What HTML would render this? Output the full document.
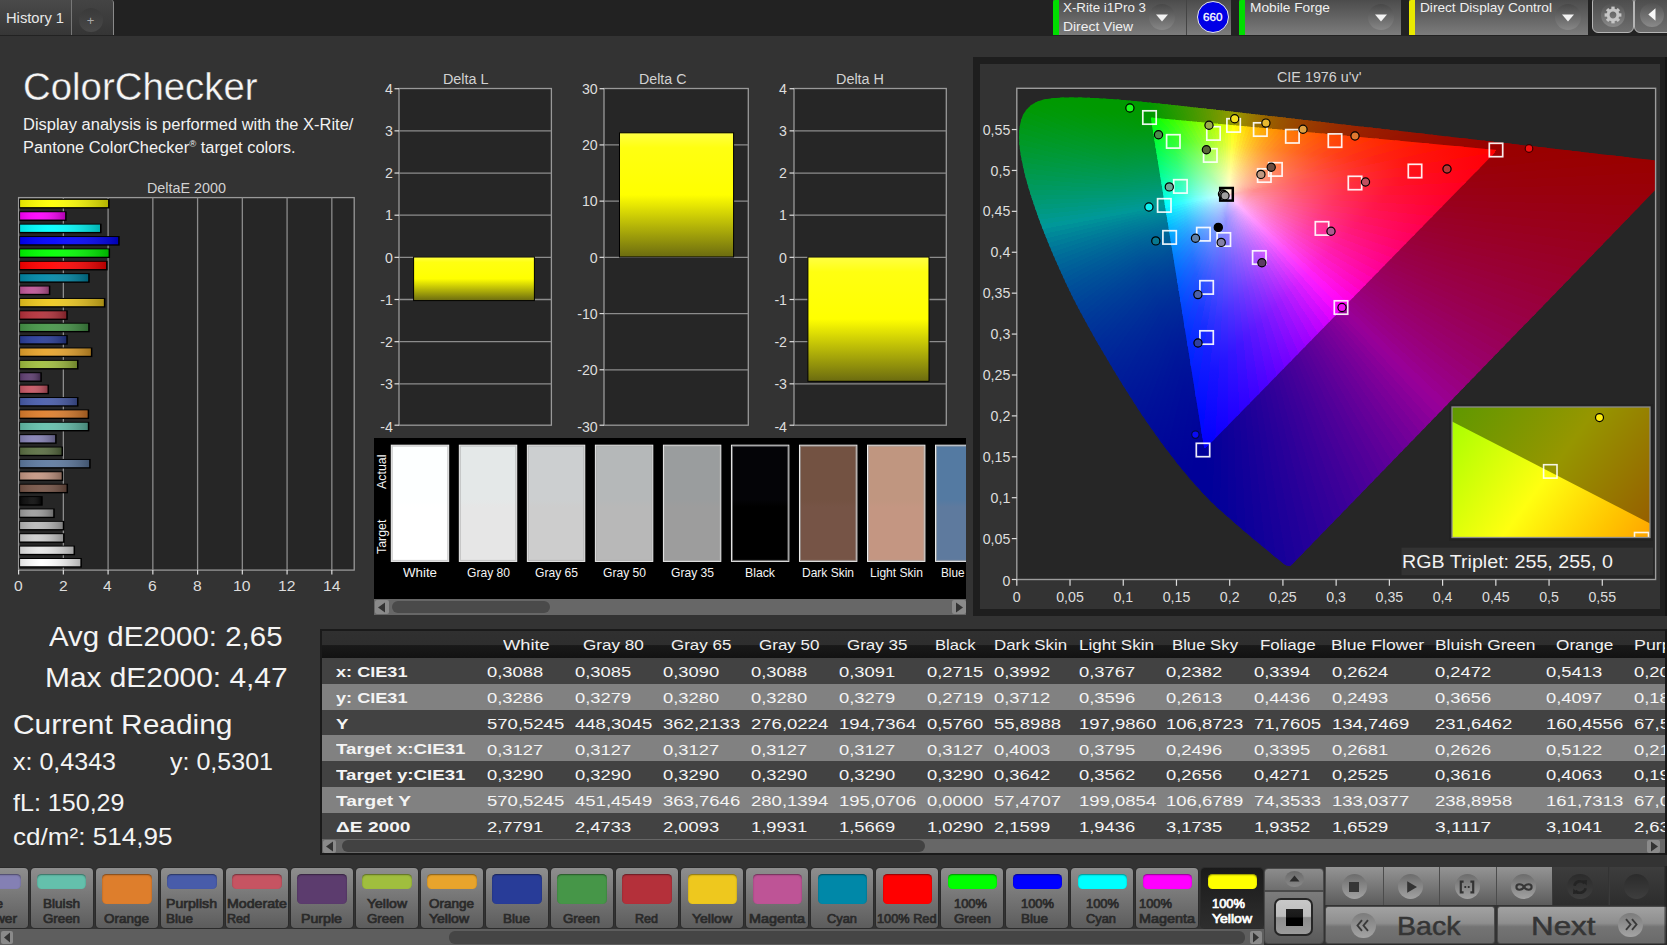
<!DOCTYPE html><html><head><meta charset="utf-8"><title>ColorChecker</title><style>
html,body{margin:0;padding:0}
body{width:1667px;height:945px;overflow:hidden;background:#333;font-family:"Liberation Sans",sans-serif;position:relative}
#app{position:absolute;left:0;top:0;width:1667px;height:945px;overflow:hidden}
#app div,#app svg{position:absolute;box-sizing:border-box}
.t{position:absolute;white-space:pre;line-height:1;transform-origin:0 50%}

</style></head><body><div id="app"><div style="left:0px;top:0px;width:1667px;height:36px;background:#222"></div><div style="left:0px;top:0px;width:72px;height:35px;background:linear-gradient(#4a4a4a,#363636);border-right:1px solid #777"></div><div style="left:72px;top:0px;width:41.5px;height:35px;background:linear-gradient(#444,#353535);border-right:1px solid #8a8a8a;border-radius:0 3px 0 0"></div><div style="left:78.6px;top:7.5px;width:24px;height:24px;border-radius:50%;background:linear-gradient(#3a3a3a,#484848)"></div><span class="t" style="left:6px;top:10.65px;font-size:14px;color:#e8e8e8;transform:scaleX(1.050);">History 1</span><span class="t" style="left:86.7px;top:13.8px;font-size:13px;color:#aaa;">+</span><div style="left:1052.5px;top:0px;width:178.5px;height:35px;background:linear-gradient(#4c4c4c,#7c7c7c)"></div><div style="left:1053.1px;top:0px;width:6.2px;height:35px;background:#00de00;border-radius:2px 0 0 0"></div><div style="left:1149px;top:4px;width:26px;height:26px;border-radius:50%;background:linear-gradient(#484848,#878787)"></div><svg style="left:1155px;top:14.3px" width="14" height="8" viewBox="0 0 14 8"><path d="M1 0.5H13L7 7.5Z" fill="#f2f2f2"/></svg><div style="left:1185.5px;top:0px;width:1px;height:35px;background:#444"></div><span class="t" style="left:1063px;top:0.83px;font-size:13.2px;color:#f0f0f0;transform:scaleX(1.011);">X-Rite i1Pro 3</span><span class="t" style="left:1063px;top:19.83px;font-size:13.2px;color:#f0f0f0;transform:scaleX(1.053);">Direct View</span><div style="left:1196.5px;top:1px;width:32px;height:32px;border-radius:50%;background:#0000e6;border:1.3px solid #e8e8e8"></div><span class="t" style="left:1202.75px;top:12.07px;font-size:11.5px;color:#fff;transform:scaleX(1.016);-webkit-text-stroke:0.3px #fff;">660</span><div style="left:1238.5px;top:0px;width:162.5px;height:35px;background:linear-gradient(#4c4c4c,#7c7c7c)"></div><div style="left:1239.1px;top:0px;width:6.2px;height:35px;background:#00de00;border-radius:2px 0 0 0"></div><div style="left:1368px;top:4px;width:26px;height:26px;border-radius:50%;background:linear-gradient(#484848,#878787)"></div><svg style="left:1374px;top:14.3px" width="14" height="8" viewBox="0 0 14 8"><path d="M1 0.5H13L7 7.5Z" fill="#f2f2f2"/></svg><span class="t" style="left:1250px;top:0.83px;font-size:13.2px;color:#f0f0f0;transform:scaleX(1.039);">Mobile Forge</span><div style="left:1408.5px;top:0px;width:179px;height:35px;background:linear-gradient(#4c4c4c,#7c7c7c)"></div><div style="left:1409.1px;top:0px;width:6.2px;height:35px;background:#e9e900;border-radius:2px 0 0 0"></div><div style="left:1555px;top:4px;width:26px;height:26px;border-radius:50%;background:linear-gradient(#484848,#878787)"></div><svg style="left:1561px;top:14.3px" width="14" height="8" viewBox="0 0 14 8"><path d="M1 0.5H13L7 7.5Z" fill="#f2f2f2"/></svg><span class="t" style="left:1420px;top:0.83px;font-size:13.2px;color:#f0f0f0;transform:scaleX(1.035);">Direct Display Control</span><div style="left:1592px;top:-4px;width:41.5px;height:36.5px;background:linear-gradient(#4a4a4a,#6e6e6e);border:1.3px solid #b5b5b5;border-radius:6px"></div><div style="left:1600.5px;top:3px;width:24px;height:24px;border-radius:50%;background:linear-gradient(#525252,#8a8a8a)"></div><svg style="left:1602.6px;top:5.2px" width="20" height="20" viewBox="-10 -10 20 20"><g fill="none" stroke="#c6c6c6"><circle r="4.9" stroke-width="3"/><g stroke-width="3.3"><path d="M0 -5.5V-8.4" transform="rotate(0)"/><path d="M0 -5.5V-8.4" transform="rotate(45)"/><path d="M0 -5.5V-8.4" transform="rotate(90)"/><path d="M0 -5.5V-8.4" transform="rotate(135)"/><path d="M0 -5.5V-8.4" transform="rotate(180)"/><path d="M0 -5.5V-8.4" transform="rotate(225)"/><path d="M0 -5.5V-8.4" transform="rotate(270)"/><path d="M0 -5.5V-8.4" transform="rotate(315)"/></g></g></svg><div style="left:1634px;top:-4px;width:40px;height:36.5px;background:linear-gradient(#4a4a4a,#6e6e6e);border:1.3px solid #b5b5b5;border-radius:6px"></div><div style="left:1640px;top:3px;width:24px;height:24px;border-radius:50%;background:linear-gradient(#525252,#8a8a8a)"></div><svg style="left:1647.5px;top:8.3px" width="8" height="13" viewBox="0 0 8 13"><path d="M7.5 0.3V12.7L0.3 6.5Z" fill="#f6f6f6"/></svg><span class="t" style="left:22.5px;top:67.22px;font-size:39.2px;color:#f6f6f6;transform:scaleX(0.979);-webkit-text-stroke:0.35px #333;">ColorChecker</span><span class="t" style="left:23.2px;top:116.99px;font-size:15.6px;color:#f2f2f2;transform:scaleX(1.056);">Display analysis is performed with the X-Rite/</span><span class="t" style="left:23.2px;top:139.69px;font-size:15.6px;color:#f2f2f2;transform:scaleX(1.053);">Pantone ColorChecker<span style="font-size:9px;position:relative;top:-5.5px">®</span> target colors.</span><span class="t" style="left:147px;top:180.55px;font-size:14px;color:#d2d2d2;transform:scaleX(1.025);">DeltaE 2000</span><svg style="left:0;top:170px" width="380" height="440" viewBox="0 170 380 440"><defs><linearGradient id="bsh" x1="0" x2="1" y1="0" y2="0"><stop offset="0" stop-color="#000" stop-opacity=".12"/><stop offset=".35" stop-color="#fff" stop-opacity=".06"/><stop offset="1" stop-color="#000" stop-opacity=".3"/></linearGradient></defs><rect x="18.6" y="197.6" width="335.6" height="372.5" fill="#262626" stroke="#999" stroke-width="1.3"/><path d="M63.35 197.6V570.1" stroke="#8c8c8c" stroke-width="1.3"/><path d="M108.09 197.6V570.1" stroke="#8c8c8c" stroke-width="1.3"/><path d="M152.84 197.6V570.1" stroke="#8c8c8c" stroke-width="1.3"/><path d="M197.59 197.6V570.1" stroke="#8c8c8c" stroke-width="1.3"/><path d="M242.33 197.6V570.1" stroke="#8c8c8c" stroke-width="1.3"/><path d="M287.08 197.6V570.1" stroke="#8c8c8c" stroke-width="1.3"/><path d="M331.83 197.6V570.1" stroke="#8c8c8c" stroke-width="1.3"/><path d="M18.6 570.1V574.6" stroke="#ddd" stroke-width="1.2"/><path d="M63.35 570.1V574.6" stroke="#ddd" stroke-width="1.2"/><path d="M108.09 570.1V574.6" stroke="#ddd" stroke-width="1.2"/><path d="M152.84 570.1V574.6" stroke="#ddd" stroke-width="1.2"/><path d="M197.59 570.1V574.6" stroke="#ddd" stroke-width="1.2"/><path d="M242.33 570.1V574.6" stroke="#ddd" stroke-width="1.2"/><path d="M287.08 570.1V574.6" stroke="#ddd" stroke-width="1.2"/><path d="M331.83 570.1V574.6" stroke="#ddd" stroke-width="1.2"/><rect x="19.3" y="198.9" width="90.34" height="9.6" fill="#000"/><rect x="20.1" y="199.9" width="87.94" height="7.2" fill="rgb(255,255,0)"/><rect x="20.1" y="199.9" width="87.94" height="7.2" fill="url(#bsh)"/><rect x="19.3" y="211.28" width="47.38" height="9.6" fill="#000"/><rect x="20.1" y="212.28" width="44.98" height="7.2" fill="rgb(255,0,255)"/><rect x="20.1" y="212.28" width="44.98" height="7.2" fill="url(#bsh)"/><rect x="19.3" y="223.67" width="82.29" height="9.6" fill="#000"/><rect x="20.1" y="224.67" width="79.89" height="7.2" fill="rgb(0,255,255)"/><rect x="20.1" y="224.67" width="79.89" height="7.2" fill="url(#bsh)"/><rect x="19.3" y="236.05" width="100.41" height="9.6" fill="#000"/><rect x="20.1" y="237.05" width="98.01" height="7.2" fill="rgb(0,0,255)"/><rect x="20.1" y="237.05" width="98.01" height="7.2" fill="url(#bsh)"/><rect x="19.3" y="248.43" width="90.79" height="9.6" fill="#000"/><rect x="20.1" y="249.43" width="88.39" height="7.2" fill="rgb(0,255,0)"/><rect x="20.1" y="249.43" width="88.39" height="7.2" fill="url(#bsh)"/><rect x="19.3" y="260.82" width="88.33" height="9.6" fill="#000"/><rect x="20.1" y="261.82" width="85.93" height="7.2" fill="rgb(255,0,0)"/><rect x="20.1" y="261.82" width="85.93" height="7.2" fill="url(#bsh)"/><rect x="19.3" y="273.2" width="70.43" height="9.6" fill="#000"/><rect x="20.1" y="274.2" width="68.03" height="7.2" fill="rgb(0,136,168)"/><rect x="20.1" y="274.2" width="68.03" height="7.2" fill="url(#bsh)"/><rect x="19.3" y="285.58" width="31.05" height="9.6" fill="#000"/><rect x="20.1" y="286.58" width="28.65" height="7.2" fill="rgb(190,84,150)"/><rect x="20.1" y="286.58" width="28.65" height="7.2" fill="url(#bsh)"/><rect x="19.3" y="297.97" width="86.09" height="9.6" fill="#000"/><rect x="20.1" y="298.97" width="83.69" height="7.2" fill="rgb(238,200,30)"/><rect x="20.1" y="298.97" width="83.69" height="7.2" fill="url(#bsh)"/><rect x="19.3" y="310.35" width="48.5" height="9.6" fill="#000"/><rect x="20.1" y="311.35" width="46.1" height="7.2" fill="rgb(180,48,58)"/><rect x="20.1" y="311.35" width="46.1" height="7.2" fill="url(#bsh)"/><rect x="19.3" y="322.73" width="70.43" height="9.6" fill="#000"/><rect x="20.1" y="323.73" width="68.03" height="7.2" fill="rgb(70,150,72)"/><rect x="20.1" y="323.73" width="68.03" height="7.2" fill="url(#bsh)"/><rect x="19.3" y="335.12" width="48.5" height="9.6" fill="#000"/><rect x="20.1" y="336.12" width="46.1" height="7.2" fill="rgb(40,60,152)"/><rect x="20.1" y="336.12" width="46.1" height="7.2" fill="url(#bsh)"/><rect x="19.3" y="347.5" width="73.11" height="9.6" fill="#000"/><rect x="20.1" y="348.5" width="70.71" height="7.2" fill="rgb(232,164,44)"/><rect x="20.1" y="348.5" width="70.71" height="7.2" fill="url(#bsh)"/><rect x="19.3" y="359.88" width="59.24" height="9.6" fill="#000"/><rect x="20.1" y="360.88" width="56.84" height="7.2" fill="rgb(160,190,62)"/><rect x="20.1" y="360.88" width="56.84" height="7.2" fill="url(#bsh)"/><rect x="19.3" y="372.27" width="22.55" height="9.6" fill="#000"/><rect x="20.1" y="373.27" width="20.15" height="7.2" fill="rgb(92,60,110)"/><rect x="20.1" y="373.27" width="20.15" height="7.2" fill="url(#bsh)"/><rect x="19.3" y="384.65" width="29.71" height="9.6" fill="#000"/><rect x="20.1" y="385.65" width="27.31" height="7.2" fill="rgb(198,84,98)"/><rect x="20.1" y="385.65" width="27.31" height="7.2" fill="url(#bsh)"/><rect x="19.3" y="397.03" width="59.24" height="9.6" fill="#000"/><rect x="20.1" y="398.03" width="56.84" height="7.2" fill="rgb(72,92,170)"/><rect x="20.1" y="398.03" width="56.84" height="7.2" fill="url(#bsh)"/><rect x="19.3" y="409.42" width="69.85" height="9.6" fill="#000"/><rect x="20.1" y="410.42" width="67.45" height="7.2" fill="rgb(222,126,44)"/><rect x="20.1" y="410.42" width="67.45" height="7.2" fill="url(#bsh)"/><rect x="19.3" y="421.8" width="70.02" height="9.6" fill="#000"/><rect x="20.1" y="422.8" width="67.62" height="7.2" fill="rgb(100,192,172)"/><rect x="20.1" y="422.8" width="67.62" height="7.2" fill="url(#bsh)"/><rect x="19.3" y="434.18" width="37.38" height="9.6" fill="#000"/><rect x="20.1" y="435.18" width="34.98" height="7.2" fill="rgb(132,128,180)"/><rect x="20.1" y="435.18" width="34.98" height="7.2" fill="url(#bsh)"/><rect x="19.3" y="446.57" width="43.7" height="9.6" fill="#000"/><rect x="20.1" y="447.57" width="41.3" height="7.2" fill="rgb(90,110,66)"/><rect x="20.1" y="447.57" width="41.3" height="7.2" fill="url(#bsh)"/><rect x="19.3" y="458.95" width="71.4" height="9.6" fill="#000"/><rect x="20.1" y="459.95" width="69" height="7.2" fill="rgb(94,122,160)"/><rect x="20.1" y="459.95" width="69" height="7.2" fill="url(#bsh)"/><rect x="19.3" y="471.33" width="43.88" height="9.6" fill="#000"/><rect x="20.1" y="472.33" width="41.48" height="7.2" fill="rgb(196,150,130)"/><rect x="20.1" y="472.33" width="41.48" height="7.2" fill="url(#bsh)"/><rect x="19.3" y="483.72" width="48.72" height="9.6" fill="#000"/><rect x="20.1" y="484.72" width="46.32" height="7.2" fill="rgb(118,84,70)"/><rect x="20.1" y="484.72" width="46.32" height="7.2" fill="url(#bsh)"/><rect x="19.3" y="496.1" width="23.42" height="9.6" fill="#000"/><rect x="20.1" y="497.1" width="21.02" height="7.2" fill="rgb(8,8,8)"/><rect x="20.1" y="497.1" width="21.02" height="7.2" fill="url(#bsh)"/><rect x="19.3" y="508.48" width="35.46" height="9.6" fill="#000"/><rect x="20.1" y="509.48" width="33.06" height="7.2" fill="rgb(157,157,157)"/><rect x="20.1" y="509.48" width="33.06" height="7.2" fill="url(#bsh)"/><rect x="19.3" y="520.87" width="44.99" height="9.6" fill="#000"/><rect x="20.1" y="521.87" width="42.59" height="7.2" fill="rgb(184,184,184)"/><rect x="20.1" y="521.87" width="42.59" height="7.2" fill="url(#bsh)"/><rect x="19.3" y="533.25" width="45.35" height="9.6" fill="#000"/><rect x="20.1" y="534.25" width="42.95" height="7.2" fill="rgb(205,205,205)"/><rect x="20.1" y="534.25" width="42.95" height="7.2" fill="url(#bsh)"/><rect x="19.3" y="545.63" width="55.74" height="9.6" fill="#000"/><rect x="20.1" y="546.63" width="53.34" height="7.2" fill="rgb(230,230,230)"/><rect x="20.1" y="546.63" width="53.34" height="7.2" fill="url(#bsh)"/><rect x="19.3" y="558.02" width="62.58" height="9.6" fill="#000"/><rect x="20.1" y="559.02" width="60.18" height="7.2" fill="rgb(255,255,255)"/><rect x="20.1" y="559.02" width="60.18" height="7.2" fill="url(#bsh)"/></svg><span class="t" style="left:13.95px;top:580.12px;font-size:13.8px;color:#ddd;transform:scaleX(1.132);">0</span><span class="t" style="left:58.7px;top:580.12px;font-size:13.8px;color:#ddd;transform:scaleX(1.132);">2</span><span class="t" style="left:103.44px;top:580.12px;font-size:13.8px;color:#ddd;transform:scaleX(1.132);">4</span><span class="t" style="left:148.19px;top:580.12px;font-size:13.8px;color:#ddd;transform:scaleX(1.132);">6</span><span class="t" style="left:192.94px;top:580.12px;font-size:13.8px;color:#ddd;transform:scaleX(1.132);">8</span><span class="t" style="left:233.28px;top:580.12px;font-size:13.8px;color:#ddd;transform:scaleX(1.139);">10</span><span class="t" style="left:278.03px;top:580.12px;font-size:13.8px;color:#ddd;transform:scaleX(1.139);">12</span><span class="t" style="left:322.78px;top:580.12px;font-size:13.8px;color:#ddd;transform:scaleX(1.139);">14</span><span class="t" style="left:49px;top:622.77px;font-size:27.8px;color:#f4f4f4;transform:scaleX(1.059);">Avg dE2000: 2,65</span><span class="t" style="left:44.5px;top:664.07px;font-size:27.8px;color:#f4f4f4;transform:scaleX(1.075);">Max dE2000: 4,47</span><span class="t" style="left:13px;top:711.47px;font-size:27.8px;color:#f4f4f4;transform:scaleX(1.076);">Current Reading</span><span class="t" style="left:13px;top:750.35px;font-size:23.8px;color:#f4f4f4;transform:scaleX(1.052);">x: 0,4343</span><span class="t" style="left:169.5px;top:750.35px;font-size:23.8px;color:#f4f4f4;transform:scaleX(1.052);">y: 0,5301</span><span class="t" style="left:13px;top:790.85px;font-size:23.8px;color:#f4f4f4;transform:scaleX(1.053);">fL: 150,29</span><span class="t" style="left:13px;top:824.85px;font-size:23.8px;color:#f4f4f4;transform:scaleX(1.096);">cd/m²: 514,95</span><svg style="left:368.9px;top:60px" width="192.4" height="380" viewBox="368.9 60 192.4 380"><defs><linearGradient id="dg398" x1="0" x2="0" y1="0" y2="1"><stop offset="0" stop-color="#ff4"/><stop offset=".12" stop-color="#ff1"/><stop offset=".5" stop-color="#ff0"/><stop offset="1" stop-color="#6b6b10"/></linearGradient></defs><rect x="398.9" y="88.5" width="152.4" height="336.7" fill="#262626" stroke="#999" stroke-width="1.3"/><path d="M394.4 88.7H398.9" stroke="#ddd" stroke-width="1.2"/><path d="M398.9 130.86H551.3" stroke="#8c8c8c" stroke-width="1.3"/><path d="M394.4 130.86H398.9" stroke="#ddd" stroke-width="1.2"/><path d="M398.9 173.03H551.3" stroke="#8c8c8c" stroke-width="1.3"/><path d="M394.4 173.03H398.9" stroke="#ddd" stroke-width="1.2"/><path d="M398.9 215.19H551.3" stroke="#8c8c8c" stroke-width="1.3"/><path d="M394.4 215.19H398.9" stroke="#ddd" stroke-width="1.2"/><path d="M398.9 257.35H551.3" stroke="#8c8c8c" stroke-width="1.3"/><path d="M394.4 257.35H398.9" stroke="#ddd" stroke-width="1.2"/><path d="M398.9 299.51H551.3" stroke="#8c8c8c" stroke-width="1.3"/><path d="M394.4 299.51H398.9" stroke="#ddd" stroke-width="1.2"/><path d="M398.9 341.68H551.3" stroke="#8c8c8c" stroke-width="1.3"/><path d="M394.4 341.68H398.9" stroke="#ddd" stroke-width="1.2"/><path d="M398.9 383.84H551.3" stroke="#8c8c8c" stroke-width="1.3"/><path d="M394.4 383.84H398.9" stroke="#ddd" stroke-width="1.2"/><path d="M394.4 425.2H398.9" stroke="#ddd" stroke-width="1.2"/><rect x="413.5" y="257" width="120.8" height="43.6" fill="url(#dg398)" stroke="#000" stroke-width="1"/></svg><span class="t" style="left:442.75px;top:72.35px;font-size:14px;color:#d2d2d2;transform:scaleX(1.026);">Delta L</span><span class="t" style="left:385.01px;top:81.78px;font-size:14.2px;color:#ddd;">4</span><span class="t" style="left:385.01px;top:124.02px;font-size:14.2px;color:#ddd;">3</span><span class="t" style="left:385.01px;top:166.25px;font-size:14.2px;color:#ddd;">2</span><span class="t" style="left:385.01px;top:208.49px;font-size:14.2px;color:#ddd;">1</span><span class="t" style="left:385.01px;top:250.73px;font-size:14.2px;color:#ddd;">0</span><span class="t" style="left:380.27px;top:292.97px;font-size:14.2px;color:#ddd;">-1</span><span class="t" style="left:380.27px;top:335.2px;font-size:14.2px;color:#ddd;">-2</span><span class="t" style="left:380.27px;top:377.44px;font-size:14.2px;color:#ddd;">-3</span><span class="t" style="left:380.27px;top:419.68px;font-size:14.2px;color:#ddd;">-4</span><svg style="left:573.7px;top:60px" width="184.3" height="380" viewBox="573.7 60 184.3 380"><defs><linearGradient id="dg603" x1="0" x2="0" y1="0" y2="1"><stop offset="0" stop-color="#ff4"/><stop offset=".12" stop-color="#ff1"/><stop offset=".5" stop-color="#ff0"/><stop offset="1" stop-color="#6b6b10"/></linearGradient></defs><rect x="603.7" y="88.5" width="144.3" height="336.7" fill="#262626" stroke="#999" stroke-width="1.3"/><path d="M599.2 88.7H603.7" stroke="#ddd" stroke-width="1.2"/><path d="M603.7 144.92H748" stroke="#8c8c8c" stroke-width="1.3"/><path d="M599.2 144.92H603.7" stroke="#ddd" stroke-width="1.2"/><path d="M603.7 201.13H748" stroke="#8c8c8c" stroke-width="1.3"/><path d="M599.2 201.13H603.7" stroke="#ddd" stroke-width="1.2"/><path d="M603.7 257.35H748" stroke="#8c8c8c" stroke-width="1.3"/><path d="M599.2 257.35H603.7" stroke="#ddd" stroke-width="1.2"/><path d="M603.7 313.57H748" stroke="#8c8c8c" stroke-width="1.3"/><path d="M599.2 313.57H603.7" stroke="#ddd" stroke-width="1.2"/><path d="M603.7 369.78H748" stroke="#8c8c8c" stroke-width="1.3"/><path d="M599.2 369.78H603.7" stroke="#ddd" stroke-width="1.2"/><path d="M599.2 425.2H603.7" stroke="#ddd" stroke-width="1.2"/><rect x="619.2" y="132.8" width="114.1" height="124.2" fill="url(#dg603)" stroke="#000" stroke-width="1"/></svg><span class="t" style="left:639.05px;top:72.35px;font-size:14px;color:#d2d2d2;transform:scaleX(1.017);">Delta C</span><span class="t" style="left:581.92px;top:81.78px;font-size:14.2px;color:#ddd;">30</span><span class="t" style="left:581.92px;top:138.1px;font-size:14.2px;color:#ddd;">20</span><span class="t" style="left:581.92px;top:194.41px;font-size:14.2px;color:#ddd;">10</span><span class="t" style="left:589.81px;top:250.73px;font-size:14.2px;color:#ddd;">0</span><span class="t" style="left:577.18px;top:307.05px;font-size:14.2px;color:#ddd;">-10</span><span class="t" style="left:577.18px;top:363.36px;font-size:14.2px;color:#ddd;">-20</span><span class="t" style="left:577.18px;top:419.68px;font-size:14.2px;color:#ddd;">-30</span><svg style="left:764.3px;top:60px" width="192.3" height="380" viewBox="764.3 60 192.3 380"><defs><linearGradient id="dg794" x1="0" x2="0" y1="0" y2="1"><stop offset="0" stop-color="#ff4"/><stop offset=".12" stop-color="#ff1"/><stop offset=".5" stop-color="#ff0"/><stop offset="1" stop-color="#6b6b10"/></linearGradient></defs><rect x="794.3" y="88.5" width="152.3" height="336.7" fill="#262626" stroke="#999" stroke-width="1.3"/><path d="M789.8 88.7H794.3" stroke="#ddd" stroke-width="1.2"/><path d="M794.3 130.86H946.6" stroke="#8c8c8c" stroke-width="1.3"/><path d="M789.8 130.86H794.3" stroke="#ddd" stroke-width="1.2"/><path d="M794.3 173.03H946.6" stroke="#8c8c8c" stroke-width="1.3"/><path d="M789.8 173.03H794.3" stroke="#ddd" stroke-width="1.2"/><path d="M794.3 215.19H946.6" stroke="#8c8c8c" stroke-width="1.3"/><path d="M789.8 215.19H794.3" stroke="#ddd" stroke-width="1.2"/><path d="M794.3 257.35H946.6" stroke="#8c8c8c" stroke-width="1.3"/><path d="M789.8 257.35H794.3" stroke="#ddd" stroke-width="1.2"/><path d="M794.3 299.51H946.6" stroke="#8c8c8c" stroke-width="1.3"/><path d="M789.8 299.51H794.3" stroke="#ddd" stroke-width="1.2"/><path d="M794.3 341.68H946.6" stroke="#8c8c8c" stroke-width="1.3"/><path d="M789.8 341.68H794.3" stroke="#ddd" stroke-width="1.2"/><path d="M794.3 383.84H946.6" stroke="#8c8c8c" stroke-width="1.3"/><path d="M789.8 383.84H794.3" stroke="#ddd" stroke-width="1.2"/><path d="M789.8 425.2H794.3" stroke="#ddd" stroke-width="1.2"/><rect x="808.2" y="257" width="121.1" height="124.3" fill="url(#dg794)" stroke="#000" stroke-width="1"/></svg><span class="t" style="left:836.2px;top:72.35px;font-size:14px;color:#d2d2d2;transform:scaleX(1.028);">Delta H</span><span class="t" style="left:779.11px;top:81.78px;font-size:14.2px;color:#ddd;">4</span><span class="t" style="left:779.11px;top:124.02px;font-size:14.2px;color:#ddd;">3</span><span class="t" style="left:779.11px;top:166.25px;font-size:14.2px;color:#ddd;">2</span><span class="t" style="left:779.11px;top:208.49px;font-size:14.2px;color:#ddd;">1</span><span class="t" style="left:779.11px;top:250.73px;font-size:14.2px;color:#ddd;">0</span><span class="t" style="left:774.38px;top:292.97px;font-size:14.2px;color:#ddd;">-1</span><span class="t" style="left:774.38px;top:335.2px;font-size:14.2px;color:#ddd;">-2</span><span class="t" style="left:774.38px;top:377.44px;font-size:14.2px;color:#ddd;">-3</span><span class="t" style="left:774.38px;top:419.68px;font-size:14.2px;color:#ddd;">-4</span><div style="left:374px;top:438px;width:592px;height:161px;background:#000"></div><svg style="left:374px;top:438px" width="592" height="161" viewBox="374 438 592 161"><linearGradient id="sg0" x1="0" x2="0" y1="0" y2="1"><stop offset=".47" stop-color="rgb(253,255,255)"/><stop offset=".53" stop-color="rgb(255,255,255)"/></linearGradient><rect x="391.3" y="445.2" width="57.4" height="116.2" fill="url(#sg0)"/><rect x="391.3" y="445.2" width="57.4" height="116.2" fill="none" stroke="#f0f0f0" stroke-width="1"/><rect x="392.3" y="446.2" width="55.4" height="114.2" fill="none" stroke="#aaa" stroke-opacity=".6" stroke-width="1"/><linearGradient id="sg1" x1="0" x2="0" y1="0" y2="1"><stop offset=".47" stop-color="rgb(228,232,232)"/><stop offset=".53" stop-color="rgb(230,230,230)"/></linearGradient><rect x="459.33" y="445.2" width="57.4" height="116.2" fill="url(#sg1)"/><rect x="459.33" y="445.2" width="57.4" height="116.2" fill="none" stroke="#f0f0f0" stroke-width="1"/><rect x="460.33" y="446.2" width="55.4" height="114.2" fill="none" stroke="#aaa" stroke-opacity=".6" stroke-width="1"/><linearGradient id="sg2" x1="0" x2="0" y1="0" y2="1"><stop offset=".47" stop-color="rgb(204,207,208)"/><stop offset=".53" stop-color="rgb(205,205,205)"/></linearGradient><rect x="527.36" y="445.2" width="57.4" height="116.2" fill="url(#sg2)"/><rect x="527.36" y="445.2" width="57.4" height="116.2" fill="none" stroke="#f0f0f0" stroke-width="1"/><rect x="528.36" y="446.2" width="55.4" height="114.2" fill="none" stroke="#aaa" stroke-opacity=".6" stroke-width="1"/><linearGradient id="sg3" x1="0" x2="0" y1="0" y2="1"><stop offset=".47" stop-color="rgb(181,184,185)"/><stop offset=".53" stop-color="rgb(184,184,184)"/></linearGradient><rect x="595.39" y="445.2" width="57.4" height="116.2" fill="url(#sg3)"/><rect x="595.39" y="445.2" width="57.4" height="116.2" fill="none" stroke="#f0f0f0" stroke-width="1"/><rect x="596.39" y="446.2" width="55.4" height="114.2" fill="none" stroke="#aaa" stroke-opacity=".6" stroke-width="1"/><linearGradient id="sg4" x1="0" x2="0" y1="0" y2="1"><stop offset=".47" stop-color="rgb(154,157,158)"/><stop offset=".53" stop-color="rgb(157,157,157)"/></linearGradient><rect x="663.42" y="445.2" width="57.4" height="116.2" fill="url(#sg4)"/><rect x="663.42" y="445.2" width="57.4" height="116.2" fill="none" stroke="#f0f0f0" stroke-width="1"/><rect x="664.42" y="446.2" width="55.4" height="114.2" fill="none" stroke="#aaa" stroke-opacity=".6" stroke-width="1"/><linearGradient id="sg5" x1="0" x2="0" y1="0" y2="1"><stop offset=".47" stop-color="rgb(4,4,7)"/><stop offset=".53" stop-color="rgb(0,0,0)"/></linearGradient><rect x="731.45" y="445.2" width="57.4" height="116.2" fill="url(#sg5)"/><rect x="731.45" y="445.2" width="57.4" height="116.2" fill="none" stroke="#f0f0f0" stroke-width="1"/><rect x="732.45" y="446.2" width="55.4" height="114.2" fill="none" stroke="#aaa" stroke-opacity=".6" stroke-width="1"/><linearGradient id="sg6" x1="0" x2="0" y1="0" y2="1"><stop offset=".47" stop-color="rgb(115,82,66)"/><stop offset=".53" stop-color="rgb(118,84,70)"/></linearGradient><rect x="799.48" y="445.2" width="57.4" height="116.2" fill="url(#sg6)"/><rect x="799.48" y="445.2" width="57.4" height="116.2" fill="none" stroke="#f0f0f0" stroke-width="1"/><rect x="800.48" y="446.2" width="55.4" height="114.2" fill="none" stroke="#aaa" stroke-opacity=".6" stroke-width="1"/><linearGradient id="sg7" x1="0" x2="0" y1="0" y2="1"><stop offset=".47" stop-color="rgb(192,150,128)"/><stop offset=".53" stop-color="rgb(196,150,130)"/></linearGradient><rect x="867.51" y="445.2" width="57.4" height="116.2" fill="url(#sg7)"/><rect x="867.51" y="445.2" width="57.4" height="116.2" fill="none" stroke="#f0f0f0" stroke-width="1"/><rect x="868.51" y="446.2" width="55.4" height="114.2" fill="none" stroke="#aaa" stroke-opacity=".6" stroke-width="1"/><linearGradient id="sg8" x1="0" x2="0" y1="0" y2="1"><stop offset=".47" stop-color="rgb(84,122,162)"/><stop offset=".53" stop-color="rgb(94,122,158)"/></linearGradient><rect x="935.54" y="445.2" width="57.4" height="116.2" fill="url(#sg8)"/><rect x="935.54" y="445.2" width="57.4" height="116.2" fill="none" stroke="#f0f0f0" stroke-width="1"/><rect x="936.54" y="446.2" width="55.4" height="114.2" fill="none" stroke="#aaa" stroke-opacity=".6" stroke-width="1"/></svg><span class="t" style="left:403.2px;top:566.5px;font-size:12.4px;color:#f4f4f4;transform:scaleX(1.073);">White</span><span class="t" style="left:466.73px;top:566.5px;font-size:12.4px;color:#f4f4f4;transform:scaleX(0.976);">Gray 80</span><span class="t" style="left:534.76px;top:566.5px;font-size:12.4px;color:#f4f4f4;transform:scaleX(0.976);">Gray 65</span><span class="t" style="left:602.79px;top:566.5px;font-size:12.4px;color:#f4f4f4;transform:scaleX(0.976);">Gray 50</span><span class="t" style="left:670.82px;top:566.5px;font-size:12.4px;color:#f4f4f4;transform:scaleX(0.976);">Gray 35</span><span class="t" style="left:745.35px;top:566.5px;font-size:12.4px;color:#f4f4f4;transform:scaleX(0.990);">Black</span><span class="t" style="left:802.38px;top:566.5px;font-size:12.4px;color:#f4f4f4;transform:scaleX(0.968);">Dark Skin</span><span class="t" style="left:869.91px;top:566.5px;font-size:12.4px;color:#f4f4f4;transform:scaleX(0.974);">Light Skin</span><span class="t" style="left:941.19px;top:566.5px;font-size:12.4px;color:#f4f4f4;transform:scaleX(0.951);">Blue Sky</span><span class="t" style="left:0px;top:-10.5px;font-size:12.4px;color:#f4f4f4;transform:scaleX(2.821);left:0;top:0;transform-origin:0 0;transform:translate(376px,489px) rotate(-90deg) scaleX(1.0);">Actual</span><span class="t" style="left:0px;top:-10.5px;font-size:12.4px;color:#f4f4f4;transform:scaleX(2.821);left:0;top:0;transform-origin:0 0;transform:translate(376px,554px) rotate(-90deg) scaleX(1.0);">Target</span><div style="left:966px;top:438px;width:8px;height:180px;background:#333"></div><div style="left:374px;top:599px;width:592px;height:15.5px;background:#676767"></div><div style="left:391.5px;top:600.5px;width:158px;height:12.5px;background:#4a4a4a;border-radius:6px"></div><div style="left:374.5px;top:600px;width:14.5px;height:13.5px;background:#8a8a8a;border-radius:2px"></div><div style="left:951.5px;top:600px;width:14.5px;height:13.5px;background:#8a8a8a;border-radius:2px"></div><svg style="left:377px;top:601.5px" width="9" height="11" viewBox="0 0 9 11"><path d="M8 0.5V10.5L1 5.5Z" fill="#333"/></svg><svg style="left:955px;top:601.5px" width="9" height="11" viewBox="0 0 9 11"><path d="M1 0.5V10.5L8 5.5Z" fill="#333"/></svg><div style="left:972.5px;top:57px;width:700px;height:558.5px;background:#1e1e1e"></div><div style="left:979.5px;top:64px;width:680.5px;height:544.5px;background:#333"></div><div style="left:1665px;top:57px;width:2px;height:558.5px;background:#141414"></div><span class="t" style="left:1277.25px;top:69.65px;font-size:14px;color:#d2d2d2;transform:scaleX(1.025);">CIE 1976 u&#x27;v&#x27;</span><svg style="left:960px;top:60px" width="707" height="560" viewBox="960 60 707 560"><defs><linearGradient id="o0" gradientUnits="userSpaceOnUse" x1="1450.7" y1="197.6" x2="1645.5" y2="200.2"><stop offset="0" stop-color="#99001a"/><stop offset=".3" stop-color="#990013"/><stop offset=".7" stop-color="#99000e"/><stop offset="1" stop-color="#99000b"/></linearGradient><linearGradient id="o1" gradientUnits="userSpaceOnUse" x1="1445.2" y1="203.3" x2="1635.3" y2="210.7"><stop offset="0" stop-color="#99001d"/><stop offset=".3" stop-color="#990017"/><stop offset=".7" stop-color="#990012"/><stop offset="1" stop-color="#99000f"/></linearGradient><linearGradient id="o2" gradientUnits="userSpaceOnUse" x1="1440" y1="208.6" x2="1625.5" y2="220.8"><stop offset="0" stop-color="#990021"/><stop offset=".3" stop-color="#99001a"/><stop offset=".7" stop-color="#990016"/><stop offset="1" stop-color="#990012"/></linearGradient><linearGradient id="o3" gradientUnits="userSpaceOnUse" x1="1434.9" y1="213.7" x2="1616.2" y2="230.4"><stop offset="0" stop-color="#990025"/><stop offset=".3" stop-color="#99001e"/><stop offset=".7" stop-color="#990019"/><stop offset="1" stop-color="#990016"/></linearGradient><linearGradient id="o4" gradientUnits="userSpaceOnUse" x1="1430.2" y1="218.6" x2="1607.2" y2="239.6"><stop offset="0" stop-color="#990029"/><stop offset=".3" stop-color="#990022"/><stop offset=".7" stop-color="#99001d"/><stop offset="1" stop-color="#99001a"/></linearGradient><linearGradient id="o5" gradientUnits="userSpaceOnUse" x1="1425.5" y1="223.3" x2="1598.7" y2="248.4"><stop offset="0" stop-color="#99002c"/><stop offset=".3" stop-color="#990026"/><stop offset=".7" stop-color="#990021"/><stop offset="1" stop-color="#99001e"/></linearGradient><linearGradient id="o6" gradientUnits="userSpaceOnUse" x1="1421.1" y1="227.9" x2="1590.4" y2="257"><stop offset="0" stop-color="#990030"/><stop offset=".3" stop-color="#990029"/><stop offset=".7" stop-color="#990025"/><stop offset="1" stop-color="#990022"/></linearGradient><linearGradient id="o7" gradientUnits="userSpaceOnUse" x1="1416.8" y1="232.3" x2="1582.4" y2="265.2"><stop offset="0" stop-color="#990034"/><stop offset=".3" stop-color="#99002d"/><stop offset=".7" stop-color="#990029"/><stop offset="1" stop-color="#990025"/></linearGradient><linearGradient id="o8" gradientUnits="userSpaceOnUse" x1="1412.7" y1="236.5" x2="1574.7" y2="273.1"><stop offset="0" stop-color="#990037"/><stop offset=".3" stop-color="#990031"/><stop offset=".7" stop-color="#99002d"/><stop offset="1" stop-color="#990029"/></linearGradient><linearGradient id="o9" gradientUnits="userSpaceOnUse" x1="1408.7" y1="240.6" x2="1567.2" y2="280.8"><stop offset="0" stop-color="#99003b"/><stop offset=".3" stop-color="#990035"/><stop offset=".7" stop-color="#990031"/><stop offset="1" stop-color="#99002d"/></linearGradient><linearGradient id="o10" gradientUnits="userSpaceOnUse" x1="1404.8" y1="244.5" x2="1560" y2="288.3"><stop offset="0" stop-color="#99003f"/><stop offset=".3" stop-color="#990039"/><stop offset=".7" stop-color="#990034"/><stop offset="1" stop-color="#990031"/></linearGradient><linearGradient id="o11" gradientUnits="userSpaceOnUse" x1="1401" y1="248.4" x2="1552.9" y2="295.6"><stop offset="0" stop-color="#990043"/><stop offset=".3" stop-color="#99003d"/><stop offset=".7" stop-color="#990039"/><stop offset="1" stop-color="#990035"/></linearGradient><linearGradient id="o12" gradientUnits="userSpaceOnUse" x1="1397.4" y1="252.2" x2="1546.1" y2="302.6"><stop offset="0" stop-color="#990047"/><stop offset=".3" stop-color="#990041"/><stop offset=".7" stop-color="#99003d"/><stop offset="1" stop-color="#99003a"/></linearGradient><linearGradient id="o13" gradientUnits="userSpaceOnUse" x1="1393.8" y1="255.8" x2="1539.4" y2="309.5"><stop offset="0" stop-color="#99004a"/><stop offset=".3" stop-color="#990045"/><stop offset=".7" stop-color="#990041"/><stop offset="1" stop-color="#99003e"/></linearGradient><linearGradient id="o14" gradientUnits="userSpaceOnUse" x1="1390.3" y1="259.4" x2="1532.8" y2="316.3"><stop offset="0" stop-color="#99004e"/><stop offset=".3" stop-color="#990049"/><stop offset=".7" stop-color="#990045"/><stop offset="1" stop-color="#990042"/></linearGradient><linearGradient id="o15" gradientUnits="userSpaceOnUse" x1="1386.9" y1="262.9" x2="1526.4" y2="322.9"><stop offset="0" stop-color="#990052"/><stop offset=".3" stop-color="#99004d"/><stop offset=".7" stop-color="#990049"/><stop offset="1" stop-color="#990047"/></linearGradient><linearGradient id="o16" gradientUnits="userSpaceOnUse" x1="1383.5" y1="266.3" x2="1520.2" y2="329.3"><stop offset="0" stop-color="#990057"/><stop offset=".3" stop-color="#990051"/><stop offset=".7" stop-color="#99004e"/><stop offset="1" stop-color="#99004b"/></linearGradient><linearGradient id="o17" gradientUnits="userSpaceOnUse" x1="1380.2" y1="269.7" x2="1514" y2="335.7"><stop offset="0" stop-color="#99005b"/><stop offset=".3" stop-color="#990056"/><stop offset=".7" stop-color="#990052"/><stop offset="1" stop-color="#990050"/></linearGradient><linearGradient id="o18" gradientUnits="userSpaceOnUse" x1="1377" y1="273" x2="1508" y2="341.9"><stop offset="0" stop-color="#99005f"/><stop offset=".3" stop-color="#99005a"/><stop offset=".7" stop-color="#990057"/><stop offset="1" stop-color="#990055"/></linearGradient><linearGradient id="o19" gradientUnits="userSpaceOnUse" x1="1373.8" y1="276.3" x2="1502" y2="348.1"><stop offset="0" stop-color="#990063"/><stop offset=".3" stop-color="#99005f"/><stop offset=".7" stop-color="#99005c"/><stop offset="1" stop-color="#990059"/></linearGradient><linearGradient id="o20" gradientUnits="userSpaceOnUse" x1="1370.6" y1="279.5" x2="1496.1" y2="354.1"><stop offset="0" stop-color="#990068"/><stop offset=".3" stop-color="#990064"/><stop offset=".7" stop-color="#990061"/><stop offset="1" stop-color="#99005f"/></linearGradient><linearGradient id="o21" gradientUnits="userSpaceOnUse" x1="1367.5" y1="282.7" x2="1490.3" y2="360.1"><stop offset="0" stop-color="#99006c"/><stop offset=".3" stop-color="#990069"/><stop offset=".7" stop-color="#990066"/><stop offset="1" stop-color="#990064"/></linearGradient><linearGradient id="o22" gradientUnits="userSpaceOnUse" x1="1364.5" y1="285.8" x2="1484.6" y2="366"><stop offset="0" stop-color="#990071"/><stop offset=".3" stop-color="#99006e"/><stop offset=".7" stop-color="#99006b"/><stop offset="1" stop-color="#990069"/></linearGradient><linearGradient id="o23" gradientUnits="userSpaceOnUse" x1="1361.4" y1="288.9" x2="1478.9" y2="371.9"><stop offset="0" stop-color="#990076"/><stop offset=".3" stop-color="#990073"/><stop offset=".7" stop-color="#990070"/><stop offset="1" stop-color="#99006f"/></linearGradient><linearGradient id="o24" gradientUnits="userSpaceOnUse" x1="1358.4" y1="292" x2="1473.2" y2="377.7"><stop offset="0" stop-color="#99007b"/><stop offset=".3" stop-color="#990078"/><stop offset=".7" stop-color="#990076"/><stop offset="1" stop-color="#990075"/></linearGradient><linearGradient id="o25" gradientUnits="userSpaceOnUse" x1="1355.4" y1="295.1" x2="1467.6" y2="383.5"><stop offset="0" stop-color="#990080"/><stop offset=".3" stop-color="#99007e"/><stop offset=".7" stop-color="#99007c"/><stop offset="1" stop-color="#99007b"/></linearGradient><linearGradient id="o26" gradientUnits="userSpaceOnUse" x1="1352.4" y1="298.1" x2="1462" y2="389.2"><stop offset="0" stop-color="#990085"/><stop offset=".3" stop-color="#990083"/><stop offset=".7" stop-color="#990082"/><stop offset="1" stop-color="#990081"/></linearGradient><linearGradient id="o27" gradientUnits="userSpaceOnUse" x1="1349.5" y1="301.1" x2="1456.5" y2="395"><stop offset="0" stop-color="#99008b"/><stop offset=".3" stop-color="#990089"/><stop offset=".7" stop-color="#990088"/><stop offset="1" stop-color="#990088"/></linearGradient><linearGradient id="o28" gradientUnits="userSpaceOnUse" x1="1346.5" y1="304.1" x2="1451" y2="400.7"><stop offset="0" stop-color="#990090"/><stop offset=".3" stop-color="#990090"/><stop offset=".7" stop-color="#99008f"/><stop offset="1" stop-color="#99008e"/></linearGradient><linearGradient id="o29" gradientUnits="userSpaceOnUse" x1="1343.6" y1="307.2" x2="1445.4" y2="406.4"><stop offset="0" stop-color="#990096"/><stop offset=".3" stop-color="#990096"/><stop offset=".7" stop-color="#990096"/><stop offset="1" stop-color="#990096"/></linearGradient><linearGradient id="o30" gradientUnits="userSpaceOnUse" x1="1340.6" y1="310.2" x2="1439.9" y2="412.1"><stop offset="0" stop-color="#960099"/><stop offset=".3" stop-color="#950099"/><stop offset=".7" stop-color="#950099"/><stop offset="1" stop-color="#950099"/></linearGradient><linearGradient id="o31" gradientUnits="userSpaceOnUse" x1="1337.7" y1="313.2" x2="1434.4" y2="417.8"><stop offset="0" stop-color="#900099"/><stop offset=".3" stop-color="#8f0099"/><stop offset=".7" stop-color="#8e0099"/><stop offset="1" stop-color="#8e0099"/></linearGradient><linearGradient id="o32" gradientUnits="userSpaceOnUse" x1="1334.7" y1="316.2" x2="1428.8" y2="423.5"><stop offset="0" stop-color="#8a0099"/><stop offset=".3" stop-color="#880099"/><stop offset=".7" stop-color="#870099"/><stop offset="1" stop-color="#870099"/></linearGradient><linearGradient id="o33" gradientUnits="userSpaceOnUse" x1="1331.7" y1="319.3" x2="1423.2" y2="429.3"><stop offset="0" stop-color="#840099"/><stop offset=".3" stop-color="#820099"/><stop offset=".7" stop-color="#810099"/><stop offset="1" stop-color="#800099"/></linearGradient><linearGradient id="o34" gradientUnits="userSpaceOnUse" x1="1328.7" y1="322.3" x2="1417.6" y2="435"><stop offset="0" stop-color="#7f0099"/><stop offset=".3" stop-color="#7c0099"/><stop offset=".7" stop-color="#7b0099"/><stop offset="1" stop-color="#790099"/></linearGradient><linearGradient id="o35" gradientUnits="userSpaceOnUse" x1="1325.7" y1="325.4" x2="1412" y2="440.9"><stop offset="0" stop-color="#7a0099"/><stop offset=".3" stop-color="#770099"/><stop offset=".7" stop-color="#750099"/><stop offset="1" stop-color="#730099"/></linearGradient><linearGradient id="o36" gradientUnits="userSpaceOnUse" x1="1322.7" y1="328.5" x2="1406.3" y2="446.7"><stop offset="0" stop-color="#750099"/><stop offset=".3" stop-color="#710099"/><stop offset=".7" stop-color="#6f0099"/><stop offset="1" stop-color="#6d0099"/></linearGradient><linearGradient id="o37" gradientUnits="userSpaceOnUse" x1="1319.6" y1="331.6" x2="1400.5" y2="452.7"><stop offset="0" stop-color="#700099"/><stop offset=".3" stop-color="#6c0099"/><stop offset=".7" stop-color="#690099"/><stop offset="1" stop-color="#670099"/></linearGradient><linearGradient id="o38" gradientUnits="userSpaceOnUse" x1="1316.5" y1="334.8" x2="1394.7" y2="458.7"><stop offset="0" stop-color="#6b0099"/><stop offset=".3" stop-color="#670099"/><stop offset=".7" stop-color="#640099"/><stop offset="1" stop-color="#620099"/></linearGradient><linearGradient id="o39" gradientUnits="userSpaceOnUse" x1="1313.4" y1="338" x2="1388.8" y2="464.7"><stop offset="0" stop-color="#660099"/><stop offset=".3" stop-color="#620099"/><stop offset=".7" stop-color="#5f0099"/><stop offset="1" stop-color="#5c0099"/></linearGradient><linearGradient id="o40" gradientUnits="userSpaceOnUse" x1="1310.2" y1="341.3" x2="1382.8" y2="470.9"><stop offset="0" stop-color="#610099"/><stop offset=".3" stop-color="#5d0099"/><stop offset=".7" stop-color="#590099"/><stop offset="1" stop-color="#570099"/></linearGradient><linearGradient id="o41" gradientUnits="userSpaceOnUse" x1="1307" y1="344.6" x2="1376.8" y2="477.2"><stop offset="0" stop-color="#5d0099"/><stop offset=".3" stop-color="#580099"/><stop offset=".7" stop-color="#540099"/><stop offset="1" stop-color="#520099"/></linearGradient><linearGradient id="o42" gradientUnits="userSpaceOnUse" x1="1303.7" y1="347.9" x2="1370.6" y2="483.5"><stop offset="0" stop-color="#580099"/><stop offset=".3" stop-color="#530099"/><stop offset=".7" stop-color="#4f0099"/><stop offset="1" stop-color="#4d0099"/></linearGradient><linearGradient id="o43" gradientUnits="userSpaceOnUse" x1="1300.4" y1="351.3" x2="1364.3" y2="490"><stop offset="0" stop-color="#540099"/><stop offset=".3" stop-color="#4e0099"/><stop offset=".7" stop-color="#4b0099"/><stop offset="1" stop-color="#480099"/></linearGradient><linearGradient id="o44" gradientUnits="userSpaceOnUse" x1="1296.9" y1="354.8" x2="1357.9" y2="496.6"><stop offset="0" stop-color="#4f0099"/><stop offset=".3" stop-color="#4a0099"/><stop offset=".7" stop-color="#460099"/><stop offset="1" stop-color="#430099"/></linearGradient><linearGradient id="o45" gradientUnits="userSpaceOnUse" x1="1293.5" y1="358.4" x2="1351.3" y2="503.4"><stop offset="0" stop-color="#4b0099"/><stop offset=".3" stop-color="#450099"/><stop offset=".7" stop-color="#410099"/><stop offset="1" stop-color="#3e0099"/></linearGradient><linearGradient id="o46" gradientUnits="userSpaceOnUse" x1="1289.9" y1="362.1" x2="1344.6" y2="510.3"><stop offset="0" stop-color="#470099"/><stop offset=".3" stop-color="#410099"/><stop offset=".7" stop-color="#3d0099"/><stop offset="1" stop-color="#390099"/></linearGradient><linearGradient id="o47" gradientUnits="userSpaceOnUse" x1="1286.2" y1="365.8" x2="1337.7" y2="517.4"><stop offset="0" stop-color="#430099"/><stop offset=".3" stop-color="#3c0099"/><stop offset=".7" stop-color="#380099"/><stop offset="1" stop-color="#350099"/></linearGradient><linearGradient id="o48" gradientUnits="userSpaceOnUse" x1="1282.5" y1="369.6" x2="1330.6" y2="524.7"><stop offset="0" stop-color="#3f0099"/><stop offset=".3" stop-color="#380099"/><stop offset=".7" stop-color="#340099"/><stop offset="1" stop-color="#300099"/></linearGradient><linearGradient id="o49" gradientUnits="userSpaceOnUse" x1="1278.6" y1="373.6" x2="1323.3" y2="532.2"><stop offset="0" stop-color="#3a0099"/><stop offset=".3" stop-color="#340099"/><stop offset=".7" stop-color="#2f0099"/><stop offset="1" stop-color="#2c0099"/></linearGradient><linearGradient id="o50" gradientUnits="userSpaceOnUse" x1="1274.6" y1="377.7" x2="1315.8" y2="539.9"><stop offset="0" stop-color="#360099"/><stop offset=".3" stop-color="#2f0099"/><stop offset=".7" stop-color="#2b0099"/><stop offset="1" stop-color="#270099"/></linearGradient><linearGradient id="o51" gradientUnits="userSpaceOnUse" x1="1270.5" y1="381.9" x2="1308.1" y2="547.9"><stop offset="0" stop-color="#320099"/><stop offset=".3" stop-color="#2b0099"/><stop offset=".7" stop-color="#260099"/><stop offset="1" stop-color="#230099"/></linearGradient><linearGradient id="o52" gradientUnits="userSpaceOnUse" x1="1266.3" y1="386.2" x2="1300.1" y2="556.2"><stop offset="0" stop-color="#2e0099"/><stop offset=".3" stop-color="#270099"/><stop offset=".7" stop-color="#220099"/><stop offset="1" stop-color="#1e0099"/></linearGradient><linearGradient id="o53" gradientUnits="userSpaceOnUse" x1="1261.8" y1="390.7" x2="1291.7" y2="564.8"><stop offset="0" stop-color="#2a0099"/><stop offset=".3" stop-color="#230099"/><stop offset=".7" stop-color="#1e0099"/><stop offset="1" stop-color="#1a0099"/></linearGradient><linearGradient id="o54" gradientUnits="userSpaceOnUse" x1="1257.3" y1="395.4" x2="1281.4" y2="562.1"><stop offset="0" stop-color="#260099"/><stop offset=".3" stop-color="#1f0099"/><stop offset=".7" stop-color="#1a0099"/><stop offset="1" stop-color="#160099"/></linearGradient><linearGradient id="o55" gradientUnits="userSpaceOnUse" x1="1252.5" y1="400.3" x2="1270.6" y2="553.1"><stop offset="0" stop-color="#220099"/><stop offset=".3" stop-color="#1b0099"/><stop offset=".7" stop-color="#170099"/><stop offset="1" stop-color="#130099"/></linearGradient><linearGradient id="o56" gradientUnits="userSpaceOnUse" x1="1247.5" y1="405.4" x2="1260.3" y2="544.6"><stop offset="0" stop-color="#1e0099"/><stop offset=".3" stop-color="#180099"/><stop offset=".7" stop-color="#130099"/><stop offset="1" stop-color="#100099"/></linearGradient><linearGradient id="o57" gradientUnits="userSpaceOnUse" x1="1242.3" y1="410.7" x2="1250.6" y2="536.6"><stop offset="0" stop-color="#1a0099"/><stop offset=".3" stop-color="#140099"/><stop offset=".7" stop-color="#100099"/><stop offset="1" stop-color="#0d0099"/></linearGradient><linearGradient id="o58" gradientUnits="userSpaceOnUse" x1="1236.9" y1="416.3" x2="1241.3" y2="528.7"><stop offset="0" stop-color="#150099"/><stop offset=".3" stop-color="#110099"/><stop offset=".7" stop-color="#0d0099"/><stop offset="1" stop-color="#0a0099"/></linearGradient><linearGradient id="o59" gradientUnits="userSpaceOnUse" x1="1231.1" y1="422.1" x2="1232.4" y2="521.1"><stop offset="0" stop-color="#110099"/><stop offset=".3" stop-color="#0d0099"/><stop offset=".7" stop-color="#0a0099"/><stop offset="1" stop-color="#070099"/></linearGradient><linearGradient id="o60" gradientUnits="userSpaceOnUse" x1="1225.1" y1="428.3" x2="1224" y2="513.6"><stop offset="0" stop-color="#0d0099"/><stop offset=".3" stop-color="#0a0099"/><stop offset=".7" stop-color="#060099"/><stop offset="1" stop-color="#040099"/></linearGradient><linearGradient id="o61" gradientUnits="userSpaceOnUse" x1="1218.7" y1="434.8" x2="1215.9" y2="506.3"><stop offset="0" stop-color="#090099"/><stop offset=".3" stop-color="#060099"/><stop offset=".7" stop-color="#030099"/><stop offset="1" stop-color="#010099"/></linearGradient><linearGradient id="o62" gradientUnits="userSpaceOnUse" x1="1212" y1="441.7" x2="1208.2" y2="498.8"><stop offset="0" stop-color="#050099"/><stop offset=".3" stop-color="#020099"/><stop offset=".7" stop-color="#000099"/><stop offset="1" stop-color="#000099"/></linearGradient><linearGradient id="o63" gradientUnits="userSpaceOnUse" x1="1204.8" y1="449.1" x2="1200.9" y2="491.1"><stop offset="0" stop-color="#000099"/><stop offset=".3" stop-color="#000099"/><stop offset=".7" stop-color="#000099"/><stop offset="1" stop-color="#000099"/></linearGradient><linearGradient id="o64" gradientUnits="userSpaceOnUse" x1="1200.7" y1="427" x2="1194" y2="483.3"><stop offset="0" stop-color="#000499"/><stop offset=".3" stop-color="#000199"/><stop offset=".7" stop-color="#000099"/><stop offset="1" stop-color="#000099"/></linearGradient><linearGradient id="o65" gradientUnits="userSpaceOnUse" x1="1197.4" y1="406.8" x2="1187.4" y2="475.7"><stop offset="0" stop-color="#000899"/><stop offset=".3" stop-color="#000599"/><stop offset=".7" stop-color="#000299"/><stop offset="1" stop-color="#000099"/></linearGradient><linearGradient id="o66" gradientUnits="userSpaceOnUse" x1="1194.6" y1="389.7" x2="1181.2" y2="468.1"><stop offset="0" stop-color="#000c99"/><stop offset=".3" stop-color="#000899"/><stop offset=".7" stop-color="#000499"/><stop offset="1" stop-color="#000199"/></linearGradient><linearGradient id="o67" gradientUnits="userSpaceOnUse" x1="1192.3" y1="375.1" x2="1175.2" y2="460.7"><stop offset="0" stop-color="#001099"/><stop offset=".3" stop-color="#000b99"/><stop offset=".7" stop-color="#000699"/><stop offset="1" stop-color="#000399"/></linearGradient><linearGradient id="o68" gradientUnits="userSpaceOnUse" x1="1190.2" y1="362.4" x2="1169.6" y2="453.4"><stop offset="0" stop-color="#001499"/><stop offset=".3" stop-color="#000d99"/><stop offset=".7" stop-color="#000899"/><stop offset="1" stop-color="#000499"/></linearGradient><linearGradient id="o69" gradientUnits="userSpaceOnUse" x1="1188.4" y1="351.2" x2="1164.3" y2="446.3"><stop offset="0" stop-color="#001799"/><stop offset=".3" stop-color="#001099"/><stop offset=".7" stop-color="#000b99"/><stop offset="1" stop-color="#000699"/></linearGradient><linearGradient id="o70" gradientUnits="userSpaceOnUse" x1="1186.8" y1="341.3" x2="1159.2" y2="439.4"><stop offset="0" stop-color="#001b99"/><stop offset=".3" stop-color="#001399"/><stop offset=".7" stop-color="#000d99"/><stop offset="1" stop-color="#000899"/></linearGradient><linearGradient id="o71" gradientUnits="userSpaceOnUse" x1="1185.4" y1="332.4" x2="1154.3" y2="432.6"><stop offset="0" stop-color="#001e99"/><stop offset=".3" stop-color="#001599"/><stop offset=".7" stop-color="#000f99"/><stop offset="1" stop-color="#000a99"/></linearGradient><linearGradient id="o72" gradientUnits="userSpaceOnUse" x1="1184.1" y1="324.5" x2="1149.6" y2="426"><stop offset="0" stop-color="#002199"/><stop offset=".3" stop-color="#001899"/><stop offset=".7" stop-color="#001199"/><stop offset="1" stop-color="#000c99"/></linearGradient><linearGradient id="o73" gradientUnits="userSpaceOnUse" x1="1182.9" y1="317.3" x2="1145.2" y2="419.6"><stop offset="0" stop-color="#002499"/><stop offset=".3" stop-color="#001b99"/><stop offset=".7" stop-color="#001399"/><stop offset="1" stop-color="#000e99"/></linearGradient><linearGradient id="o74" gradientUnits="userSpaceOnUse" x1="1181.9" y1="310.7" x2="1141" y2="413.3"><stop offset="0" stop-color="#002899"/><stop offset=".3" stop-color="#001d99"/><stop offset=".7" stop-color="#001699"/><stop offset="1" stop-color="#001099"/></linearGradient><linearGradient id="o75" gradientUnits="userSpaceOnUse" x1="1180.9" y1="304.7" x2="1136.9" y2="407.1"><stop offset="0" stop-color="#002b99"/><stop offset=".3" stop-color="#002099"/><stop offset=".7" stop-color="#001899"/><stop offset="1" stop-color="#001299"/></linearGradient><linearGradient id="o76" gradientUnits="userSpaceOnUse" x1="1180" y1="299.1" x2="1133" y2="401.1"><stop offset="0" stop-color="#002e99"/><stop offset=".3" stop-color="#002299"/><stop offset=".7" stop-color="#001a99"/><stop offset="1" stop-color="#001499"/></linearGradient><linearGradient id="o77" gradientUnits="userSpaceOnUse" x1="1179.2" y1="294" x2="1129.3" y2="395.3"><stop offset="0" stop-color="#003099"/><stop offset=".3" stop-color="#002599"/><stop offset=".7" stop-color="#001c99"/><stop offset="1" stop-color="#001699"/></linearGradient><linearGradient id="o78" gradientUnits="userSpaceOnUse" x1="1178.4" y1="289.3" x2="1125.6" y2="389.6"><stop offset="0" stop-color="#003399"/><stop offset=".3" stop-color="#002799"/><stop offset=".7" stop-color="#001e99"/><stop offset="1" stop-color="#001899"/></linearGradient><linearGradient id="o79" gradientUnits="userSpaceOnUse" x1="1177.7" y1="284.8" x2="1122.2" y2="384"><stop offset="0" stop-color="#003699"/><stop offset=".3" stop-color="#002999"/><stop offset=".7" stop-color="#002099"/><stop offset="1" stop-color="#001a99"/></linearGradient><linearGradient id="o80" gradientUnits="userSpaceOnUse" x1="1177" y1="280.7" x2="1118.8" y2="378.5"><stop offset="0" stop-color="#003999"/><stop offset=".3" stop-color="#002c99"/><stop offset=".7" stop-color="#002399"/><stop offset="1" stop-color="#001c99"/></linearGradient><linearGradient id="o81" gradientUnits="userSpaceOnUse" x1="1176.4" y1="276.8" x2="1115.5" y2="373.2"><stop offset="0" stop-color="#003c99"/><stop offset=".3" stop-color="#002e99"/><stop offset=".7" stop-color="#002599"/><stop offset="1" stop-color="#001e99"/></linearGradient><linearGradient id="o82" gradientUnits="userSpaceOnUse" x1="1175.8" y1="273.1" x2="1112.4" y2="368"><stop offset="0" stop-color="#003e99"/><stop offset=".3" stop-color="#003199"/><stop offset=".7" stop-color="#002799"/><stop offset="1" stop-color="#002099"/></linearGradient><linearGradient id="o83" gradientUnits="userSpaceOnUse" x1="1175.2" y1="269.6" x2="1109.3" y2="362.9"><stop offset="0" stop-color="#004199"/><stop offset=".3" stop-color="#003399"/><stop offset=".7" stop-color="#002999"/><stop offset="1" stop-color="#002299"/></linearGradient><linearGradient id="o84" gradientUnits="userSpaceOnUse" x1="1174.7" y1="266.3" x2="1106.4" y2="357.8"><stop offset="0" stop-color="#004499"/><stop offset=".3" stop-color="#003699"/><stop offset=".7" stop-color="#002c99"/><stop offset="1" stop-color="#002599"/></linearGradient><linearGradient id="o85" gradientUnits="userSpaceOnUse" x1="1174.2" y1="263.2" x2="1103.5" y2="352.9"><stop offset="0" stop-color="#004699"/><stop offset=".3" stop-color="#003899"/><stop offset=".7" stop-color="#002e99"/><stop offset="1" stop-color="#002799"/></linearGradient><linearGradient id="o86" gradientUnits="userSpaceOnUse" x1="1173.7" y1="260.2" x2="1100.6" y2="348"><stop offset="0" stop-color="#004999"/><stop offset=".3" stop-color="#003a99"/><stop offset=".7" stop-color="#003099"/><stop offset="1" stop-color="#002999"/></linearGradient><linearGradient id="o87" gradientUnits="userSpaceOnUse" x1="1173.3" y1="257.3" x2="1097.9" y2="343.3"><stop offset="0" stop-color="#004c99"/><stop offset=".3" stop-color="#003d99"/><stop offset=".7" stop-color="#003399"/><stop offset="1" stop-color="#002b99"/></linearGradient><linearGradient id="o88" gradientUnits="userSpaceOnUse" x1="1172.8" y1="254.6" x2="1095.2" y2="338.6"><stop offset="0" stop-color="#004e99"/><stop offset=".3" stop-color="#003f99"/><stop offset=".7" stop-color="#003599"/><stop offset="1" stop-color="#002e99"/></linearGradient><linearGradient id="o89" gradientUnits="userSpaceOnUse" x1="1172.4" y1="252" x2="1092.6" y2="333.9"><stop offset="0" stop-color="#005199"/><stop offset=".3" stop-color="#004299"/><stop offset=".7" stop-color="#003899"/><stop offset="1" stop-color="#003099"/></linearGradient><linearGradient id="o90" gradientUnits="userSpaceOnUse" x1="1172" y1="249.4" x2="1090" y2="329.4"><stop offset="0" stop-color="#005399"/><stop offset=".3" stop-color="#004499"/><stop offset=".7" stop-color="#003a99"/><stop offset="1" stop-color="#003399"/></linearGradient><linearGradient id="o91" gradientUnits="userSpaceOnUse" x1="1171.6" y1="247" x2="1087.4" y2="324.8"><stop offset="0" stop-color="#005699"/><stop offset=".3" stop-color="#004799"/><stop offset=".7" stop-color="#003d99"/><stop offset="1" stop-color="#003599"/></linearGradient><linearGradient id="o92" gradientUnits="userSpaceOnUse" x1="1171.2" y1="244.7" x2="1085" y2="320.3"><stop offset="0" stop-color="#005999"/><stop offset=".3" stop-color="#004a99"/><stop offset=".7" stop-color="#003f99"/><stop offset="1" stop-color="#003899"/></linearGradient><linearGradient id="o93" gradientUnits="userSpaceOnUse" x1="1170.9" y1="242.4" x2="1082.5" y2="315.8"><stop offset="0" stop-color="#005b99"/><stop offset=".3" stop-color="#004c99"/><stop offset=".7" stop-color="#004299"/><stop offset="1" stop-color="#003b99"/></linearGradient><linearGradient id="o94" gradientUnits="userSpaceOnUse" x1="1170.5" y1="240.2" x2="1080.1" y2="311.4"><stop offset="0" stop-color="#005e99"/><stop offset=".3" stop-color="#004f99"/><stop offset=".7" stop-color="#004599"/><stop offset="1" stop-color="#003e99"/></linearGradient><linearGradient id="o95" gradientUnits="userSpaceOnUse" x1="1170.1" y1="238" x2="1077.8" y2="307"><stop offset="0" stop-color="#006099"/><stop offset=".3" stop-color="#005299"/><stop offset=".7" stop-color="#004899"/><stop offset="1" stop-color="#004099"/></linearGradient><linearGradient id="o96" gradientUnits="userSpaceOnUse" x1="1169.8" y1="236" x2="1075.6" y2="302.6"><stop offset="0" stop-color="#006399"/><stop offset=".3" stop-color="#005599"/><stop offset=".7" stop-color="#004b99"/><stop offset="1" stop-color="#004499"/></linearGradient><linearGradient id="o97" gradientUnits="userSpaceOnUse" x1="1169.5" y1="233.9" x2="1073.3" y2="298.2"><stop offset="0" stop-color="#006699"/><stop offset=".3" stop-color="#005899"/><stop offset=".7" stop-color="#004e99"/><stop offset="1" stop-color="#004799"/></linearGradient><linearGradient id="o98" gradientUnits="userSpaceOnUse" x1="1169.2" y1="231.9" x2="1071.1" y2="293.8"><stop offset="0" stop-color="#006999"/><stop offset=".3" stop-color="#005b99"/><stop offset=".7" stop-color="#005199"/><stop offset="1" stop-color="#004a99"/></linearGradient><linearGradient id="o99" gradientUnits="userSpaceOnUse" x1="1168.9" y1="230" x2="1069" y2="289.4"><stop offset="0" stop-color="#006b99"/><stop offset=".3" stop-color="#005e99"/><stop offset=".7" stop-color="#005499"/><stop offset="1" stop-color="#004d99"/></linearGradient><linearGradient id="o100" gradientUnits="userSpaceOnUse" x1="1168.5" y1="228.1" x2="1066.9" y2="285.1"><stop offset="0" stop-color="#006e99"/><stop offset=".3" stop-color="#006199"/><stop offset=".7" stop-color="#005899"/><stop offset="1" stop-color="#005199"/></linearGradient><linearGradient id="o101" gradientUnits="userSpaceOnUse" x1="1168.2" y1="226.2" x2="1064.8" y2="280.7"><stop offset="0" stop-color="#007199"/><stop offset=".3" stop-color="#006499"/><stop offset=".7" stop-color="#005b99"/><stop offset="1" stop-color="#005599"/></linearGradient><linearGradient id="o102" gradientUnits="userSpaceOnUse" x1="1167.9" y1="224.4" x2="1062.8" y2="276.3"><stop offset="0" stop-color="#007499"/><stop offset=".3" stop-color="#006899"/><stop offset=".7" stop-color="#005f99"/><stop offset="1" stop-color="#005999"/></linearGradient><linearGradient id="o103" gradientUnits="userSpaceOnUse" x1="1167.7" y1="222.6" x2="1060.8" y2="271.9"><stop offset="0" stop-color="#007799"/><stop offset=".3" stop-color="#006b99"/><stop offset=".7" stop-color="#006399"/><stop offset="1" stop-color="#005d99"/></linearGradient><linearGradient id="o104" gradientUnits="userSpaceOnUse" x1="1167.4" y1="220.8" x2="1058.8" y2="267.5"><stop offset="0" stop-color="#007a99"/><stop offset=".3" stop-color="#006f99"/><stop offset=".7" stop-color="#006799"/><stop offset="1" stop-color="#006199"/></linearGradient><linearGradient id="o105" gradientUnits="userSpaceOnUse" x1="1167.1" y1="219.1" x2="1056.9" y2="263.1"><stop offset="0" stop-color="#007d99"/><stop offset=".3" stop-color="#007399"/><stop offset=".7" stop-color="#006b99"/><stop offset="1" stop-color="#006699"/></linearGradient><linearGradient id="o106" gradientUnits="userSpaceOnUse" x1="1166.8" y1="217.4" x2="1054.9" y2="258.6"><stop offset="0" stop-color="#008099"/><stop offset=".3" stop-color="#007799"/><stop offset=".7" stop-color="#007099"/><stop offset="1" stop-color="#006a99"/></linearGradient><linearGradient id="o107" gradientUnits="userSpaceOnUse" x1="1166.5" y1="215.6" x2="1053" y2="254.2"><stop offset="0" stop-color="#008399"/><stop offset=".3" stop-color="#007b99"/><stop offset=".7" stop-color="#007499"/><stop offset="1" stop-color="#007099"/></linearGradient><linearGradient id="o108" gradientUnits="userSpaceOnUse" x1="1166.3" y1="213.9" x2="1051.1" y2="249.7"><stop offset="0" stop-color="#008699"/><stop offset=".3" stop-color="#007f99"/><stop offset=".7" stop-color="#007999"/><stop offset="1" stop-color="#007599"/></linearGradient><linearGradient id="o109" gradientUnits="userSpaceOnUse" x1="1166" y1="212.3" x2="1049.2" y2="245.2"><stop offset="0" stop-color="#008a99"/><stop offset=".3" stop-color="#008399"/><stop offset=".7" stop-color="#007f99"/><stop offset="1" stop-color="#007b99"/></linearGradient><linearGradient id="o110" gradientUnits="userSpaceOnUse" x1="1165.7" y1="210.6" x2="1047.3" y2="240.6"><stop offset="0" stop-color="#008d99"/><stop offset=".3" stop-color="#008899"/><stop offset=".7" stop-color="#008499"/><stop offset="1" stop-color="#008199"/></linearGradient><linearGradient id="o111" gradientUnits="userSpaceOnUse" x1="1165.4" y1="208.9" x2="1045.5" y2="236.1"><stop offset="0" stop-color="#009199"/><stop offset=".3" stop-color="#008d99"/><stop offset=".7" stop-color="#008a99"/><stop offset="1" stop-color="#008899"/></linearGradient><linearGradient id="o112" gradientUnits="userSpaceOnUse" x1="1165.2" y1="207.3" x2="1043.7" y2="231.4"><stop offset="0" stop-color="#009499"/><stop offset=".3" stop-color="#009299"/><stop offset=".7" stop-color="#009199"/><stop offset="1" stop-color="#008f99"/></linearGradient><linearGradient id="o113" gradientUnits="userSpaceOnUse" x1="1164.9" y1="205.6" x2="1041.9" y2="226.7"><stop offset="0" stop-color="#009899"/><stop offset=".3" stop-color="#009899"/><stop offset=".7" stop-color="#009899"/><stop offset="1" stop-color="#009799"/></linearGradient><linearGradient id="o114" gradientUnits="userSpaceOnUse" x1="1164.6" y1="203.9" x2="1040.1" y2="222"><stop offset="0" stop-color="#009996"/><stop offset=".3" stop-color="#009994"/><stop offset=".7" stop-color="#009993"/><stop offset="1" stop-color="#009992"/></linearGradient><linearGradient id="o115" gradientUnits="userSpaceOnUse" x1="1164.4" y1="202.3" x2="1038.3" y2="217.2"><stop offset="0" stop-color="#009992"/><stop offset=".3" stop-color="#00998f"/><stop offset=".7" stop-color="#00998c"/><stop offset="1" stop-color="#00998a"/></linearGradient><linearGradient id="o116" gradientUnits="userSpaceOnUse" x1="1164.1" y1="200.6" x2="1036.6" y2="212.3"><stop offset="0" stop-color="#00998e"/><stop offset=".3" stop-color="#009989"/><stop offset=".7" stop-color="#009985"/><stop offset="1" stop-color="#009982"/></linearGradient><linearGradient id="o117" gradientUnits="userSpaceOnUse" x1="1163.8" y1="198.9" x2="1034.9" y2="207.4"><stop offset="0" stop-color="#00998a"/><stop offset=".3" stop-color="#009984"/><stop offset=".7" stop-color="#00997e"/><stop offset="1" stop-color="#00997a"/></linearGradient><linearGradient id="o118" gradientUnits="userSpaceOnUse" x1="1163.6" y1="197.3" x2="1033.2" y2="202.4"><stop offset="0" stop-color="#009987"/><stop offset=".3" stop-color="#00997e"/><stop offset=".7" stop-color="#009978"/><stop offset="1" stop-color="#009973"/></linearGradient><linearGradient id="o119" gradientUnits="userSpaceOnUse" x1="1163.3" y1="195.6" x2="1031.5" y2="197.3"><stop offset="0" stop-color="#009983"/><stop offset=".3" stop-color="#009979"/><stop offset=".7" stop-color="#009971"/><stop offset="1" stop-color="#00996b"/></linearGradient><linearGradient id="o120" gradientUnits="userSpaceOnUse" x1="1163" y1="193.9" x2="1029.9" y2="192.1"><stop offset="0" stop-color="#00997f"/><stop offset=".3" stop-color="#009974"/><stop offset=".7" stop-color="#00996b"/><stop offset="1" stop-color="#009964"/></linearGradient><linearGradient id="o121" gradientUnits="userSpaceOnUse" x1="1162.7" y1="192.2" x2="1028.3" y2="186.9"><stop offset="0" stop-color="#00997c"/><stop offset=".3" stop-color="#00996e"/><stop offset=".7" stop-color="#009964"/><stop offset="1" stop-color="#00995c"/></linearGradient><linearGradient id="o122" gradientUnits="userSpaceOnUse" x1="1162.5" y1="190.4" x2="1026.8" y2="181.5"><stop offset="0" stop-color="#009978"/><stop offset=".3" stop-color="#009969"/><stop offset=".7" stop-color="#00995e"/><stop offset="1" stop-color="#009955"/></linearGradient><linearGradient id="o123" gradientUnits="userSpaceOnUse" x1="1162.2" y1="188.7" x2="1025.3" y2="176.1"><stop offset="0" stop-color="#009974"/><stop offset=".3" stop-color="#009964"/><stop offset=".7" stop-color="#009957"/><stop offset="1" stop-color="#00994e"/></linearGradient><linearGradient id="o124" gradientUnits="userSpaceOnUse" x1="1161.9" y1="186.9" x2="1024" y2="170.6"><stop offset="0" stop-color="#009971"/><stop offset=".3" stop-color="#00995f"/><stop offset=".7" stop-color="#009951"/><stop offset="1" stop-color="#009947"/></linearGradient><linearGradient id="o125" gradientUnits="userSpaceOnUse" x1="1161.6" y1="185.1" x2="1022.7" y2="164.9"><stop offset="0" stop-color="#00996d"/><stop offset=".3" stop-color="#009959"/><stop offset=".7" stop-color="#00994b"/><stop offset="1" stop-color="#009940"/></linearGradient><linearGradient id="o126" gradientUnits="userSpaceOnUse" x1="1161.3" y1="183.2" x2="1021.5" y2="159.2"><stop offset="0" stop-color="#009969"/><stop offset=".3" stop-color="#009954"/><stop offset=".7" stop-color="#009945"/><stop offset="1" stop-color="#009939"/></linearGradient><linearGradient id="o127" gradientUnits="userSpaceOnUse" x1="1161" y1="181.4" x2="1020.6" y2="153.4"><stop offset="0" stop-color="#009965"/><stop offset=".3" stop-color="#00994f"/><stop offset=".7" stop-color="#00993f"/><stop offset="1" stop-color="#009932"/></linearGradient><linearGradient id="o128" gradientUnits="userSpaceOnUse" x1="1160.7" y1="179.5" x2="1019.8" y2="147.6"><stop offset="0" stop-color="#009962"/><stop offset=".3" stop-color="#00994a"/><stop offset=".7" stop-color="#009939"/><stop offset="1" stop-color="#00992c"/></linearGradient><linearGradient id="o129" gradientUnits="userSpaceOnUse" x1="1160.4" y1="177.5" x2="1019.3" y2="141.7"><stop offset="0" stop-color="#00995e"/><stop offset=".3" stop-color="#009945"/><stop offset=".7" stop-color="#009933"/><stop offset="1" stop-color="#009925"/></linearGradient><linearGradient id="o130" gradientUnits="userSpaceOnUse" x1="1160.1" y1="175.5" x2="1019.1" y2="135.8"><stop offset="0" stop-color="#00995a"/><stop offset=".3" stop-color="#009940"/><stop offset=".7" stop-color="#00992d"/><stop offset="1" stop-color="#00991f"/></linearGradient><linearGradient id="o131" gradientUnits="userSpaceOnUse" x1="1159.7" y1="173.5" x2="1019.4" y2="129.9"><stop offset="0" stop-color="#009956"/><stop offset=".3" stop-color="#00993b"/><stop offset=".7" stop-color="#009927"/><stop offset="1" stop-color="#009919"/></linearGradient><linearGradient id="o132" gradientUnits="userSpaceOnUse" x1="1159.4" y1="171.4" x2="1020.2" y2="124.1"><stop offset="0" stop-color="#009953"/><stop offset=".3" stop-color="#009936"/><stop offset=".7" stop-color="#009922"/><stop offset="1" stop-color="#009913"/></linearGradient><linearGradient id="o133" gradientUnits="userSpaceOnUse" x1="1159" y1="169.2" x2="1021.7" y2="118.6"><stop offset="0" stop-color="#00994f"/><stop offset=".3" stop-color="#009932"/><stop offset=".7" stop-color="#00991d"/><stop offset="1" stop-color="#00990d"/></linearGradient><linearGradient id="o134" gradientUnits="userSpaceOnUse" x1="1158.7" y1="167" x2="1024" y2="113.3"><stop offset="0" stop-color="#00994b"/><stop offset=".3" stop-color="#00992d"/><stop offset=".7" stop-color="#009918"/><stop offset="1" stop-color="#009908"/></linearGradient><linearGradient id="o135" gradientUnits="userSpaceOnUse" x1="1158.3" y1="164.7" x2="1027.5" y2="108.5"><stop offset="0" stop-color="#009947"/><stop offset=".3" stop-color="#009929"/><stop offset=".7" stop-color="#009913"/><stop offset="1" stop-color="#009903"/></linearGradient><linearGradient id="o136" gradientUnits="userSpaceOnUse" x1="1157.9" y1="162.3" x2="1032.2" y2="104.4"><stop offset="0" stop-color="#009943"/><stop offset=".3" stop-color="#009925"/><stop offset=".7" stop-color="#00990f"/><stop offset="1" stop-color="#009900"/></linearGradient><linearGradient id="o137" gradientUnits="userSpaceOnUse" x1="1157.5" y1="159.9" x2="1038.6" y2="101.2"><stop offset="0" stop-color="#00993e"/><stop offset=".3" stop-color="#009921"/><stop offset=".7" stop-color="#00990b"/><stop offset="1" stop-color="#009900"/></linearGradient><linearGradient id="o138" gradientUnits="userSpaceOnUse" x1="1157.1" y1="157.3" x2="1046.4" y2="99.1"><stop offset="0" stop-color="#00993a"/><stop offset=".3" stop-color="#00991e"/><stop offset=".7" stop-color="#009908"/><stop offset="1" stop-color="#009900"/></linearGradient><linearGradient id="o139" gradientUnits="userSpaceOnUse" x1="1156.7" y1="154.7" x2="1055.5" y2="98"><stop offset="0" stop-color="#009936"/><stop offset=".3" stop-color="#00991b"/><stop offset=".7" stop-color="#009906"/><stop offset="1" stop-color="#009900"/></linearGradient><linearGradient id="o140" gradientUnits="userSpaceOnUse" x1="1156.2" y1="151.9" x2="1064.8" y2="97.6"><stop offset="0" stop-color="#009931"/><stop offset=".3" stop-color="#009918"/><stop offset=".7" stop-color="#009904"/><stop offset="1" stop-color="#009900"/></linearGradient><linearGradient id="o141" gradientUnits="userSpaceOnUse" x1="1155.8" y1="149.1" x2="1074" y2="97.5"><stop offset="0" stop-color="#00992d"/><stop offset=".3" stop-color="#009915"/><stop offset=".7" stop-color="#009902"/><stop offset="1" stop-color="#009900"/></linearGradient><linearGradient id="o142" gradientUnits="userSpaceOnUse" x1="1155.3" y1="146" x2="1082.8" y2="97.6"><stop offset="0" stop-color="#009928"/><stop offset=".3" stop-color="#009912"/><stop offset=".7" stop-color="#009901"/><stop offset="1" stop-color="#009900"/></linearGradient><linearGradient id="o143" gradientUnits="userSpaceOnUse" x1="1154.8" y1="142.9" x2="1091.1" y2="97.8"><stop offset="0" stop-color="#009923"/><stop offset=".3" stop-color="#00990f"/><stop offset=".7" stop-color="#009900"/><stop offset="1" stop-color="#009900"/></linearGradient><linearGradient id="o144" gradientUnits="userSpaceOnUse" x1="1154.2" y1="139.5" x2="1098.9" y2="98.2"><stop offset="0" stop-color="#00991e"/><stop offset=".3" stop-color="#00990c"/><stop offset=".7" stop-color="#009900"/><stop offset="1" stop-color="#009900"/></linearGradient><linearGradient id="o145" gradientUnits="userSpaceOnUse" x1="1153.7" y1="136" x2="1106.3" y2="98.7"><stop offset="0" stop-color="#009919"/><stop offset=".3" stop-color="#009909"/><stop offset=".7" stop-color="#009900"/><stop offset="1" stop-color="#009900"/></linearGradient><linearGradient id="o146" gradientUnits="userSpaceOnUse" x1="1153.1" y1="132.3" x2="1113.3" y2="99.2"><stop offset="0" stop-color="#009914"/><stop offset=".3" stop-color="#009906"/><stop offset=".7" stop-color="#009900"/><stop offset="1" stop-color="#009900"/></linearGradient><linearGradient id="o147" gradientUnits="userSpaceOnUse" x1="1152.4" y1="128.3" x2="1119.8" y2="99.7"><stop offset="0" stop-color="#00990e"/><stop offset=".3" stop-color="#009903"/><stop offset=".7" stop-color="#009900"/><stop offset="1" stop-color="#009900"/></linearGradient><linearGradient id="o148" gradientUnits="userSpaceOnUse" x1="1151.7" y1="124.1" x2="1125.9" y2="100.2"><stop offset="0" stop-color="#009909"/><stop offset=".3" stop-color="#009900"/><stop offset=".7" stop-color="#009900"/><stop offset="1" stop-color="#009900"/></linearGradient><linearGradient id="o149" gradientUnits="userSpaceOnUse" x1="1151" y1="119.6" x2="1131.7" y2="100.7"><stop offset="0" stop-color="#009903"/><stop offset=".3" stop-color="#009900"/><stop offset=".7" stop-color="#009900"/><stop offset="1" stop-color="#009900"/></linearGradient><linearGradient id="o150" gradientUnits="userSpaceOnUse" x1="1153" y1="117.6" x2="1137.1" y2="101.3"><stop offset="0" stop-color="#039900"/><stop offset=".3" stop-color="#009900"/><stop offset=".7" stop-color="#009900"/><stop offset="1" stop-color="#009900"/></linearGradient><linearGradient id="o151" gradientUnits="userSpaceOnUse" x1="1157.2" y1="118" x2="1142.3" y2="101.8"><stop offset="0" stop-color="#099900"/><stop offset=".3" stop-color="#039900"/><stop offset=".7" stop-color="#009900"/><stop offset="1" stop-color="#009900"/></linearGradient><linearGradient id="o152" gradientUnits="userSpaceOnUse" x1="1161.2" y1="118.4" x2="1147.1" y2="102.3"><stop offset="0" stop-color="#0f9900"/><stop offset=".3" stop-color="#099900"/><stop offset=".7" stop-color="#049900"/><stop offset="1" stop-color="#009900"/></linearGradient><linearGradient id="o153" gradientUnits="userSpaceOnUse" x1="1165" y1="118.7" x2="1151.7" y2="102.8"><stop offset="0" stop-color="#159900"/><stop offset=".3" stop-color="#0f9900"/><stop offset=".7" stop-color="#0a9900"/><stop offset="1" stop-color="#059900"/></linearGradient><linearGradient id="o154" gradientUnits="userSpaceOnUse" x1="1168.5" y1="119.1" x2="1156" y2="103.2"><stop offset="0" stop-color="#1a9900"/><stop offset=".3" stop-color="#159900"/><stop offset=".7" stop-color="#0f9900"/><stop offset="1" stop-color="#0b9900"/></linearGradient><linearGradient id="o155" gradientUnits="userSpaceOnUse" x1="1171.9" y1="119.4" x2="1160.1" y2="103.6"><stop offset="0" stop-color="#1f9900"/><stop offset=".3" stop-color="#1a9900"/><stop offset=".7" stop-color="#159900"/><stop offset="1" stop-color="#119900"/></linearGradient><linearGradient id="o156" gradientUnits="userSpaceOnUse" x1="1175.1" y1="119.7" x2="1164.1" y2="104.1"><stop offset="0" stop-color="#249900"/><stop offset=".3" stop-color="#1f9900"/><stop offset=".7" stop-color="#1a9900"/><stop offset="1" stop-color="#169900"/></linearGradient><linearGradient id="o157" gradientUnits="userSpaceOnUse" x1="1178.2" y1="120" x2="1167.8" y2="104.4"><stop offset="0" stop-color="#299900"/><stop offset=".3" stop-color="#249900"/><stop offset=".7" stop-color="#209900"/><stop offset="1" stop-color="#1c9900"/></linearGradient><linearGradient id="o158" gradientUnits="userSpaceOnUse" x1="1181.2" y1="120.2" x2="1171.4" y2="104.8"><stop offset="0" stop-color="#2e9900"/><stop offset=".3" stop-color="#299900"/><stop offset=".7" stop-color="#259900"/><stop offset="1" stop-color="#219900"/></linearGradient><linearGradient id="o159" gradientUnits="userSpaceOnUse" x1="1184" y1="120.5" x2="1174.9" y2="105.2"><stop offset="0" stop-color="#339900"/><stop offset=".3" stop-color="#2e9900"/><stop offset=".7" stop-color="#2a9900"/><stop offset="1" stop-color="#269900"/></linearGradient><linearGradient id="o160" gradientUnits="userSpaceOnUse" x1="1186.7" y1="120.8" x2="1178.2" y2="105.6"><stop offset="0" stop-color="#389900"/><stop offset=".3" stop-color="#339900"/><stop offset=".7" stop-color="#2f9900"/><stop offset="1" stop-color="#2c9900"/></linearGradient><linearGradient id="o161" gradientUnits="userSpaceOnUse" x1="1189.4" y1="121" x2="1181.4" y2="105.9"><stop offset="0" stop-color="#3c9900"/><stop offset=".3" stop-color="#389900"/><stop offset=".7" stop-color="#349900"/><stop offset="1" stop-color="#319900"/></linearGradient><linearGradient id="o162" gradientUnits="userSpaceOnUse" x1="1191.9" y1="121.3" x2="1184.5" y2="106.3"><stop offset="0" stop-color="#419900"/><stop offset=".3" stop-color="#3d9900"/><stop offset=".7" stop-color="#399900"/><stop offset="1" stop-color="#369900"/></linearGradient><linearGradient id="o163" gradientUnits="userSpaceOnUse" x1="1194.4" y1="121.5" x2="1187.5" y2="106.6"><stop offset="0" stop-color="#459900"/><stop offset=".3" stop-color="#419900"/><stop offset=".7" stop-color="#3e9900"/><stop offset="1" stop-color="#3b9900"/></linearGradient><linearGradient id="o164" gradientUnits="userSpaceOnUse" x1="1196.8" y1="121.7" x2="1190.4" y2="106.9"><stop offset="0" stop-color="#499900"/><stop offset=".3" stop-color="#469900"/><stop offset=".7" stop-color="#429900"/><stop offset="1" stop-color="#3f9900"/></linearGradient><linearGradient id="o165" gradientUnits="userSpaceOnUse" x1="1199.1" y1="121.9" x2="1193.2" y2="107.2"><stop offset="0" stop-color="#4e9900"/><stop offset=".3" stop-color="#4a9900"/><stop offset=".7" stop-color="#479900"/><stop offset="1" stop-color="#449900"/></linearGradient><linearGradient id="o166" gradientUnits="userSpaceOnUse" x1="1201.4" y1="122.1" x2="1196" y2="107.5"><stop offset="0" stop-color="#529900"/><stop offset=".3" stop-color="#4f9900"/><stop offset=".7" stop-color="#4c9900"/><stop offset="1" stop-color="#499900"/></linearGradient><linearGradient id="o167" gradientUnits="userSpaceOnUse" x1="1203.6" y1="122.4" x2="1198.7" y2="107.8"><stop offset="0" stop-color="#569900"/><stop offset=".3" stop-color="#539900"/><stop offset=".7" stop-color="#509900"/><stop offset="1" stop-color="#4e9900"/></linearGradient><linearGradient id="o168" gradientUnits="userSpaceOnUse" x1="1205.7" y1="122.6" x2="1201.3" y2="108.1"><stop offset="0" stop-color="#5a9900"/><stop offset=".3" stop-color="#579900"/><stop offset=".7" stop-color="#559900"/><stop offset="1" stop-color="#529900"/></linearGradient><linearGradient id="o169" gradientUnits="userSpaceOnUse" x1="1207.9" y1="122.8" x2="1203.8" y2="108.4"><stop offset="0" stop-color="#5e9900"/><stop offset=".3" stop-color="#5c9900"/><stop offset=".7" stop-color="#599900"/><stop offset="1" stop-color="#579900"/></linearGradient><linearGradient id="o170" gradientUnits="userSpaceOnUse" x1="1209.9" y1="122.9" x2="1206.3" y2="108.7"><stop offset="0" stop-color="#639900"/><stop offset=".3" stop-color="#609900"/><stop offset=".7" stop-color="#5e9900"/><stop offset="1" stop-color="#5c9900"/></linearGradient><linearGradient id="o171" gradientUnits="userSpaceOnUse" x1="1212" y1="123.1" x2="1208.8" y2="109"><stop offset="0" stop-color="#679900"/><stop offset=".3" stop-color="#649900"/><stop offset=".7" stop-color="#629900"/><stop offset="1" stop-color="#609900"/></linearGradient><linearGradient id="o172" gradientUnits="userSpaceOnUse" x1="1214" y1="123.3" x2="1211.2" y2="109.2"><stop offset="0" stop-color="#6b9900"/><stop offset=".3" stop-color="#699900"/><stop offset=".7" stop-color="#679900"/><stop offset="1" stop-color="#659900"/></linearGradient><linearGradient id="o173" gradientUnits="userSpaceOnUse" x1="1215.9" y1="123.5" x2="1213.5" y2="109.5"><stop offset="0" stop-color="#6f9900"/><stop offset=".3" stop-color="#6d9900"/><stop offset=".7" stop-color="#6b9900"/><stop offset="1" stop-color="#699900"/></linearGradient><linearGradient id="o174" gradientUnits="userSpaceOnUse" x1="1217.9" y1="123.7" x2="1215.8" y2="109.8"><stop offset="0" stop-color="#739900"/><stop offset=".3" stop-color="#719900"/><stop offset=".7" stop-color="#6f9900"/><stop offset="1" stop-color="#6e9900"/></linearGradient><linearGradient id="o175" gradientUnits="userSpaceOnUse" x1="1219.8" y1="123.9" x2="1218.1" y2="110"><stop offset="0" stop-color="#779900"/><stop offset=".3" stop-color="#759900"/><stop offset=".7" stop-color="#749900"/><stop offset="1" stop-color="#739900"/></linearGradient><linearGradient id="o176" gradientUnits="userSpaceOnUse" x1="1221.7" y1="124" x2="1220.4" y2="110.3"><stop offset="0" stop-color="#7b9900"/><stop offset=".3" stop-color="#7a9900"/><stop offset=".7" stop-color="#789900"/><stop offset="1" stop-color="#779900"/></linearGradient><linearGradient id="o177" gradientUnits="userSpaceOnUse" x1="1223.5" y1="124.2" x2="1222.6" y2="110.5"><stop offset="0" stop-color="#7f9900"/><stop offset=".3" stop-color="#7e9900"/><stop offset=".7" stop-color="#7d9900"/><stop offset="1" stop-color="#7c9900"/></linearGradient><linearGradient id="o178" gradientUnits="userSpaceOnUse" x1="1225.4" y1="124.4" x2="1224.9" y2="110.8"><stop offset="0" stop-color="#839900"/><stop offset=".3" stop-color="#829900"/><stop offset=".7" stop-color="#819900"/><stop offset="1" stop-color="#819900"/></linearGradient><linearGradient id="o179" gradientUnits="userSpaceOnUse" x1="1227.2" y1="124.6" x2="1227.1" y2="111"><stop offset="0" stop-color="#889900"/><stop offset=".3" stop-color="#879900"/><stop offset=".7" stop-color="#869900"/><stop offset="1" stop-color="#859900"/></linearGradient><linearGradient id="o180" gradientUnits="userSpaceOnUse" x1="1229.1" y1="124.7" x2="1229.3" y2="111.3"><stop offset="0" stop-color="#8c9900"/><stop offset=".3" stop-color="#8b9900"/><stop offset=".7" stop-color="#8b9900"/><stop offset="1" stop-color="#8a9900"/></linearGradient><linearGradient id="o181" gradientUnits="userSpaceOnUse" x1="1230.9" y1="124.9" x2="1231.4" y2="111.5"><stop offset="0" stop-color="#909900"/><stop offset=".3" stop-color="#909900"/><stop offset=".7" stop-color="#8f9900"/><stop offset="1" stop-color="#8f9900"/></linearGradient><linearGradient id="o182" gradientUnits="userSpaceOnUse" x1="1232.7" y1="125.1" x2="1233.6" y2="111.8"><stop offset="0" stop-color="#949900"/><stop offset=".3" stop-color="#949900"/><stop offset=".7" stop-color="#949900"/><stop offset="1" stop-color="#949900"/></linearGradient><linearGradient id="o183" gradientUnits="userSpaceOnUse" x1="1234.5" y1="125.3" x2="1235.8" y2="112"><stop offset="0" stop-color="#999900"/><stop offset=".3" stop-color="#999900"/><stop offset=".7" stop-color="#999900"/><stop offset="1" stop-color="#999900"/></linearGradient><linearGradient id="o184" gradientUnits="userSpaceOnUse" x1="1236.4" y1="125.4" x2="1237.9" y2="112.3"><stop offset="0" stop-color="#999500"/><stop offset=".3" stop-color="#999500"/><stop offset=".7" stop-color="#999500"/><stop offset="1" stop-color="#999500"/></linearGradient><linearGradient id="o185" gradientUnits="userSpaceOnUse" x1="1238.2" y1="125.6" x2="1240.1" y2="112.5"><stop offset="0" stop-color="#999100"/><stop offset=".3" stop-color="#999100"/><stop offset=".7" stop-color="#999000"/><stop offset="1" stop-color="#999000"/></linearGradient><linearGradient id="o186" gradientUnits="userSpaceOnUse" x1="1240" y1="125.8" x2="1242.2" y2="112.8"><stop offset="0" stop-color="#998d00"/><stop offset=".3" stop-color="#998c00"/><stop offset=".7" stop-color="#998c00"/><stop offset="1" stop-color="#998b00"/></linearGradient><linearGradient id="o187" gradientUnits="userSpaceOnUse" x1="1241.8" y1="125.9" x2="1244.4" y2="113"><stop offset="0" stop-color="#998900"/><stop offset=".3" stop-color="#998800"/><stop offset=".7" stop-color="#998800"/><stop offset="1" stop-color="#998700"/></linearGradient><linearGradient id="o188" gradientUnits="userSpaceOnUse" x1="1243.7" y1="126.1" x2="1246.6" y2="113.3"><stop offset="0" stop-color="#998500"/><stop offset=".3" stop-color="#998500"/><stop offset=".7" stop-color="#998400"/><stop offset="1" stop-color="#998300"/></linearGradient><linearGradient id="o189" gradientUnits="userSpaceOnUse" x1="1245.5" y1="126.3" x2="1248.8" y2="113.5"><stop offset="0" stop-color="#998200"/><stop offset=".3" stop-color="#998100"/><stop offset=".7" stop-color="#998000"/><stop offset="1" stop-color="#997f00"/></linearGradient><linearGradient id="o190" gradientUnits="userSpaceOnUse" x1="1247.4" y1="126.5" x2="1251" y2="113.8"><stop offset="0" stop-color="#997e00"/><stop offset=".3" stop-color="#997d00"/><stop offset=".7" stop-color="#997c00"/><stop offset="1" stop-color="#997b00"/></linearGradient><linearGradient id="o191" gradientUnits="userSpaceOnUse" x1="1249.3" y1="126.6" x2="1253.2" y2="114"><stop offset="0" stop-color="#997b00"/><stop offset=".3" stop-color="#997a00"/><stop offset=".7" stop-color="#997900"/><stop offset="1" stop-color="#997800"/></linearGradient><linearGradient id="o192" gradientUnits="userSpaceOnUse" x1="1251.2" y1="126.8" x2="1255.5" y2="114.3"><stop offset="0" stop-color="#997800"/><stop offset=".3" stop-color="#997700"/><stop offset=".7" stop-color="#997500"/><stop offset="1" stop-color="#997400"/></linearGradient><linearGradient id="o193" gradientUnits="userSpaceOnUse" x1="1253.1" y1="127" x2="1257.7" y2="114.6"><stop offset="0" stop-color="#997500"/><stop offset=".3" stop-color="#997300"/><stop offset=".7" stop-color="#997200"/><stop offset="1" stop-color="#997100"/></linearGradient><linearGradient id="o194" gradientUnits="userSpaceOnUse" x1="1255.1" y1="127.2" x2="1260" y2="114.8"><stop offset="0" stop-color="#997200"/><stop offset=".3" stop-color="#997000"/><stop offset=".7" stop-color="#996f00"/><stop offset="1" stop-color="#996d00"/></linearGradient><linearGradient id="o195" gradientUnits="userSpaceOnUse" x1="1257.1" y1="127.4" x2="1262.4" y2="115.1"><stop offset="0" stop-color="#996f00"/><stop offset=".3" stop-color="#996d00"/><stop offset=".7" stop-color="#996b00"/><stop offset="1" stop-color="#996a00"/></linearGradient><linearGradient id="o196" gradientUnits="userSpaceOnUse" x1="1259.1" y1="127.6" x2="1264.7" y2="115.4"><stop offset="0" stop-color="#996c00"/><stop offset=".3" stop-color="#996a00"/><stop offset=".7" stop-color="#996800"/><stop offset="1" stop-color="#996700"/></linearGradient><linearGradient id="o197" gradientUnits="userSpaceOnUse" x1="1261.2" y1="127.8" x2="1267.2" y2="115.6"><stop offset="0" stop-color="#996900"/><stop offset=".3" stop-color="#996700"/><stop offset=".7" stop-color="#996500"/><stop offset="1" stop-color="#996400"/></linearGradient><linearGradient id="o198" gradientUnits="userSpaceOnUse" x1="1263.3" y1="127.9" x2="1269.6" y2="115.9"><stop offset="0" stop-color="#996600"/><stop offset=".3" stop-color="#996400"/><stop offset=".7" stop-color="#996200"/><stop offset="1" stop-color="#996100"/></linearGradient><linearGradient id="o199" gradientUnits="userSpaceOnUse" x1="1265.4" y1="128.2" x2="1272.1" y2="116.2"><stop offset="0" stop-color="#996300"/><stop offset=".3" stop-color="#996100"/><stop offset=".7" stop-color="#995f00"/><stop offset="1" stop-color="#995e00"/></linearGradient><linearGradient id="o200" gradientUnits="userSpaceOnUse" x1="1267.6" y1="128.4" x2="1274.7" y2="116.5"><stop offset="0" stop-color="#996000"/><stop offset=".3" stop-color="#995e00"/><stop offset=".7" stop-color="#995c00"/><stop offset="1" stop-color="#995b00"/></linearGradient><linearGradient id="o201" gradientUnits="userSpaceOnUse" x1="1269.9" y1="128.6" x2="1277.3" y2="116.8"><stop offset="0" stop-color="#995d00"/><stop offset=".3" stop-color="#995b00"/><stop offset=".7" stop-color="#995a00"/><stop offset="1" stop-color="#995800"/></linearGradient><linearGradient id="o202" gradientUnits="userSpaceOnUse" x1="1272.2" y1="128.8" x2="1280" y2="117.1"><stop offset="0" stop-color="#995b00"/><stop offset=".3" stop-color="#995900"/><stop offset=".7" stop-color="#995700"/><stop offset="1" stop-color="#995500"/></linearGradient><linearGradient id="o203" gradientUnits="userSpaceOnUse" x1="1274.6" y1="129" x2="1282.8" y2="117.5"><stop offset="0" stop-color="#995800"/><stop offset=".3" stop-color="#995600"/><stop offset=".7" stop-color="#995400"/><stop offset="1" stop-color="#995300"/></linearGradient><linearGradient id="o204" gradientUnits="userSpaceOnUse" x1="1277.1" y1="129.2" x2="1285.6" y2="117.8"><stop offset="0" stop-color="#995500"/><stop offset=".3" stop-color="#995300"/><stop offset=".7" stop-color="#995100"/><stop offset="1" stop-color="#995000"/></linearGradient><linearGradient id="o205" gradientUnits="userSpaceOnUse" x1="1279.6" y1="129.5" x2="1288.6" y2="118.1"><stop offset="0" stop-color="#995300"/><stop offset=".3" stop-color="#995100"/><stop offset=".7" stop-color="#994f00"/><stop offset="1" stop-color="#994d00"/></linearGradient><linearGradient id="o206" gradientUnits="userSpaceOnUse" x1="1282.2" y1="129.7" x2="1291.6" y2="118.5"><stop offset="0" stop-color="#995000"/><stop offset=".3" stop-color="#994e00"/><stop offset=".7" stop-color="#994c00"/><stop offset="1" stop-color="#994a00"/></linearGradient><linearGradient id="o207" gradientUnits="userSpaceOnUse" x1="1284.9" y1="130" x2="1294.7" y2="118.8"><stop offset="0" stop-color="#994d00"/><stop offset=".3" stop-color="#994b00"/><stop offset=".7" stop-color="#994900"/><stop offset="1" stop-color="#994800"/></linearGradient><linearGradient id="o208" gradientUnits="userSpaceOnUse" x1="1287.8" y1="130.2" x2="1298" y2="119.2"><stop offset="0" stop-color="#994b00"/><stop offset=".3" stop-color="#994900"/><stop offset=".7" stop-color="#994700"/><stop offset="1" stop-color="#994500"/></linearGradient><linearGradient id="o209" gradientUnits="userSpaceOnUse" x1="1290.7" y1="130.5" x2="1301.3" y2="119.6"><stop offset="0" stop-color="#994800"/><stop offset=".3" stop-color="#994600"/><stop offset=".7" stop-color="#994400"/><stop offset="1" stop-color="#994300"/></linearGradient><linearGradient id="o210" gradientUnits="userSpaceOnUse" x1="1293.8" y1="130.8" x2="1304.9" y2="120"><stop offset="0" stop-color="#994600"/><stop offset=".3" stop-color="#994400"/><stop offset=".7" stop-color="#994200"/><stop offset="1" stop-color="#994000"/></linearGradient><linearGradient id="o211" gradientUnits="userSpaceOnUse" x1="1297" y1="131.1" x2="1308.5" y2="120.4"><stop offset="0" stop-color="#994300"/><stop offset=".3" stop-color="#994100"/><stop offset=".7" stop-color="#993f00"/><stop offset="1" stop-color="#993d00"/></linearGradient><linearGradient id="o212" gradientUnits="userSpaceOnUse" x1="1300.3" y1="131.4" x2="1312.4" y2="120.9"><stop offset="0" stop-color="#994000"/><stop offset=".3" stop-color="#993e00"/><stop offset=".7" stop-color="#993c00"/><stop offset="1" stop-color="#993b00"/></linearGradient><linearGradient id="o213" gradientUnits="userSpaceOnUse" x1="1303.9" y1="131.8" x2="1316.4" y2="121.3"><stop offset="0" stop-color="#993e00"/><stop offset=".3" stop-color="#993c00"/><stop offset=".7" stop-color="#993a00"/><stop offset="1" stop-color="#993800"/></linearGradient><linearGradient id="o214" gradientUnits="userSpaceOnUse" x1="1307.6" y1="132.1" x2="1320.6" y2="121.8"><stop offset="0" stop-color="#993b00"/><stop offset=".3" stop-color="#993900"/><stop offset=".7" stop-color="#993700"/><stop offset="1" stop-color="#993600"/></linearGradient><linearGradient id="o215" gradientUnits="userSpaceOnUse" x1="1311.5" y1="132.5" x2="1325.1" y2="122.3"><stop offset="0" stop-color="#993900"/><stop offset=".3" stop-color="#993600"/><stop offset=".7" stop-color="#993500"/><stop offset="1" stop-color="#993300"/></linearGradient><linearGradient id="o216" gradientUnits="userSpaceOnUse" x1="1315.7" y1="132.9" x2="1329.8" y2="122.9"><stop offset="0" stop-color="#993600"/><stop offset=".3" stop-color="#993400"/><stop offset=".7" stop-color="#993200"/><stop offset="1" stop-color="#993000"/></linearGradient><linearGradient id="o217" gradientUnits="userSpaceOnUse" x1="1320.1" y1="133.3" x2="1334.8" y2="123.4"><stop offset="0" stop-color="#993300"/><stop offset=".3" stop-color="#993100"/><stop offset=".7" stop-color="#992f00"/><stop offset="1" stop-color="#992e00"/></linearGradient><linearGradient id="o218" gradientUnits="userSpaceOnUse" x1="1324.8" y1="133.7" x2="1340.2" y2="124.1"><stop offset="0" stop-color="#993000"/><stop offset=".3" stop-color="#992e00"/><stop offset=".7" stop-color="#992d00"/><stop offset="1" stop-color="#992b00"/></linearGradient><linearGradient id="o219" gradientUnits="userSpaceOnUse" x1="1329.9" y1="134.2" x2="1345.8" y2="124.7"><stop offset="0" stop-color="#992e00"/><stop offset=".3" stop-color="#992c00"/><stop offset=".7" stop-color="#992a00"/><stop offset="1" stop-color="#992800"/></linearGradient><linearGradient id="o220" gradientUnits="userSpaceOnUse" x1="1335.3" y1="134.7" x2="1351.9" y2="125.4"><stop offset="0" stop-color="#992b00"/><stop offset=".3" stop-color="#992900"/><stop offset=".7" stop-color="#992700"/><stop offset="1" stop-color="#992600"/></linearGradient><linearGradient id="o221" gradientUnits="userSpaceOnUse" x1="1341.2" y1="135.3" x2="1358.5" y2="126.2"><stop offset="0" stop-color="#992800"/><stop offset=".3" stop-color="#992600"/><stop offset=".7" stop-color="#992400"/><stop offset="1" stop-color="#992300"/></linearGradient><linearGradient id="o222" gradientUnits="userSpaceOnUse" x1="1347.5" y1="135.8" x2="1365.5" y2="127"><stop offset="0" stop-color="#992500"/><stop offset=".3" stop-color="#992300"/><stop offset=".7" stop-color="#992200"/><stop offset="1" stop-color="#992000"/></linearGradient><linearGradient id="o223" gradientUnits="userSpaceOnUse" x1="1354.5" y1="136.5" x2="1373.2" y2="127.9"><stop offset="0" stop-color="#992200"/><stop offset=".3" stop-color="#992000"/><stop offset=".7" stop-color="#991f00"/><stop offset="1" stop-color="#991d00"/></linearGradient><linearGradient id="o224" gradientUnits="userSpaceOnUse" x1="1362" y1="137.2" x2="1381.5" y2="128.8"><stop offset="0" stop-color="#991f00"/><stop offset=".3" stop-color="#991e00"/><stop offset=".7" stop-color="#991c00"/><stop offset="1" stop-color="#991a00"/></linearGradient><linearGradient id="o225" gradientUnits="userSpaceOnUse" x1="1370.4" y1="138" x2="1390.7" y2="129.9"><stop offset="0" stop-color="#991c00"/><stop offset=".3" stop-color="#991b00"/><stop offset=".7" stop-color="#991900"/><stop offset="1" stop-color="#991800"/></linearGradient><linearGradient id="o226" gradientUnits="userSpaceOnUse" x1="1379.6" y1="138.9" x2="1400.8" y2="131.1"><stop offset="0" stop-color="#991900"/><stop offset=".3" stop-color="#991800"/><stop offset=".7" stop-color="#991600"/><stop offset="1" stop-color="#991500"/></linearGradient><linearGradient id="o227" gradientUnits="userSpaceOnUse" x1="1389.9" y1="139.8" x2="1411.9" y2="132.3"><stop offset="0" stop-color="#991600"/><stop offset=".3" stop-color="#991400"/><stop offset=".7" stop-color="#991300"/><stop offset="1" stop-color="#991200"/></linearGradient><linearGradient id="o228" gradientUnits="userSpaceOnUse" x1="1401.5" y1="140.9" x2="1424.4" y2="133.8"><stop offset="0" stop-color="#991300"/><stop offset=".3" stop-color="#991100"/><stop offset=".7" stop-color="#991000"/><stop offset="1" stop-color="#990f00"/></linearGradient><linearGradient id="o229" gradientUnits="userSpaceOnUse" x1="1414.6" y1="142.1" x2="1438.5" y2="135.4"><stop offset="0" stop-color="#990f00"/><stop offset=".3" stop-color="#990e00"/><stop offset=".7" stop-color="#990d00"/><stop offset="1" stop-color="#990b00"/></linearGradient><linearGradient id="o230" gradientUnits="userSpaceOnUse" x1="1429.7" y1="143.6" x2="1454.5" y2="137.3"><stop offset="0" stop-color="#990c00"/><stop offset=".3" stop-color="#990b00"/><stop offset=".7" stop-color="#990900"/><stop offset="1" stop-color="#990800"/></linearGradient><linearGradient id="o231" gradientUnits="userSpaceOnUse" x1="1447.1" y1="145.2" x2="1472.8" y2="139.4"><stop offset="0" stop-color="#990800"/><stop offset=".3" stop-color="#990700"/><stop offset=".7" stop-color="#990600"/><stop offset="1" stop-color="#990500"/></linearGradient><linearGradient id="o232" gradientUnits="userSpaceOnUse" x1="1467.6" y1="147.1" x2="1494.2" y2="141.8"><stop offset="0" stop-color="#990500"/><stop offset=".3" stop-color="#990400"/><stop offset=".7" stop-color="#990200"/><stop offset="1" stop-color="#990200"/></linearGradient><linearGradient id="o233" gradientUnits="userSpaceOnUse" x1="1492" y1="149.4" x2="1519.3" y2="144.7"><stop offset="0" stop-color="#990100"/><stop offset=".3" stop-color="#990000"/><stop offset=".7" stop-color="#990000"/><stop offset="1" stop-color="#990000"/></linearGradient><linearGradient id="o234" gradientUnits="userSpaceOnUse" x1="1490.8" y1="156.6" x2="1549.3" y2="148.2"><stop offset="0" stop-color="#990003"/><stop offset=".3" stop-color="#990001"/><stop offset=".7" stop-color="#990000"/><stop offset="1" stop-color="#990000"/></linearGradient><linearGradient id="o235" gradientUnits="userSpaceOnUse" x1="1483" y1="164.6" x2="1585.9" y2="152.4"><stop offset="0" stop-color="#990007"/><stop offset=".3" stop-color="#990003"/><stop offset=".7" stop-color="#990001"/><stop offset="1" stop-color="#990000"/></linearGradient><linearGradient id="o236" gradientUnits="userSpaceOnUse" x1="1475.8" y1="172" x2="1631.6" y2="157.7"><stop offset="0" stop-color="#99000b"/><stop offset=".3" stop-color="#990006"/><stop offset=".7" stop-color="#990002"/><stop offset="1" stop-color="#990000"/></linearGradient><linearGradient id="o237" gradientUnits="userSpaceOnUse" x1="1469" y1="178.9" x2="1679.5" y2="165.1"><stop offset="0" stop-color="#99000f"/><stop offset=".3" stop-color="#990008"/><stop offset=".7" stop-color="#990003"/><stop offset="1" stop-color="#990000"/></linearGradient><linearGradient id="o238" gradientUnits="userSpaceOnUse" x1="1462.5" y1="185.5" x2="1667.5" y2="177.5"><stop offset="0" stop-color="#990012"/><stop offset=".3" stop-color="#99000b"/><stop offset=".7" stop-color="#990007"/><stop offset="1" stop-color="#990003"/></linearGradient><linearGradient id="o239" gradientUnits="userSpaceOnUse" x1="1456.5" y1="191.7" x2="1656.2" y2="189.1"><stop offset="0" stop-color="#990016"/><stop offset=".3" stop-color="#99000f"/><stop offset=".7" stop-color="#99000a"/><stop offset="1" stop-color="#990007"/></linearGradient><linearGradient id="i0" gradientUnits="userSpaceOnUse" x1="1228.2" y1="194.7" x2="1447.9" y2="200.5"><stop offset="0" stop-color="#fffafb"/><stop offset="" stop-color="#ffd8df"/><stop offset=".1" stop-color="#ff96a9"/><stop offset=".3" stop-color="#ff5d7a"/><stop offset=".5" stop-color="#ff3257"/><stop offset=".7" stop-color="#ff153f"/><stop offset="1" stop-color="#ff002e"/></linearGradient><linearGradient id="i1" gradientUnits="userSpaceOnUse" x1="1228.2" y1="194.7" x2="1437.4" y2="211.2"><stop offset="0" stop-color="#fffafb"/><stop offset="" stop-color="#ffdae2"/><stop offset=".1" stop-color="#ff99b0"/><stop offset=".3" stop-color="#ff5f84"/><stop offset=".5" stop-color="#ff3463"/><stop offset=".7" stop-color="#ff164b"/><stop offset="1" stop-color="#ff003a"/></linearGradient><linearGradient id="i2" gradientUnits="userSpaceOnUse" x1="1228.2" y1="194.7" x2="1427.8" y2="221"><stop offset="0" stop-color="#fffafc"/><stop offset="" stop-color="#ffdbe5"/><stop offset=".1" stop-color="#ff9bb7"/><stop offset=".3" stop-color="#ff628d"/><stop offset=".5" stop-color="#ff366e"/><stop offset=".7" stop-color="#ff1757"/><stop offset="1" stop-color="#ff0047"/></linearGradient><linearGradient id="i3" gradientUnits="userSpaceOnUse" x1="1228.2" y1="194.7" x2="1419" y2="230.1"><stop offset="0" stop-color="#fffafc"/><stop offset="" stop-color="#ffdce8"/><stop offset=".1" stop-color="#ff9ebd"/><stop offset=".3" stop-color="#ff6496"/><stop offset=".5" stop-color="#ff3879"/><stop offset=".7" stop-color="#ff1763"/><stop offset="1" stop-color="#ff0053"/></linearGradient><linearGradient id="i4" gradientUnits="userSpaceOnUse" x1="1228.2" y1="194.7" x2="1410.7" y2="238.5"><stop offset="0" stop-color="#fffafc"/><stop offset="" stop-color="#ffddea"/><stop offset=".1" stop-color="#ffa0c4"/><stop offset=".3" stop-color="#ff67a0"/><stop offset=".5" stop-color="#ff3983"/><stop offset=".7" stop-color="#ff186e"/><stop offset="1" stop-color="#ff005f"/></linearGradient><linearGradient id="i5" gradientUnits="userSpaceOnUse" x1="1228.2" y1="194.7" x2="1402.9" y2="246.5"><stop offset="0" stop-color="#fffafc"/><stop offset="" stop-color="#ffdeec"/><stop offset=".1" stop-color="#ffa2ca"/><stop offset=".3" stop-color="#ff69a8"/><stop offset=".5" stop-color="#ff3b8e"/><stop offset=".7" stop-color="#ff197a"/><stop offset="1" stop-color="#ff006c"/></linearGradient><linearGradient id="i6" gradientUnits="userSpaceOnUse" x1="1228.2" y1="194.7" x2="1395.6" y2="254"><stop offset="0" stop-color="#fffafd"/><stop offset="" stop-color="#ffe0ef"/><stop offset=".1" stop-color="#ffa5cf"/><stop offset=".3" stop-color="#ff6bb1"/><stop offset=".5" stop-color="#ff3d99"/><stop offset=".7" stop-color="#ff1a86"/><stop offset="1" stop-color="#ff0079"/></linearGradient><linearGradient id="i7" gradientUnits="userSpaceOnUse" x1="1228.2" y1="194.7" x2="1388.6" y2="261.2"><stop offset="0" stop-color="#fffafd"/><stop offset="" stop-color="#ffe1f1"/><stop offset=".1" stop-color="#ffa7d5"/><stop offset=".3" stop-color="#ff6eba"/><stop offset=".5" stop-color="#ff3fa4"/><stop offset=".7" stop-color="#ff1b93"/><stop offset="1" stop-color="#ff0086"/></linearGradient><linearGradient id="i8" gradientUnits="userSpaceOnUse" x1="1228.2" y1="194.7" x2="1381.8" y2="268"><stop offset="0" stop-color="#fffbfd"/><stop offset="" stop-color="#ffe2f3"/><stop offset=".1" stop-color="#ffa9db"/><stop offset=".3" stop-color="#ff70c3"/><stop offset=".5" stop-color="#ff40af"/><stop offset=".7" stop-color="#ff1c9f"/><stop offset="1" stop-color="#ff0094"/></linearGradient><linearGradient id="i9" gradientUnits="userSpaceOnUse" x1="1228.2" y1="194.7" x2="1375.4" y2="274.7"><stop offset="0" stop-color="#fffbfe"/><stop offset="" stop-color="#ffe2f5"/><stop offset=".1" stop-color="#ffabe0"/><stop offset=".3" stop-color="#ff72cc"/><stop offset=".5" stop-color="#ff42ba"/><stop offset=".7" stop-color="#ff1dac"/><stop offset="1" stop-color="#ff00a2"/></linearGradient><linearGradient id="i10" gradientUnits="userSpaceOnUse" x1="1228.2" y1="194.7" x2="1369.1" y2="281.1"><stop offset="0" stop-color="#fffbfe"/><stop offset="" stop-color="#ffe3f7"/><stop offset=".1" stop-color="#ffade6"/><stop offset=".3" stop-color="#ff75d5"/><stop offset=".5" stop-color="#ff44c6"/><stop offset=".7" stop-color="#ff1eba"/><stop offset="1" stop-color="#ff00b1"/></linearGradient><linearGradient id="i11" gradientUnits="userSpaceOnUse" x1="1228.2" y1="194.7" x2="1362.9" y2="287.4"><stop offset="0" stop-color="#fffbfe"/><stop offset="" stop-color="#ffe4f9"/><stop offset=".1" stop-color="#ffafec"/><stop offset=".3" stop-color="#ff77de"/><stop offset=".5" stop-color="#ff46d2"/><stop offset=".7" stop-color="#ff1fc8"/><stop offset="1" stop-color="#ff00c0"/></linearGradient><linearGradient id="i12" gradientUnits="userSpaceOnUse" x1="1228.2" y1="194.7" x2="1356.9" y2="293.5"><stop offset="0" stop-color="#fffbfe"/><stop offset="" stop-color="#ffe5fb"/><stop offset=".1" stop-color="#ffb1f1"/><stop offset=".3" stop-color="#ff79e7"/><stop offset=".5" stop-color="#ff48de"/><stop offset=".7" stop-color="#ff20d7"/><stop offset="1" stop-color="#ff00d1"/></linearGradient><linearGradient id="i13" gradientUnits="userSpaceOnUse" x1="1228.2" y1="194.7" x2="1351" y2="299.6"><stop offset="0" stop-color="#fffbff"/><stop offset="" stop-color="#ffe6fc"/><stop offset=".1" stop-color="#ffb3f7"/><stop offset=".3" stop-color="#ff7cf0"/><stop offset=".5" stop-color="#ff4aeb"/><stop offset=".7" stop-color="#ff21e6"/><stop offset="1" stop-color="#ff00e3"/></linearGradient><linearGradient id="i14" gradientUnits="userSpaceOnUse" x1="1228.2" y1="194.7" x2="1345.1" y2="305.7"><stop offset="0" stop-color="#fffbff"/><stop offset="" stop-color="#ffe7fe"/><stop offset=".1" stop-color="#ffb6fc"/><stop offset=".3" stop-color="#ff7ffa"/><stop offset=".5" stop-color="#ff4cf8"/><stop offset=".7" stop-color="#ff22f7"/><stop offset="1" stop-color="#ff00f6"/></linearGradient><linearGradient id="i15" gradientUnits="userSpaceOnUse" x1="1228.2" y1="194.7" x2="1339.2" y2="311.7"><stop offset="0" stop-color="#fffbff"/><stop offset="" stop-color="#fee7ff"/><stop offset=".1" stop-color="#fcb5ff"/><stop offset=".3" stop-color="#f97fff"/><stop offset=".5" stop-color="#f74cff"/><stop offset=".7" stop-color="#f622ff"/><stop offset="1" stop-color="#f400ff"/></linearGradient><linearGradient id="i16" gradientUnits="userSpaceOnUse" x1="1228.2" y1="194.7" x2="1333.2" y2="317.7"><stop offset="0" stop-color="#fefbff"/><stop offset="" stop-color="#fce6ff"/><stop offset=".1" stop-color="#f6b4ff"/><stop offset=".3" stop-color="#f07cff"/><stop offset=".5" stop-color="#ea4aff"/><stop offset=".7" stop-color="#e521ff"/><stop offset="1" stop-color="#e100ff"/></linearGradient><linearGradient id="i17" gradientUnits="userSpaceOnUse" x1="1228.2" y1="194.7" x2="1327.2" y2="323.9"><stop offset="0" stop-color="#fefbff"/><stop offset="" stop-color="#fae5ff"/><stop offset=".1" stop-color="#f0b2ff"/><stop offset=".3" stop-color="#e67aff"/><stop offset=".5" stop-color="#dd48ff"/><stop offset=".7" stop-color="#d520ff"/><stop offset="1" stop-color="#cf00ff"/></linearGradient><linearGradient id="i18" gradientUnits="userSpaceOnUse" x1="1228.2" y1="194.7" x2="1321.2" y2="330.1"><stop offset="0" stop-color="#fefbff"/><stop offset="" stop-color="#f8e4ff"/><stop offset=".1" stop-color="#ebb0ff"/><stop offset=".3" stop-color="#dc78ff"/><stop offset=".5" stop-color="#d047ff"/><stop offset=".7" stop-color="#c61fff"/><stop offset="1" stop-color="#be00ff"/></linearGradient><linearGradient id="i19" gradientUnits="userSpaceOnUse" x1="1228.2" y1="194.7" x2="1315" y2="336.4"><stop offset="0" stop-color="#fdfbff"/><stop offset="" stop-color="#f6e4ff"/><stop offset=".1" stop-color="#e5aeff"/><stop offset=".3" stop-color="#d375ff"/><stop offset=".5" stop-color="#c445ff"/><stop offset=".7" stop-color="#b71eff"/><stop offset="1" stop-color="#ae00ff"/></linearGradient><linearGradient id="i20" gradientUnits="userSpaceOnUse" x1="1228.2" y1="194.7" x2="1308.6" y2="342.9"><stop offset="0" stop-color="#fdfaff"/><stop offset="" stop-color="#f4e3ff"/><stop offset=".1" stop-color="#dfacff"/><stop offset=".3" stop-color="#ca73ff"/><stop offset=".5" stop-color="#b843ff"/><stop offset=".7" stop-color="#a91dff"/><stop offset="1" stop-color="#9e00ff"/></linearGradient><linearGradient id="i21" gradientUnits="userSpaceOnUse" x1="1228.2" y1="194.7" x2="1302" y2="349.6"><stop offset="0" stop-color="#fdfaff"/><stop offset="" stop-color="#f2e2ff"/><stop offset=".1" stop-color="#daaaff"/><stop offset=".3" stop-color="#c171ff"/><stop offset=".5" stop-color="#ac41ff"/><stop offset=".7" stop-color="#9c1cff"/><stop offset="1" stop-color="#9000ff"/></linearGradient><linearGradient id="i22" gradientUnits="userSpaceOnUse" x1="1228.2" y1="194.7" x2="1295.2" y2="356.6"><stop offset="0" stop-color="#fcfaff"/><stop offset="" stop-color="#f0e1ff"/><stop offset=".1" stop-color="#d4a8ff"/><stop offset=".3" stop-color="#b86fff"/><stop offset=".5" stop-color="#a040ff"/><stop offset=".7" stop-color="#8e1bff"/><stop offset="1" stop-color="#8100ff"/></linearGradient><linearGradient id="i23" gradientUnits="userSpaceOnUse" x1="1228.2" y1="194.7" x2="1288.1" y2="363.9"><stop offset="0" stop-color="#fcfaff"/><stop offset="" stop-color="#eee0ff"/><stop offset=".1" stop-color="#cea6ff"/><stop offset=".3" stop-color="#ae6dff"/><stop offset=".5" stop-color="#953eff"/><stop offset=".7" stop-color="#811bff"/><stop offset="1" stop-color="#7300ff"/></linearGradient><linearGradient id="i24" gradientUnits="userSpaceOnUse" x1="1228.2" y1="194.7" x2="1280.6" y2="371.6"><stop offset="0" stop-color="#fcfaff"/><stop offset="" stop-color="#ebdfff"/><stop offset=".1" stop-color="#c8a4ff"/><stop offset=".3" stop-color="#a56bff"/><stop offset=".5" stop-color="#893dff"/><stop offset=".7" stop-color="#741aff"/><stop offset="1" stop-color="#6500ff"/></linearGradient><linearGradient id="i25" gradientUnits="userSpaceOnUse" x1="1228.2" y1="194.7" x2="1272.6" y2="379.8"><stop offset="0" stop-color="#fcfaff"/><stop offset="" stop-color="#e9deff"/><stop offset=".1" stop-color="#c1a2ff"/><stop offset=".3" stop-color="#9c68ff"/><stop offset=".5" stop-color="#7e3bff"/><stop offset=".7" stop-color="#6719ff"/><stop offset="1" stop-color="#5700ff"/></linearGradient><linearGradient id="i26" gradientUnits="userSpaceOnUse" x1="1228.2" y1="194.7" x2="1264.1" y2="388.5"><stop offset="0" stop-color="#fbfaff"/><stop offset="" stop-color="#e7ddff"/><stop offset=".1" stop-color="#bba0ff"/><stop offset=".3" stop-color="#9266ff"/><stop offset=".5" stop-color="#7239ff"/><stop offset=".7" stop-color="#5b18ff"/><stop offset="1" stop-color="#4a00ff"/></linearGradient><linearGradient id="i27" gradientUnits="userSpaceOnUse" x1="1228.2" y1="194.7" x2="1254.9" y2="397.8"><stop offset="0" stop-color="#fbfaff"/><stop offset="" stop-color="#e4dcff"/><stop offset=".1" stop-color="#b49dff"/><stop offset=".3" stop-color="#8864ff"/><stop offset=".5" stop-color="#6638ff"/><stop offset=".7" stop-color="#4e17ff"/><stop offset="1" stop-color="#3c00ff"/></linearGradient><linearGradient id="i28" gradientUnits="userSpaceOnUse" x1="1228.2" y1="194.7" x2="1244.9" y2="408"><stop offset="0" stop-color="#fbfaff"/><stop offset="" stop-color="#e1dbff"/><stop offset=".1" stop-color="#ad9bff"/><stop offset=".3" stop-color="#7e61ff"/><stop offset=".5" stop-color="#5a36ff"/><stop offset=".7" stop-color="#4016ff"/><stop offset="1" stop-color="#2e00ff"/></linearGradient><linearGradient id="i29" gradientUnits="userSpaceOnUse" x1="1228.2" y1="194.7" x2="1234" y2="419.2"><stop offset="0" stop-color="#fbfaff"/><stop offset="" stop-color="#ded9ff"/><stop offset=".1" stop-color="#a598ff"/><stop offset=".3" stop-color="#735fff"/><stop offset=".5" stop-color="#4e34ff"/><stop offset=".7" stop-color="#3316ff"/><stop offset="1" stop-color="#2000ff"/></linearGradient><linearGradient id="i30" gradientUnits="userSpaceOnUse" x1="1228.2" y1="194.7" x2="1222" y2="431.5"><stop offset="0" stop-color="#fafaff"/><stop offset="" stop-color="#dad8ff"/><stop offset=".1" stop-color="#9d96ff"/><stop offset=".3" stop-color="#685cff"/><stop offset=".5" stop-color="#4132ff"/><stop offset=".7" stop-color="#2615ff"/><stop offset="1" stop-color="#1200ff"/></linearGradient><linearGradient id="i31" gradientUnits="userSpaceOnUse" x1="1228.2" y1="194.7" x2="1208.4" y2="445.4"><stop offset="0" stop-color="#fafaff"/><stop offset="" stop-color="#d7d6ff"/><stop offset=".1" stop-color="#9493ff"/><stop offset=".3" stop-color="#5c59ff"/><stop offset=".5" stop-color="#3330ff"/><stop offset=".7" stop-color="#1814ff"/><stop offset="1" stop-color="#0400ff"/></linearGradient><linearGradient id="i32" gradientUnits="userSpaceOnUse" x1="1228.2" y1="194.7" x2="1199" y2="416.5"><stop offset="0" stop-color="#fafaff"/><stop offset="" stop-color="#d9dbff"/><stop offset=".1" stop-color="#989cff"/><stop offset=".3" stop-color="#5f65ff"/><stop offset=".5" stop-color="#343cff"/><stop offset=".7" stop-color="#161fff"/><stop offset="1" stop-color="#000aff"/></linearGradient><linearGradient id="i33" gradientUnits="userSpaceOnUse" x1="1228.2" y1="194.7" x2="1193.4" y2="382.1"><stop offset="0" stop-color="#fafaff"/><stop offset="" stop-color="#dde0ff"/><stop offset=".1" stop-color="#9fa8ff"/><stop offset=".3" stop-color="#6674ff"/><stop offset=".5" stop-color="#394bff"/><stop offset=".7" stop-color="#182dff"/><stop offset="1" stop-color="#0018ff"/></linearGradient><linearGradient id="i34" gradientUnits="userSpaceOnUse" x1="1228.2" y1="194.7" x2="1189.3" y2="356.6"><stop offset="0" stop-color="#fafbff"/><stop offset="" stop-color="#e0e4ff"/><stop offset=".1" stop-color="#a5b2ff"/><stop offset=".3" stop-color="#6c81ff"/><stop offset=".5" stop-color="#3e59ff"/><stop offset=".7" stop-color="#1a3aff"/><stop offset="1" stop-color="#0024ff"/></linearGradient><linearGradient id="i35" gradientUnits="userSpaceOnUse" x1="1228.2" y1="194.7" x2="1186.1" y2="336.7"><stop offset="0" stop-color="#fafbff"/><stop offset="" stop-color="#e2e7ff"/><stop offset=".1" stop-color="#aabaff"/><stop offset=".3" stop-color="#728cff"/><stop offset=".5" stop-color="#4265ff"/><stop offset=".7" stop-color="#1c46ff"/><stop offset="1" stop-color="#002fff"/></linearGradient><linearGradient id="i36" gradientUnits="userSpaceOnUse" x1="1228.2" y1="194.7" x2="1183.5" y2="320.8"><stop offset="0" stop-color="#f9fbff"/><stop offset="" stop-color="#e4eaff"/><stop offset=".1" stop-color="#afc1ff"/><stop offset=".3" stop-color="#7696ff"/><stop offset=".5" stop-color="#4670ff"/><stop offset=".7" stop-color="#1e52ff"/><stop offset="1" stop-color="#003aff"/></linearGradient><linearGradient id="i37" gradientUnits="userSpaceOnUse" x1="1228.2" y1="194.7" x2="1181.4" y2="307.6"><stop offset="0" stop-color="#f9fbff"/><stop offset="" stop-color="#e5ecff"/><stop offset=".1" stop-color="#b2c7ff"/><stop offset=".3" stop-color="#7b9eff"/><stop offset=".5" stop-color="#497aff"/><stop offset=".7" stop-color="#205cff"/><stop offset="1" stop-color="#0145ff"/></linearGradient><linearGradient id="i38" gradientUnits="userSpaceOnUse" x1="1228.2" y1="194.7" x2="1179.6" y2="296.5"><stop offset="0" stop-color="#f9fbff"/><stop offset="" stop-color="#e7eeff"/><stop offset=".1" stop-color="#b5ccff"/><stop offset=".3" stop-color="#7ea6ff"/><stop offset=".5" stop-color="#4c83ff"/><stop offset=".7" stop-color="#2266ff"/><stop offset="1" stop-color="#014fff"/></linearGradient><linearGradient id="i39" gradientUnits="userSpaceOnUse" x1="1228.2" y1="194.7" x2="1178.1" y2="287"><stop offset="0" stop-color="#f9fbff"/><stop offset="" stop-color="#e8f0ff"/><stop offset=".1" stop-color="#b8d1ff"/><stop offset=".3" stop-color="#82adff"/><stop offset=".5" stop-color="#4f8cff"/><stop offset=".7" stop-color="#246fff"/><stop offset="1" stop-color="#0158ff"/></linearGradient><linearGradient id="i40" gradientUnits="userSpaceOnUse" x1="1228.2" y1="194.7" x2="1176.7" y2="278.7"><stop offset="0" stop-color="#f9fbff"/><stop offset="" stop-color="#e9f1ff"/><stop offset=".1" stop-color="#bbd5ff"/><stop offset=".3" stop-color="#85b4ff"/><stop offset=".5" stop-color="#5294ff"/><stop offset=".7" stop-color="#2578ff"/><stop offset="1" stop-color="#0162ff"/></linearGradient><linearGradient id="i41" gradientUnits="userSpaceOnUse" x1="1228.2" y1="194.7" x2="1175.5" y2="271.3"><stop offset="0" stop-color="#f9fcff"/><stop offset="" stop-color="#eaf3ff"/><stop offset=".1" stop-color="#bdd9ff"/><stop offset=".3" stop-color="#88baff"/><stop offset=".5" stop-color="#559cff"/><stop offset=".7" stop-color="#2781ff"/><stop offset="1" stop-color="#016bff"/></linearGradient><linearGradient id="i42" gradientUnits="userSpaceOnUse" x1="1228.2" y1="194.7" x2="1174.5" y2="264.7"><stop offset="0" stop-color="#f9fcff"/><stop offset="" stop-color="#ebf4ff"/><stop offset=".1" stop-color="#bfdcff"/><stop offset=".3" stop-color="#8bbfff"/><stop offset=".5" stop-color="#57a3ff"/><stop offset=".7" stop-color="#2889ff"/><stop offset="1" stop-color="#0174ff"/></linearGradient><linearGradient id="i43" gradientUnits="userSpaceOnUse" x1="1228.2" y1="194.7" x2="1173.5" y2="258.7"><stop offset="0" stop-color="#f9fcff"/><stop offset="" stop-color="#ebf5ff"/><stop offset=".1" stop-color="#c1dfff"/><stop offset=".3" stop-color="#8dc5ff"/><stop offset=".5" stop-color="#59aaff"/><stop offset=".7" stop-color="#2a91ff"/><stop offset="1" stop-color="#017cff"/></linearGradient><linearGradient id="i44" gradientUnits="userSpaceOnUse" x1="1228.2" y1="194.7" x2="1172.6" y2="253.3"><stop offset="0" stop-color="#f9fcff"/><stop offset="" stop-color="#ecf6ff"/><stop offset=".1" stop-color="#c3e2ff"/><stop offset=".3" stop-color="#90caff"/><stop offset=".5" stop-color="#5cb1ff"/><stop offset=".7" stop-color="#2b99ff"/><stop offset="1" stop-color="#0185ff"/></linearGradient><linearGradient id="i45" gradientUnits="userSpaceOnUse" x1="1228.2" y1="194.7" x2="1171.8" y2="248.2"><stop offset="0" stop-color="#f9fcff"/><stop offset="" stop-color="#edf7ff"/><stop offset=".1" stop-color="#c5e5ff"/><stop offset=".3" stop-color="#92cfff"/><stop offset=".5" stop-color="#5eb7ff"/><stop offset=".7" stop-color="#2ca1ff"/><stop offset="1" stop-color="#018eff"/></linearGradient><linearGradient id="i46" gradientUnits="userSpaceOnUse" x1="1228.2" y1="194.7" x2="1171" y2="243.5"><stop offset="0" stop-color="#f9fcff"/><stop offset="" stop-color="#edf8ff"/><stop offset=".1" stop-color="#c6e8ff"/><stop offset=".3" stop-color="#95d3ff"/><stop offset=".5" stop-color="#60bdff"/><stop offset=".7" stop-color="#2ea9ff"/><stop offset="1" stop-color="#0196ff"/></linearGradient><linearGradient id="i47" gradientUnits="userSpaceOnUse" x1="1228.2" y1="194.7" x2="1170.3" y2="239.1"><stop offset="0" stop-color="#f9fdff"/><stop offset="" stop-color="#eef9ff"/><stop offset=".1" stop-color="#c8eaff"/><stop offset=".3" stop-color="#97d8ff"/><stop offset=".5" stop-color="#62c4ff"/><stop offset=".7" stop-color="#2fb0ff"/><stop offset="1" stop-color="#019fff"/></linearGradient><linearGradient id="i48" gradientUnits="userSpaceOnUse" x1="1228.2" y1="194.7" x2="1169.6" y2="234.9"><stop offset="0" stop-color="#f9fdff"/><stop offset="" stop-color="#eef9ff"/><stop offset=".1" stop-color="#c9edff"/><stop offset=".3" stop-color="#99dcff"/><stop offset=".5" stop-color="#64caff"/><stop offset=".7" stop-color="#30b8ff"/><stop offset="1" stop-color="#01a8ff"/></linearGradient><linearGradient id="i49" gradientUnits="userSpaceOnUse" x1="1228.2" y1="194.7" x2="1169" y2="231"><stop offset="0" stop-color="#f9fdff"/><stop offset="" stop-color="#effaff"/><stop offset=".1" stop-color="#cbefff"/><stop offset=".3" stop-color="#9be0ff"/><stop offset=".5" stop-color="#66d0ff"/><stop offset=".7" stop-color="#32c0ff"/><stop offset="1" stop-color="#02b1ff"/></linearGradient><linearGradient id="i50" gradientUnits="userSpaceOnUse" x1="1228.2" y1="194.7" x2="1168.4" y2="227.2"><stop offset="0" stop-color="#f9fdff"/><stop offset="" stop-color="#effbff"/><stop offset=".1" stop-color="#ccf1ff"/><stop offset=".3" stop-color="#9de4ff"/><stop offset=".5" stop-color="#69d6ff"/><stop offset=".7" stop-color="#33c8ff"/><stop offset="1" stop-color="#02baff"/></linearGradient><linearGradient id="i51" gradientUnits="userSpaceOnUse" x1="1228.2" y1="194.7" x2="1167.8" y2="223.5"><stop offset="0" stop-color="#f9feff"/><stop offset="" stop-color="#f0fbff"/><stop offset=".1" stop-color="#cdf3ff"/><stop offset=".3" stop-color="#9fe9ff"/><stop offset=".5" stop-color="#6bdcff"/><stop offset=".7" stop-color="#35d0ff"/><stop offset="1" stop-color="#02c4ff"/></linearGradient><linearGradient id="i52" gradientUnits="userSpaceOnUse" x1="1228.2" y1="194.7" x2="1167.2" y2="220"><stop offset="0" stop-color="#f9feff"/><stop offset="" stop-color="#f0fcff"/><stop offset=".1" stop-color="#cff6ff"/><stop offset=".3" stop-color="#a1edff"/><stop offset=".5" stop-color="#6de2ff"/><stop offset=".7" stop-color="#36d8ff"/><stop offset="1" stop-color="#02ceff"/></linearGradient><linearGradient id="i53" gradientUnits="userSpaceOnUse" x1="1228.2" y1="194.7" x2="1166.7" y2="216.5"><stop offset="0" stop-color="#f9feff"/><stop offset="" stop-color="#f1fdff"/><stop offset=".1" stop-color="#d0f8ff"/><stop offset=".3" stop-color="#a3f1ff"/><stop offset=".5" stop-color="#6fe9ff"/><stop offset=".7" stop-color="#38e0ff"/><stop offset="1" stop-color="#02d8ff"/></linearGradient><linearGradient id="i54" gradientUnits="userSpaceOnUse" x1="1228.2" y1="194.7" x2="1166.1" y2="213.1"><stop offset="0" stop-color="#f9feff"/><stop offset="" stop-color="#f1fdff"/><stop offset=".1" stop-color="#d1faff"/><stop offset=".3" stop-color="#a5f5ff"/><stop offset=".5" stop-color="#71efff"/><stop offset=".7" stop-color="#39e9ff"/><stop offset="1" stop-color="#02e3ff"/></linearGradient><linearGradient id="i55" gradientUnits="userSpaceOnUse" x1="1228.2" y1="194.7" x2="1165.6" y2="209.7"><stop offset="0" stop-color="#faffff"/><stop offset="" stop-color="#f2feff"/><stop offset=".1" stop-color="#d3fcff"/><stop offset=".3" stop-color="#a7f9ff"/><stop offset=".5" stop-color="#73f6ff"/><stop offset=".7" stop-color="#3bf2ff"/><stop offset="1" stop-color="#02eeff"/></linearGradient><linearGradient id="i56" gradientUnits="userSpaceOnUse" x1="1228.2" y1="194.7" x2="1165" y2="206.4"><stop offset="0" stop-color="#faffff"/><stop offset="" stop-color="#f2ffff"/><stop offset=".1" stop-color="#d4feff"/><stop offset=".3" stop-color="#a9fdff"/><stop offset=".5" stop-color="#76fdff"/><stop offset=".7" stop-color="#3cfbff"/><stop offset="1" stop-color="#02faff"/></linearGradient><linearGradient id="i57" gradientUnits="userSpaceOnUse" x1="1228.2" y1="194.7" x2="1164.5" y2="203.1"><stop offset="0" stop-color="#faffff"/><stop offset="" stop-color="#f2ffff"/><stop offset=".1" stop-color="#d4fffe"/><stop offset=".3" stop-color="#aafffc"/><stop offset=".5" stop-color="#76fffb"/><stop offset=".7" stop-color="#3dfff9"/><stop offset="1" stop-color="#02fff7"/></linearGradient><linearGradient id="i58" gradientUnits="userSpaceOnUse" x1="1228.2" y1="194.7" x2="1164" y2="199.8"><stop offset="0" stop-color="#faffff"/><stop offset="" stop-color="#f2fffe"/><stop offset=".1" stop-color="#d4fffb"/><stop offset=".3" stop-color="#a9fff8"/><stop offset=".5" stop-color="#75fff4"/><stop offset=".7" stop-color="#3cffef"/><stop offset="1" stop-color="#02ffea"/></linearGradient><linearGradient id="i59" gradientUnits="userSpaceOnUse" x1="1228.2" y1="194.7" x2="1163.4" y2="196.4"><stop offset="0" stop-color="#fafffe"/><stop offset="" stop-color="#f2fffd"/><stop offset=".1" stop-color="#d3fff9"/><stop offset=".3" stop-color="#a8fff4"/><stop offset=".5" stop-color="#74ffed"/><stop offset=".7" stop-color="#3bffe5"/><stop offset="1" stop-color="#02ffde"/></linearGradient><linearGradient id="i60" gradientUnits="userSpaceOnUse" x1="1228.2" y1="194.7" x2="1162.9" y2="193"><stop offset="0" stop-color="#fafffe"/><stop offset="" stop-color="#f2fffd"/><stop offset=".1" stop-color="#d3fff7"/><stop offset=".3" stop-color="#a7ffef"/><stop offset=".5" stop-color="#73ffe6"/><stop offset=".7" stop-color="#3bffdc"/><stop offset="1" stop-color="#02ffd1"/></linearGradient><linearGradient id="i61" gradientUnits="userSpaceOnUse" x1="1228.2" y1="194.7" x2="1162.3" y2="189.5"><stop offset="0" stop-color="#fafffe"/><stop offset="" stop-color="#f2fffc"/><stop offset=".1" stop-color="#d2fff5"/><stop offset=".3" stop-color="#a7ffeb"/><stop offset=".5" stop-color="#73ffdf"/><stop offset=".7" stop-color="#3affd2"/><stop offset="1" stop-color="#02ffc5"/></linearGradient><linearGradient id="i62" gradientUnits="userSpaceOnUse" x1="1228.2" y1="194.7" x2="1161.7" y2="186"><stop offset="0" stop-color="#fafffe"/><stop offset="" stop-color="#f1fffb"/><stop offset=".1" stop-color="#d2fff3"/><stop offset=".3" stop-color="#a6ffe6"/><stop offset=".5" stop-color="#72ffd8"/><stop offset=".7" stop-color="#39ffc8"/><stop offset="1" stop-color="#02ffb9"/></linearGradient><linearGradient id="i63" gradientUnits="userSpaceOnUse" x1="1228.2" y1="194.7" x2="1161.1" y2="182.3"><stop offset="0" stop-color="#fafffd"/><stop offset="" stop-color="#f1fffb"/><stop offset=".1" stop-color="#d1fff0"/><stop offset=".3" stop-color="#a5ffe2"/><stop offset=".5" stop-color="#71ffd1"/><stop offset=".7" stop-color="#39ffbf"/><stop offset="1" stop-color="#02ffad"/></linearGradient><linearGradient id="i64" gradientUnits="userSpaceOnUse" x1="1228.2" y1="194.7" x2="1160.5" y2="178.5"><stop offset="0" stop-color="#fafffd"/><stop offset="" stop-color="#f1fffa"/><stop offset=".1" stop-color="#d1ffee"/><stop offset=".3" stop-color="#a4ffdd"/><stop offset=".5" stop-color="#70ffca"/><stop offset=".7" stop-color="#38ffb5"/><stop offset="1" stop-color="#02ffa1"/></linearGradient><linearGradient id="i65" gradientUnits="userSpaceOnUse" x1="1228.2" y1="194.7" x2="1159.9" y2="174.5"><stop offset="0" stop-color="#fafffd"/><stop offset="" stop-color="#f1fff9"/><stop offset=".1" stop-color="#d0ffeb"/><stop offset=".3" stop-color="#a3ffd8"/><stop offset=".5" stop-color="#6fffc2"/><stop offset=".7" stop-color="#38ffab"/><stop offset="1" stop-color="#02ff94"/></linearGradient><linearGradient id="i66" gradientUnits="userSpaceOnUse" x1="1228.2" y1="194.7" x2="1159.2" y2="170.3"><stop offset="0" stop-color="#fafffd"/><stop offset="" stop-color="#f1fff8"/><stop offset=".1" stop-color="#d0ffe9"/><stop offset=".3" stop-color="#a2ffd3"/><stop offset=".5" stop-color="#6effbb"/><stop offset=".7" stop-color="#37ffa0"/><stop offset="1" stop-color="#02ff87"/></linearGradient><linearGradient id="i67" gradientUnits="userSpaceOnUse" x1="1228.2" y1="194.7" x2="1158.5" y2="165.9"><stop offset="0" stop-color="#fafffd"/><stop offset="" stop-color="#f1fff8"/><stop offset=".1" stop-color="#cfffe6"/><stop offset=".3" stop-color="#a1ffce"/><stop offset=".5" stop-color="#6dffb3"/><stop offset=".7" stop-color="#36ff96"/><stop offset="1" stop-color="#02ff7a"/></linearGradient><linearGradient id="i68" gradientUnits="userSpaceOnUse" x1="1228.2" y1="194.7" x2="1157.7" y2="161.1"><stop offset="0" stop-color="#fafffc"/><stop offset="" stop-color="#f0fff7"/><stop offset=".1" stop-color="#ceffe3"/><stop offset=".3" stop-color="#a0ffc8"/><stop offset=".5" stop-color="#6cffaa"/><stop offset=".7" stop-color="#36ff8b"/><stop offset="1" stop-color="#02ff6c"/></linearGradient><linearGradient id="i69" gradientUnits="userSpaceOnUse" x1="1228.2" y1="194.7" x2="1156.9" y2="156"><stop offset="0" stop-color="#fafffc"/><stop offset="" stop-color="#f0fff6"/><stop offset=".1" stop-color="#ceffe0"/><stop offset=".3" stop-color="#9fffc3"/><stop offset=".5" stop-color="#6bffa1"/><stop offset=".7" stop-color="#35ff7f"/><stop offset="1" stop-color="#01ff5e"/></linearGradient><linearGradient id="i70" gradientUnits="userSpaceOnUse" x1="1228.2" y1="194.7" x2="1156" y2="150.5"><stop offset="0" stop-color="#fafffc"/><stop offset="" stop-color="#f0fff5"/><stop offset=".1" stop-color="#cdffdd"/><stop offset=".3" stop-color="#9effbc"/><stop offset=".5" stop-color="#6aff98"/><stop offset=".7" stop-color="#34ff73"/><stop offset="1" stop-color="#01ff50"/></linearGradient><linearGradient id="i71" gradientUnits="userSpaceOnUse" x1="1228.2" y1="194.7" x2="1155" y2="144.5"><stop offset="0" stop-color="#fafffc"/><stop offset="" stop-color="#effff4"/><stop offset=".1" stop-color="#ccffd9"/><stop offset=".3" stop-color="#9dffb5"/><stop offset=".5" stop-color="#69ff8e"/><stop offset=".7" stop-color="#33ff66"/><stop offset="1" stop-color="#01ff40"/></linearGradient><linearGradient id="i72" gradientUnits="userSpaceOnUse" x1="1228.2" y1="194.7" x2="1154" y2="137.8"><stop offset="0" stop-color="#fbfffc"/><stop offset="" stop-color="#effff2"/><stop offset=".1" stop-color="#cbffd5"/><stop offset=".3" stop-color="#9cffae"/><stop offset=".5" stop-color="#67ff83"/><stop offset=".7" stop-color="#32ff58"/><stop offset="1" stop-color="#01ff2f"/></linearGradient><linearGradient id="i73" gradientUnits="userSpaceOnUse" x1="1228.2" y1="194.7" x2="1152.8" y2="130.3"><stop offset="0" stop-color="#fbfffb"/><stop offset="" stop-color="#effff1"/><stop offset=".1" stop-color="#caffd0"/><stop offset=".3" stop-color="#9affa6"/><stop offset=".5" stop-color="#66ff77"/><stop offset=".7" stop-color="#31ff49"/><stop offset="1" stop-color="#01ff1e"/></linearGradient><linearGradient id="i74" gradientUnits="userSpaceOnUse" x1="1228.2" y1="194.7" x2="1151.4" y2="121.9"><stop offset="0" stop-color="#fbfffb"/><stop offset="" stop-color="#eeffef"/><stop offset=".1" stop-color="#c9ffcb"/><stop offset=".3" stop-color="#99ff9d"/><stop offset=".5" stop-color="#64ff6a"/><stop offset=".7" stop-color="#30ff38"/><stop offset="1" stop-color="#01ff0b"/></linearGradient><linearGradient id="i75" gradientUnits="userSpaceOnUse" x1="1228.2" y1="194.7" x2="1155.2" y2="117.8"><stop offset="0" stop-color="#fbfffb"/><stop offset="" stop-color="#efffef"/><stop offset=".1" stop-color="#cbffc9"/><stop offset=".3" stop-color="#9dff99"/><stop offset=".5" stop-color="#6bff64"/><stop offset=".7" stop-color="#39ff30"/><stop offset="1" stop-color="#0bff01"/></linearGradient><linearGradient id="i76" gradientUnits="userSpaceOnUse" x1="1228.2" y1="194.7" x2="1163.1" y2="118.6"><stop offset="0" stop-color="#fbfffb"/><stop offset="" stop-color="#f1ffef"/><stop offset=".1" stop-color="#d0ffca"/><stop offset=".3" stop-color="#a6ff9a"/><stop offset=".5" stop-color="#77ff66"/><stop offset=".7" stop-color="#49ff31"/><stop offset="1" stop-color="#1fff01"/></linearGradient><linearGradient id="i77" gradientUnits="userSpaceOnUse" x1="1228.2" y1="194.7" x2="1170.2" y2="119.2"><stop offset="0" stop-color="#fbfffb"/><stop offset="" stop-color="#f2ffef"/><stop offset=".1" stop-color="#d5ffcb"/><stop offset=".3" stop-color="#aeff9c"/><stop offset=".5" stop-color="#83ff67"/><stop offset=".7" stop-color="#58ff32"/><stop offset="1" stop-color="#31ff01"/></linearGradient><linearGradient id="i78" gradientUnits="userSpaceOnUse" x1="1228.2" y1="194.7" x2="1176.7" y2="119.8"><stop offset="0" stop-color="#fcfffb"/><stop offset="" stop-color="#f3fff0"/><stop offset=".1" stop-color="#d9ffcc"/><stop offset=".3" stop-color="#b6ff9d"/><stop offset=".5" stop-color="#8eff68"/><stop offset=".7" stop-color="#67ff33"/><stop offset="1" stop-color="#42ff01"/></linearGradient><linearGradient id="i79" gradientUnits="userSpaceOnUse" x1="1228.2" y1="194.7" x2="1182.6" y2="120.4"><stop offset="0" stop-color="#fcfffb"/><stop offset="" stop-color="#f4fff0"/><stop offset=".1" stop-color="#ddffcd"/><stop offset=".3" stop-color="#bdff9e"/><stop offset=".5" stop-color="#99ff69"/><stop offset=".7" stop-color="#74ff34"/><stop offset="1" stop-color="#52ff01"/></linearGradient><linearGradient id="i80" gradientUnits="userSpaceOnUse" x1="1228.2" y1="194.7" x2="1188.1" y2="120.9"><stop offset="0" stop-color="#fcfffb"/><stop offset="" stop-color="#f6fff0"/><stop offset=".1" stop-color="#e0ffce"/><stop offset=".3" stop-color="#c3ff9f"/><stop offset=".5" stop-color="#a3ff6b"/><stop offset=".7" stop-color="#81ff35"/><stop offset="1" stop-color="#61ff01"/></linearGradient><linearGradient id="i81" gradientUnits="userSpaceOnUse" x1="1228.2" y1="194.7" x2="1193.2" y2="121.4"><stop offset="0" stop-color="#fcfffa"/><stop offset="" stop-color="#f7fff0"/><stop offset=".1" stop-color="#e3ffce"/><stop offset=".3" stop-color="#c9ffa0"/><stop offset=".5" stop-color="#acff6c"/><stop offset=".7" stop-color="#8dff35"/><stop offset="1" stop-color="#70ff01"/></linearGradient><linearGradient id="i82" gradientUnits="userSpaceOnUse" x1="1228.2" y1="194.7" x2="1198" y2="121.8"><stop offset="0" stop-color="#fcfffa"/><stop offset="" stop-color="#f7fff1"/><stop offset=".1" stop-color="#e6ffcf"/><stop offset=".3" stop-color="#cfffa1"/><stop offset=".5" stop-color="#b5ff6d"/><stop offset=".7" stop-color="#99ff36"/><stop offset="1" stop-color="#7fff02"/></linearGradient><linearGradient id="i83" gradientUnits="userSpaceOnUse" x1="1228.2" y1="194.7" x2="1202.5" y2="122.2"><stop offset="0" stop-color="#fdfffa"/><stop offset="" stop-color="#f8fff1"/><stop offset=".1" stop-color="#e9ffcf"/><stop offset=".3" stop-color="#d5ffa2"/><stop offset=".5" stop-color="#bdff6e"/><stop offset=".7" stop-color="#a5ff37"/><stop offset="1" stop-color="#8dff02"/></linearGradient><linearGradient id="i84" gradientUnits="userSpaceOnUse" x1="1228.2" y1="194.7" x2="1206.8" y2="122.7"><stop offset="0" stop-color="#fdfffa"/><stop offset="" stop-color="#f9fff1"/><stop offset=".1" stop-color="#ecffd0"/><stop offset=".3" stop-color="#daffa3"/><stop offset=".5" stop-color="#c6ff6e"/><stop offset=".7" stop-color="#b0ff37"/><stop offset="1" stop-color="#9bff02"/></linearGradient><linearGradient id="i85" gradientUnits="userSpaceOnUse" x1="1228.2" y1="194.7" x2="1210.9" y2="123"><stop offset="0" stop-color="#fdfffa"/><stop offset="" stop-color="#fafff1"/><stop offset=".1" stop-color="#efffd1"/><stop offset=".3" stop-color="#e0ffa4"/><stop offset=".5" stop-color="#ceff6f"/><stop offset=".7" stop-color="#bbff38"/><stop offset="1" stop-color="#a8ff02"/></linearGradient><linearGradient id="i86" gradientUnits="userSpaceOnUse" x1="1228.2" y1="194.7" x2="1214.9" y2="123.4"><stop offset="0" stop-color="#fdfffa"/><stop offset="" stop-color="#fbfff1"/><stop offset=".1" stop-color="#f2ffd1"/><stop offset=".3" stop-color="#e5ffa4"/><stop offset=".5" stop-color="#d6ff70"/><stop offset=".7" stop-color="#c6ff38"/><stop offset="1" stop-color="#b6ff02"/></linearGradient><linearGradient id="i87" gradientUnits="userSpaceOnUse" x1="1228.2" y1="194.7" x2="1218.8" y2="123.8"><stop offset="0" stop-color="#fefffa"/><stop offset="" stop-color="#fcfff2"/><stop offset=".1" stop-color="#f4ffd2"/><stop offset=".3" stop-color="#eaffa5"/><stop offset=".5" stop-color="#deff71"/><stop offset=".7" stop-color="#d0ff39"/><stop offset="1" stop-color="#c3ff02"/></linearGradient><linearGradient id="i88" gradientUnits="userSpaceOnUse" x1="1228.2" y1="194.7" x2="1222.6" y2="124.1"><stop offset="0" stop-color="#fefffa"/><stop offset="" stop-color="#fcfff2"/><stop offset=".1" stop-color="#f7ffd2"/><stop offset=".3" stop-color="#efffa6"/><stop offset=".5" stop-color="#e5ff72"/><stop offset=".7" stop-color="#dbff3a"/><stop offset="1" stop-color="#d1ff02"/></linearGradient><linearGradient id="i89" gradientUnits="userSpaceOnUse" x1="1228.2" y1="194.7" x2="1226.3" y2="124.5"><stop offset="0" stop-color="#fefffa"/><stop offset="" stop-color="#fdfff2"/><stop offset=".1" stop-color="#f9ffd3"/><stop offset=".3" stop-color="#f4ffa7"/><stop offset=".5" stop-color="#edff73"/><stop offset=".7" stop-color="#e6ff3a"/><stop offset="1" stop-color="#dfff02"/></linearGradient><linearGradient id="i90" gradientUnits="userSpaceOnUse" x1="1228.2" y1="194.7" x2="1230" y2="124.8"><stop offset="0" stop-color="#fefffa"/><stop offset="" stop-color="#fefff2"/><stop offset=".1" stop-color="#fcffd3"/><stop offset=".3" stop-color="#f9ffa8"/><stop offset=".5" stop-color="#f5ff74"/><stop offset=".7" stop-color="#f1ff3b"/><stop offset="1" stop-color="#edff02"/></linearGradient><linearGradient id="i91" gradientUnits="userSpaceOnUse" x1="1228.2" y1="194.7" x2="1233.6" y2="125.2"><stop offset="0" stop-color="#fffffa"/><stop offset="" stop-color="#fffff2"/><stop offset=".1" stop-color="#feffd4"/><stop offset=".3" stop-color="#fdffa8"/><stop offset=".5" stop-color="#fdff75"/><stop offset=".7" stop-color="#fcff3b"/><stop offset="1" stop-color="#fbff02"/></linearGradient><linearGradient id="i92" gradientUnits="userSpaceOnUse" x1="1228.2" y1="194.7" x2="1237.3" y2="125.5"><stop offset="0" stop-color="#fffffa"/><stop offset="" stop-color="#fffff2"/><stop offset=".1" stop-color="#fffdd3"/><stop offset=".3" stop-color="#fffca7"/><stop offset=".5" stop-color="#fffa73"/><stop offset=".7" stop-color="#fff73a"/><stop offset="1" stop-color="#fff502"/></linearGradient><linearGradient id="i93" gradientUnits="userSpaceOnUse" x1="1228.2" y1="194.7" x2="1240.9" y2="125.9"><stop offset="0" stop-color="#fffffa"/><stop offset="" stop-color="#fffef2"/><stop offset=".1" stop-color="#fffbd1"/><stop offset=".3" stop-color="#fff7a5"/><stop offset=".5" stop-color="#fff270"/><stop offset=".7" stop-color="#ffed38"/><stop offset="1" stop-color="#ffe802"/></linearGradient><linearGradient id="i94" gradientUnits="userSpaceOnUse" x1="1228.2" y1="194.7" x2="1244.6" y2="126.2"><stop offset="0" stop-color="#fffffa"/><stop offset="" stop-color="#fffdf1"/><stop offset=".1" stop-color="#fff9d0"/><stop offset=".3" stop-color="#fff2a2"/><stop offset=".5" stop-color="#ffeb6e"/><stop offset=".7" stop-color="#ffe337"/><stop offset="1" stop-color="#ffdc02"/></linearGradient><linearGradient id="i95" gradientUnits="userSpaceOnUse" x1="1228.2" y1="194.7" x2="1248.4" y2="126.5"><stop offset="0" stop-color="#fffefa"/><stop offset="" stop-color="#fffcf1"/><stop offset=".1" stop-color="#fff6ce"/><stop offset=".3" stop-color="#ffeea0"/><stop offset=".5" stop-color="#ffe46b"/><stop offset=".7" stop-color="#ffda35"/><stop offset="1" stop-color="#ffd002"/></linearGradient><linearGradient id="i96" gradientUnits="userSpaceOnUse" x1="1228.2" y1="194.7" x2="1252.2" y2="126.9"><stop offset="0" stop-color="#fffefa"/><stop offset="" stop-color="#fffcf0"/><stop offset=".1" stop-color="#fff4cd"/><stop offset=".3" stop-color="#ffe99e"/><stop offset=".5" stop-color="#ffdd69"/><stop offset=".7" stop-color="#ffd133"/><stop offset="1" stop-color="#ffc502"/></linearGradient><linearGradient id="i97" gradientUnits="userSpaceOnUse" x1="1228.2" y1="194.7" x2="1256.1" y2="127.3"><stop offset="0" stop-color="#fffefa"/><stop offset="" stop-color="#fffbef"/><stop offset=".1" stop-color="#fff1cb"/><stop offset=".3" stop-color="#ffe49b"/><stop offset=".5" stop-color="#ffd667"/><stop offset=".7" stop-color="#ffc832"/><stop offset="1" stop-color="#ffbb02"/></linearGradient><linearGradient id="i98" gradientUnits="userSpaceOnUse" x1="1228.2" y1="194.7" x2="1260.1" y2="127.7"><stop offset="0" stop-color="#fffdfa"/><stop offset="" stop-color="#fffaef"/><stop offset=".1" stop-color="#ffefca"/><stop offset=".3" stop-color="#ffe099"/><stop offset=".5" stop-color="#ffd064"/><stop offset=".7" stop-color="#ffc030"/><stop offset="1" stop-color="#ffb101"/></linearGradient><linearGradient id="i99" gradientUnits="userSpaceOnUse" x1="1228.2" y1="194.7" x2="1264.4" y2="128"><stop offset="0" stop-color="#fffdfa"/><stop offset="" stop-color="#fff9ee"/><stop offset=".1" stop-color="#ffecc8"/><stop offset=".3" stop-color="#ffdb97"/><stop offset=".5" stop-color="#ffc962"/><stop offset=".7" stop-color="#ffb72f"/><stop offset="1" stop-color="#ffa801"/></linearGradient><linearGradient id="i100" gradientUnits="userSpaceOnUse" x1="1228.2" y1="194.7" x2="1268.8" y2="128.5"><stop offset="0" stop-color="#fffdf9"/><stop offset="" stop-color="#fff9ee"/><stop offset=".1" stop-color="#ffe9c6"/><stop offset=".3" stop-color="#ffd694"/><stop offset=".5" stop-color="#ffc260"/><stop offset=".7" stop-color="#ffaf2e"/><stop offset="1" stop-color="#ff9e01"/></linearGradient><linearGradient id="i101" gradientUnits="userSpaceOnUse" x1="1228.2" y1="194.7" x2="1273.4" y2="128.9"><stop offset="0" stop-color="#fffdf9"/><stop offset="" stop-color="#fff8ed"/><stop offset=".1" stop-color="#ffe7c5"/><stop offset=".3" stop-color="#ffd292"/><stop offset=".5" stop-color="#ffbc5d"/><stop offset=".7" stop-color="#ffa72c"/><stop offset="1" stop-color="#ff9501"/></linearGradient><linearGradient id="i102" gradientUnits="userSpaceOnUse" x1="1228.2" y1="194.7" x2="1278.3" y2="129.4"><stop offset="0" stop-color="#fffdf9"/><stop offset="" stop-color="#fff7ec"/><stop offset=".1" stop-color="#ffe4c3"/><stop offset=".3" stop-color="#ffcd8f"/><stop offset=".5" stop-color="#ffb55b"/><stop offset=".7" stop-color="#ff9f2b"/><stop offset="1" stop-color="#ff8d01"/></linearGradient><linearGradient id="i103" gradientUnits="userSpaceOnUse" x1="1228.2" y1="194.7" x2="1283.6" y2="129.9"><stop offset="0" stop-color="#fffcf9"/><stop offset="" stop-color="#fff6ec"/><stop offset=".1" stop-color="#ffe1c1"/><stop offset=".3" stop-color="#ffc88d"/><stop offset=".5" stop-color="#ffae59"/><stop offset=".7" stop-color="#ff9729"/><stop offset="1" stop-color="#ff8401"/></linearGradient><linearGradient id="i104" gradientUnits="userSpaceOnUse" x1="1228.2" y1="194.7" x2="1289.2" y2="130.4"><stop offset="0" stop-color="#fffcf9"/><stop offset="" stop-color="#fff5eb"/><stop offset=".1" stop-color="#ffdebf"/><stop offset=".3" stop-color="#ffc28a"/><stop offset=".5" stop-color="#ffa756"/><stop offset=".7" stop-color="#ff8f28"/><stop offset="1" stop-color="#ff7b01"/></linearGradient><linearGradient id="i105" gradientUnits="userSpaceOnUse" x1="1228.2" y1="194.7" x2="1295.4" y2="131"><stop offset="0" stop-color="#fffcf9"/><stop offset="" stop-color="#fff3ea"/><stop offset=".1" stop-color="#ffdabd"/><stop offset=".3" stop-color="#ffbd88"/><stop offset=".5" stop-color="#ffa054"/><stop offset=".7" stop-color="#ff8726"/><stop offset="1" stop-color="#ff7201"/></linearGradient><linearGradient id="i106" gradientUnits="userSpaceOnUse" x1="1228.2" y1="194.7" x2="1302.1" y2="131.6"><stop offset="0" stop-color="#fffcf9"/><stop offset="" stop-color="#fff2e9"/><stop offset=".1" stop-color="#ffd7bb"/><stop offset=".3" stop-color="#ffb785"/><stop offset=".5" stop-color="#ff9951"/><stop offset=".7" stop-color="#ff7f25"/><stop offset="1" stop-color="#ff6a01"/></linearGradient><linearGradient id="i107" gradientUnits="userSpaceOnUse" x1="1228.2" y1="194.7" x2="1309.5" y2="132.3"><stop offset="0" stop-color="#fffcf9"/><stop offset="" stop-color="#fff1e8"/><stop offset=".1" stop-color="#ffd3b8"/><stop offset=".3" stop-color="#ffb182"/><stop offset=".5" stop-color="#ff914f"/><stop offset=".7" stop-color="#ff7723"/><stop offset="1" stop-color="#ff6101"/></linearGradient><linearGradient id="i108" gradientUnits="userSpaceOnUse" x1="1228.2" y1="194.7" x2="1317.9" y2="133.1"><stop offset="0" stop-color="#fffbf9"/><stop offset="" stop-color="#ffefe7"/><stop offset=".1" stop-color="#ffcfb5"/><stop offset=".3" stop-color="#ffab7e"/><stop offset=".5" stop-color="#ff8a4c"/><stop offset=".7" stop-color="#ff6e22"/><stop offset="1" stop-color="#ff5801"/></linearGradient><linearGradient id="i109" gradientUnits="userSpaceOnUse" x1="1228.2" y1="194.7" x2="1327.3" y2="134"><stop offset="0" stop-color="#fffbf9"/><stop offset="" stop-color="#ffeee6"/><stop offset=".1" stop-color="#ffcab2"/><stop offset=".3" stop-color="#ffa47b"/><stop offset=".5" stop-color="#ff8149"/><stop offset=".7" stop-color="#ff6520"/><stop offset="1" stop-color="#ff4f01"/></linearGradient><linearGradient id="i110" gradientUnits="userSpaceOnUse" x1="1228.2" y1="194.7" x2="1338.2" y2="135"><stop offset="0" stop-color="#fffbfa"/><stop offset="" stop-color="#ffece4"/><stop offset=".1" stop-color="#ffc5af"/><stop offset=".3" stop-color="#ff9c77"/><stop offset=".5" stop-color="#ff7846"/><stop offset=".7" stop-color="#ff5c1f"/><stop offset="1" stop-color="#ff4601"/></linearGradient><linearGradient id="i111" gradientUnits="userSpaceOnUse" x1="1228.2" y1="194.7" x2="1350.9" y2="136.2"><stop offset="0" stop-color="#fffbfa"/><stop offset="" stop-color="#ffe9e3"/><stop offset=".1" stop-color="#ffbfac"/><stop offset=".3" stop-color="#ff9473"/><stop offset=".5" stop-color="#ff6f43"/><stop offset=".7" stop-color="#ff521d"/><stop offset="1" stop-color="#ff3c00"/></linearGradient><linearGradient id="i112" gradientUnits="userSpaceOnUse" x1="1228.2" y1="194.7" x2="1366.1" y2="137.6"><stop offset="0" stop-color="#fffbfa"/><stop offset="" stop-color="#ffe7e1"/><stop offset=".1" stop-color="#ffb9a7"/><stop offset=".3" stop-color="#ff8a6e"/><stop offset=".5" stop-color="#ff653f"/><stop offset=".7" stop-color="#ff481b"/><stop offset="1" stop-color="#ff3200"/></linearGradient><linearGradient id="i113" gradientUnits="userSpaceOnUse" x1="1228.2" y1="194.7" x2="1384.6" y2="139.3"><stop offset="0" stop-color="#fffbfa"/><stop offset="" stop-color="#ffe4df"/><stop offset=".1" stop-color="#ffb1a3"/><stop offset=".3" stop-color="#ff8069"/><stop offset=".5" stop-color="#ff5a3b"/><stop offset=".7" stop-color="#ff3d19"/><stop offset="1" stop-color="#ff2800"/></linearGradient><linearGradient id="i114" gradientUnits="userSpaceOnUse" x1="1228.2" y1="194.7" x2="1407.8" y2="141.5"><stop offset="0" stop-color="#fffbfa"/><stop offset="" stop-color="#ffe0dc"/><stop offset=".1" stop-color="#ffa89d"/><stop offset=".3" stop-color="#ff7563"/><stop offset=".5" stop-color="#ff4d37"/><stop offset=".7" stop-color="#ff3117"/><stop offset="1" stop-color="#ff1d00"/></linearGradient><linearGradient id="i115" gradientUnits="userSpaceOnUse" x1="1228.2" y1="194.7" x2="1438" y2="144.3"><stop offset="0" stop-color="#fffafa"/><stop offset="" stop-color="#ffdbd8"/><stop offset=".1" stop-color="#ff9d96"/><stop offset=".3" stop-color="#ff675d"/><stop offset=".5" stop-color="#ff4033"/><stop offset=".7" stop-color="#ff2415"/><stop offset="1" stop-color="#ff1100"/></linearGradient><linearGradient id="i116" gradientUnits="userSpaceOnUse" x1="1228.2" y1="194.7" x2="1479.2" y2="148.2"><stop offset="0" stop-color="#fffafa"/><stop offset="" stop-color="#ffd4d4"/><stop offset=".1" stop-color="#ff908e"/><stop offset=".3" stop-color="#ff5855"/><stop offset=".5" stop-color="#ff312d"/><stop offset=".7" stop-color="#ff1712"/><stop offset="1" stop-color="#ff0500"/></linearGradient><linearGradient id="i117" gradientUnits="userSpaceOnUse" x1="1228.2" y1="194.7" x2="1486.8" y2="160.7"><stop offset="0" stop-color="#fffafb"/><stop offset="" stop-color="#ffd3d4"/><stop offset=".1" stop-color="#ff8d91"/><stop offset=".3" stop-color="#ff545a"/><stop offset=".5" stop-color="#ff2d34"/><stop offset=".7" stop-color="#ff121a"/><stop offset="1" stop-color="#ff0009"/></linearGradient><linearGradient id="i118" gradientUnits="userSpaceOnUse" x1="1228.2" y1="194.7" x2="1472.3" y2="175.5"><stop offset="0" stop-color="#fffafb"/><stop offset="" stop-color="#ffd5d8"/><stop offset=".1" stop-color="#ff9099"/><stop offset=".3" stop-color="#ff5765"/><stop offset=".5" stop-color="#ff2f40"/><stop offset=".7" stop-color="#ff1327"/><stop offset="1" stop-color="#ff0015"/></linearGradient><linearGradient id="i119" gradientUnits="userSpaceOnUse" x1="1228.2" y1="194.7" x2="1459.5" y2="188.7"><stop offset="0" stop-color="#fffafb"/><stop offset="" stop-color="#ffd7dc"/><stop offset=".1" stop-color="#ff93a1"/><stop offset=".3" stop-color="#ff5a70"/><stop offset=".5" stop-color="#ff314c"/><stop offset=".7" stop-color="#ff1433"/><stop offset="1" stop-color="#ff0022"/></linearGradient><clipPath id="cl"><path d="M1291 565.6L1290.8 565.7L1290.6 565.9L1290.3 566.1L1289.8 566.1L1289.1 566.1L1288.3 566.1L1287.3 565.8L1286.1 565.3L1284.8 564.6L1283.4 563.6L1281.7 562.3L1279.6 560.6L1277.1 558.6L1274.3 556.3L1271.1 553.6L1267.4 550.5L1263.3 547L1258.6 543.3L1253.5 539L1247.6 534.1L1240.5 528.1L1232.5 521.1L1224.5 514.1L1217.4 507.7L1211.9 502.4L1207.2 497.8L1202.7 493.1L1197.5 487.3L1191.4 480.4L1184.9 472.7L1178.1 464.4L1171 455.2L1163.5 445.4L1155.8 434.7L1147.8 423.4L1139.7 411.4L1131.4 398.6L1122.8 385.1L1114.2 371.1L1105.8 356.8L1097.3 342.4L1088.9 327.5L1080.7 312.5L1073.1 297.9L1066 283.3L1059.4 268.8L1053.2 254.7L1047.6 241.2L1042.5 228.4L1037.9 216L1033.8 204.3L1030.3 193.5L1027.3 183.5L1024.8 174.3L1022.9 165.8L1021.3 158L1020.1 150.9L1019.4 144.5L1019.1 138.6L1019.1 133.3L1019.5 128.3L1020.2 123.9L1021.2 119.9L1022.5 116.3L1024.2 113L1026.1 110.2L1028.3 107.7L1030.7 105.5L1033.3 103.7L1036.1 102.2L1039.1 101L1042.2 100L1045.5 99.2L1048.9 98.7L1052.4 98.3L1055.9 98L1059.6 97.7L1063.3 97.6L1067.1 97.5L1070.9 97.5L1074.7 97.5L1078.4 97.5L1082.2 97.6L1086.1 97.7L1090 97.8L1093.9 98L1097.9 98.2L1101.9 98.4L1106.1 98.7L1110.3 99L1114.6 99.3L1119 99.6L1123 100L1126.7 100.3L1131.2 100.7L1137.6 101.3L1146.4 102.2L1156.9 103.3L1168.6 104.5L1180.6 105.8L1192.8 107.2L1205.6 108.6L1219.1 110.1L1233.3 111.8L1248.2 113.5L1263.8 115.3L1280 117.1L1296.9 119.1L1314.5 121.1L1332.9 123.2L1351.7 125.4L1370.5 127.6L1389.6 129.8L1409 132L1428.4 134.2L1447.1 136.4L1465.4 138.5L1483.5 140.6L1500.8 142.6L1517 144.4L1532.1 146.2L1546.2 147.8L1559.3 149.3L1571.4 150.7L1582.4 152L1592.3 153.1L1601.4 154.2L1610 155.2L1618 156.1L1625.4 156.9L1632.1 157.7L1638.2 158.4L1643.7 159.1L1648.6 159.6L1652.9 160.1L1656.8 160.6L1660.2 160.9L1662.9 161.3L1665.4 161.5L1667.9 161.8L1670.5 162.1L1673.1 162.4L1675.5 162.7L1677.5 162.9L1678.9 163.1L1679.9 163.2L1680.7 163.3L1681.2 163.4Z"/></clipPath><clipPath id="ct"><path d="M1497.4 149.9L1150.7 117.4L1204.3 449.6Z"/></clipPath><clipPath id="cp"><rect x="1016.8" y="88.3" width="638.8" height="491.2"/></clipPath></defs><rect x="1016.8" y="88.3" width="638.8" height="491.2" fill="#262626"/><g clip-path="url(#cp)"><g clip-path="url(#cl)" shape-rendering="crispEdges"><path fill="url(#o0)" d="M1228.2 194.7L1652.5 194.7L1647.3 200.1L1642.2 205.3L1637.3 210.4"/><path fill="url(#o1)" d="M1228.2 194.7L1642 205.6L1637 210.6L1632.2 215.6L1627.5 220.5"/><path fill="url(#o2)" d="M1228.2 194.7L1631.9 215.9L1627.2 220.7L1622.6 225.5L1618.1 230.1"/><path fill="url(#o3)" d="M1228.2 194.7L1622.4 225.8L1617.9 230.4L1613.5 234.9L1609.1 239.4"/><path fill="url(#o4)" d="M1228.2 194.7L1613.2 235.2L1608.9 239.6L1604.7 244L1600.5 248.3"/><path fill="url(#o5)" d="M1228.2 194.7L1604.4 244.3L1600.3 248.5L1596.2 252.7L1592.2 256.9"/><path fill="url(#o6)" d="M1228.2 194.7L1596 253L1592 257.1L1588 261.2L1584.2 265.1"/><path fill="url(#o7)" d="M1228.2 194.7L1587.8 261.4L1583.9 265.4L1580.1 269.3L1576.4 273.1"/><path fill="url(#o8)" d="M1228.2 194.7L1579.9 269.5L1576.2 273.3L1572.5 277.1L1568.9 280.9"/><path fill="url(#o9)" d="M1228.2 194.7L1572.3 277.3L1568.7 281.1L1565.1 284.8L1561.6 288.4"/><path fill="url(#o10)" d="M1228.2 194.7L1564.9 285L1561.4 288.6L1557.9 292.2L1554.5 295.7"/><path fill="url(#o11)" d="M1228.2 194.7L1557.7 292.4L1554.3 295.9L1551 299.4L1547.6 302.8"/><path fill="url(#o12)" d="M1228.2 194.7L1550.8 299.5L1547.4 303L1544.2 306.4L1540.9 309.7"/><path fill="url(#o13)" d="M1228.2 194.7L1544 306.6L1540.7 309.9L1537.5 313.2L1534.3 316.5"/><path fill="url(#o14)" d="M1228.2 194.7L1537.3 313.4L1534.2 316.7L1531 319.9L1527.9 323.1"/><path fill="url(#o15)" d="M1228.2 194.7L1530.8 320.1L1527.7 323.3L1524.6 326.5L1521.6 329.6"/><path fill="url(#o16)" d="M1228.2 194.7L1524.5 326.7L1521.4 329.8L1518.4 332.9L1515.4 336"/><path fill="url(#o17)" d="M1228.2 194.7L1518.2 333.1L1515.2 336.2L1512.3 339.2L1509.3 342.3"/><path fill="url(#o18)" d="M1228.2 194.7L1512.1 339.4L1509.2 342.4L1506.2 345.4L1503.3 348.4"/><path fill="url(#o19)" d="M1228.2 194.7L1506.1 345.6L1503.2 348.6L1500.3 351.6L1497.4 354.5"/><path fill="url(#o20)" d="M1228.2 194.7L1500.1 351.7L1497.3 354.7L1494.4 357.6L1491.6 360.5"/><path fill="url(#o21)" d="M1228.2 194.7L1494.3 357.8L1491.4 360.7L1488.6 363.6L1485.8 366.5"/><path fill="url(#o22)" d="M1228.2 194.7L1488.5 363.8L1485.7 366.7L1482.9 369.5L1480.1 372.4"/><path fill="url(#o23)" d="M1228.2 194.7L1482.7 369.7L1480 372.5L1477.2 375.4L1474.4 378.2"/><path fill="url(#o24)" d="M1228.2 194.7L1477 375.5L1474.3 378.4L1471.5 381.2L1468.8 384"/><path fill="url(#o25)" d="M1228.2 194.7L1471.4 381.4L1468.7 384.2L1465.9 387L1463.2 389.8"/><path fill="url(#o26)" d="M1228.2 194.7L1465.8 387.1L1463.1 389.9L1460.3 392.7L1457.6 395.5"/><path fill="url(#o27)" d="M1228.2 194.7L1460.2 392.9L1457.5 395.7L1454.8 398.5L1452.1 401.3"/><path fill="url(#o28)" d="M1228.2 194.7L1454.6 398.6L1451.9 401.4L1449.2 404.2L1446.5 407"/><path fill="url(#o29)" d="M1228.2 194.7L1449.1 404.4L1446.4 407.1L1443.7 409.9L1441 412.7"/><path fill="url(#o30)" d="M1228.2 194.7L1443.5 410.1L1440.8 412.9L1438.1 415.7L1435.4 418.4"/><path fill="url(#o31)" d="M1228.2 194.7L1438 415.8L1435.3 418.6L1432.5 421.4L1429.8 424.2"/><path fill="url(#o32)" d="M1228.2 194.7L1432.4 421.6L1429.7 424.3L1427 427.2L1424.2 430"/><path fill="url(#o33)" d="M1228.2 194.7L1426.8 427.3L1424.1 430.1L1421.3 432.9L1418.6 435.8"/><path fill="url(#o34)" d="M1228.2 194.7L1421.2 433.1L1418.4 435.9L1415.7 438.8L1412.9 441.6"/><path fill="url(#o35)" d="M1228.2 194.7L1415.5 438.9L1412.8 441.8L1410 444.6L1407.2 447.5"/><path fill="url(#o36)" d="M1228.2 194.7L1409.8 444.8L1407.1 447.7L1404.3 450.6L1401.4 453.5"/><path fill="url(#o37)" d="M1228.2 194.7L1404.1 450.7L1401.3 453.6L1398.5 456.5L1395.6 459.5"/><path fill="url(#o38)" d="M1228.2 194.7L1398.3 456.7L1395.4 459.6L1392.6 462.6L1389.7 465.6"/><path fill="url(#o39)" d="M1228.2 194.7L1392.4 462.8L1389.5 465.7L1386.6 468.7L1383.7 471.7"/><path fill="url(#o40)" d="M1228.2 194.7L1386.5 468.9L1383.5 471.9L1380.6 475L1377.6 478"/><path fill="url(#o41)" d="M1228.2 194.7L1380.4 475.1L1377.4 478.2L1374.4 481.3L1371.4 484.4"/><path fill="url(#o42)" d="M1228.2 194.7L1374.3 481.5L1371.2 484.6L1368.2 487.7L1365.1 490.9"/><path fill="url(#o43)" d="M1228.2 194.7L1368 487.9L1364.9 491.1L1361.8 494.3L1358.7 497.6"/><path fill="url(#o44)" d="M1228.2 194.7L1361.6 494.5L1358.5 497.7L1355.3 501L1352.1 504.3"/><path fill="url(#o45)" d="M1228.2 194.7L1355.1 501.2L1351.9 504.5L1348.6 507.9L1345.3 511.3"/><path fill="url(#o46)" d="M1228.2 194.7L1348.4 508.1L1345.1 511.5L1341.8 514.9L1338.4 518.4"/><path fill="url(#o47)" d="M1228.2 194.7L1341.6 515.1L1338.2 518.6L1334.8 522.1L1331.3 525.7"/><path fill="url(#o48)" d="M1228.2 194.7L1334.6 522.3L1331.1 525.9L1327.6 529.6L1324 533.2"/><path fill="url(#o49)" d="M1228.2 194.7L1327.4 529.8L1323.8 533.5L1320.2 537.2L1316.5 541"/><path fill="url(#o50)" d="M1228.2 194.7L1320 537.4L1316.3 541.2L1312.5 545.1L1308.7 549"/><path fill="url(#o51)" d="M1228.2 194.7L1312.3 545.3L1308.5 549.2L1304.6 553.2L1300.7 557.3"/><path fill="url(#o52)" d="M1228.2 194.7L1304.4 553.5L1300.5 557.5L1296.4 561.7L1292.4 565.9"/><path fill="url(#o53)" d="M1228.2 194.7L1296.2 561.9L1292.1 566.1L1287.4 567.3L1282.1 563.9"/><path fill="url(#o54)" d="M1228.2 194.7L1287.1 567.2L1281.8 563.7L1276.4 559.3L1271.2 554.9"/><path fill="url(#o55)" d="M1228.2 194.7L1276.1 559.1L1270.9 554.6L1265.8 550.4L1260.9 546.4"/><path fill="url(#o56)" d="M1228.2 194.7L1265.5 550.2L1260.6 546.2L1255.8 542.2L1251.1 538.3"/><path fill="url(#o57)" d="M1228.2 194.7L1255.5 542L1250.8 538.1L1246.2 534.2L1241.7 530.3"/><path fill="url(#o58)" d="M1228.2 194.7L1245.9 534L1241.5 530.1L1237.1 526.4L1232.8 522.7"/><path fill="url(#o59)" d="M1228.2 194.7L1236.8 526.1L1232.6 522.5L1228.4 518.8L1224.3 515.2"/><path fill="url(#o60)" d="M1228.2 194.7L1228.2 518.6L1224.1 515L1220.1 511.4L1216.2 507.8"/><path fill="url(#o61)" d="M1228.2 194.7L1219.9 511.2L1216 507.6L1212.2 504L1208.5 500.4"/><path fill="url(#o62)" d="M1228.2 194.7L1212 503.8L1208.3 500.2L1204.6 496.4L1201.1 492.6"/><path fill="url(#o63)" d="M1228.2 194.7L1204.4 496.2L1200.9 492.4L1197.5 488.6L1194.1 484.8"/><path fill="url(#o64)" d="M1228.2 194.7L1197.3 488.4L1194 484.6L1190.7 480.9L1187.5 477.1"/><path fill="url(#o65)" d="M1228.2 194.7L1190.5 480.6L1187.3 476.9L1184.3 473.2L1181.2 469.6"/><path fill="url(#o66)" d="M1228.2 194.7L1184.1 473L1181.1 469.3L1178.1 465.7L1175.3 462.1"/><path fill="url(#o67)" d="M1228.2 194.7L1178 465.5L1175.1 461.9L1172.3 458.3L1169.6 454.8"/><path fill="url(#o68)" d="M1228.2 194.7L1172.2 458.1L1169.5 454.6L1166.8 451.1L1164.2 447.6"/><path fill="url(#o69)" d="M1228.2 194.7L1166.7 450.9L1164.1 447.4L1161.6 444L1159.1 440.6"/><path fill="url(#o70)" d="M1228.2 194.7L1161.4 443.8L1159 440.4L1156.5 437.1L1154.2 433.8"/><path fill="url(#o71)" d="M1228.2 194.7L1156.4 436.9L1154.1 433.6L1151.8 430.4L1149.5 427.2"/><path fill="url(#o72)" d="M1228.2 194.7L1151.6 430.2L1149.4 427L1147.2 423.9L1145.1 420.7"/><path fill="url(#o73)" d="M1228.2 194.7L1147.1 423.7L1144.9 420.6L1142.8 417.5L1140.8 414.4"/><path fill="url(#o74)" d="M1228.2 194.7L1142.7 417.3L1140.7 414.2L1138.7 411.2L1136.7 408.2"/><path fill="url(#o75)" d="M1228.2 194.7L1138.5 411.1L1136.6 408.1L1134.7 405.1L1132.8 402.2"/><path fill="url(#o76)" d="M1228.2 194.7L1134.6 404.9L1132.7 402L1130.8 399.2L1129 396.3"/><path fill="url(#o77)" d="M1228.2 194.7L1130.7 399L1128.9 396.2L1127.1 393.4L1125.4 390.6"/><path fill="url(#o78)" d="M1228.2 194.7L1127 393.2L1125.3 390.4L1123.6 387.7L1121.9 385"/><path fill="url(#o79)" d="M1228.2 194.7L1123.5 387.5L1121.8 384.8L1120.1 382.2L1118.5 379.5"/><path fill="url(#o80)" d="M1228.2 194.7L1120 382L1118.4 379.3L1116.8 376.7L1115.2 374.1"/><path fill="url(#o81)" d="M1228.2 194.7L1116.7 376.6L1115.1 374L1113.6 371.5L1112.1 368.9"/><path fill="url(#o82)" d="M1228.2 194.7L1113.5 371.3L1112 368.8L1110.5 366.2L1109 363.7"/><path fill="url(#o83)" d="M1228.2 194.7L1110.4 366.1L1108.9 363.6L1107.4 361.1L1106 358.7"/><path fill="url(#o84)" d="M1228.2 194.7L1107.4 361L1105.9 358.6L1104.5 356.1L1103.1 353.7"/><path fill="url(#o85)" d="M1228.2 194.7L1104.4 356L1103 353.6L1101.6 351.2L1100.2 348.9"/><path fill="url(#o86)" d="M1228.2 194.7L1101.5 351.1L1100.2 348.7L1098.8 346.4L1097.5 344.1"/><path fill="url(#o87)" d="M1228.2 194.7L1098.7 346.3L1097.4 343.9L1096.1 341.6L1094.8 339.3"/><path fill="url(#o88)" d="M1228.2 194.7L1096 341.5L1094.7 339.2L1093.4 336.9L1092.1 334.7"/><path fill="url(#o89)" d="M1228.2 194.7L1093.3 336.8L1092 334.5L1090.8 332.3L1089.5 330.1"/><path fill="url(#o90)" d="M1228.2 194.7L1090.7 332.2L1089.4 330L1088.2 327.7L1087 325.5"/><path fill="url(#o91)" d="M1228.2 194.7L1088.1 327.6L1086.9 325.4L1085.7 323.2L1084.5 321"/><path fill="url(#o92)" d="M1228.2 194.7L1085.6 323.1L1084.4 320.9L1083.2 318.7L1082.1 316.5"/><path fill="url(#o93)" d="M1228.2 194.7L1083.2 318.6L1082 316.4L1080.8 314.2L1079.6 312.1"/><path fill="url(#o94)" d="M1228.2 194.7L1080.7 314.1L1079.6 311.9L1078.5 309.8L1077.3 307.6"/><path fill="url(#o95)" d="M1228.2 194.7L1078.4 309.6L1077.3 307.5L1076.2 305.3L1075 303.2"/><path fill="url(#o96)" d="M1228.2 194.7L1076.1 305.2L1075 303.1L1073.9 300.9L1072.8 298.8"/><path fill="url(#o97)" d="M1228.2 194.7L1073.8 300.8L1072.7 298.7L1071.6 296.5L1070.6 294.4"/><path fill="url(#o98)" d="M1228.2 194.7L1071.6 296.4L1070.5 294.3L1069.5 292.1L1068.4 290"/><path fill="url(#o99)" d="M1228.2 194.7L1069.4 292L1068.4 289.9L1067.3 287.7L1066.3 285.6"/><path fill="url(#o100)" d="M1228.2 194.7L1067.3 287.6L1066.3 285.5L1065.2 283.3L1064.2 281.2"/><path fill="url(#o101)" d="M1228.2 194.7L1065.2 283.2L1064.2 281.1L1063.2 278.9L1062.2 276.8"/><path fill="url(#o102)" d="M1228.2 194.7L1063.1 278.8L1062.2 276.7L1061.2 274.5L1060.2 272.4"/><path fill="url(#o103)" d="M1228.2 194.7L1061.1 274.4L1060.1 272.3L1059.2 270.1L1058.2 268"/><path fill="url(#o104)" d="M1228.2 194.7L1059.1 270L1058.1 267.8L1057.2 265.7L1056.3 263.5"/><path fill="url(#o105)" d="M1228.2 194.7L1057.1 265.6L1056.2 263.4L1055.3 261.2L1054.3 259.1"/><path fill="url(#o106)" d="M1228.2 194.7L1055.2 261.1L1054.3 259L1053.3 256.8L1052.4 254.6"/><path fill="url(#o107)" d="M1228.2 194.7L1053.3 256.7L1052.3 254.5L1051.4 252.3L1050.5 250.1"/><path fill="url(#o108)" d="M1228.2 194.7L1051.4 252.2L1050.4 250L1049.5 247.8L1048.6 245.6"/><path fill="url(#o109)" d="M1228.2 194.7L1049.5 247.7L1048.5 245.5L1047.6 243.2L1046.7 241"/><path fill="url(#o110)" d="M1228.2 194.7L1047.6 243.1L1046.7 240.9L1045.8 238.7L1044.9 236.4"/><path fill="url(#o111)" d="M1228.2 194.7L1045.7 238.5L1044.8 236.3L1043.9 234L1043 231.8"/><path fill="url(#o112)" d="M1228.2 194.7L1043.9 233.9L1043 231.6L1042.1 229.4L1041.2 227.1"/><path fill="url(#o113)" d="M1228.2 194.7L1042 229.2L1041.1 226.9L1040.3 224.6L1039.4 222.3"/><path fill="url(#o114)" d="M1228.2 194.7L1040.2 224.5L1039.4 222.2L1038.5 219.8L1037.6 217.5"/><path fill="url(#o115)" d="M1228.2 194.7L1038.5 219.7L1037.6 217.4L1036.7 215L1035.9 212.6"/><path fill="url(#o116)" d="M1228.2 194.7L1036.7 214.9L1035.9 212.5L1035 210.1L1034.2 207.7"/><path fill="url(#o117)" d="M1228.2 194.7L1035 209.9L1034.1 207.5L1033.3 205.1L1032.5 202.6"/><path fill="url(#o118)" d="M1228.2 194.7L1033.2 204.9L1032.4 202.5L1031.6 200L1030.8 197.5"/><path fill="url(#o119)" d="M1228.2 194.7L1031.6 199.9L1030.7 197.4L1029.9 194.9L1029.1 192.3"/><path fill="url(#o120)" d="M1228.2 194.7L1029.9 194.7L1029.1 192.2L1028.3 189.6L1027.6 187.1"/><path fill="url(#o121)" d="M1228.2 194.7L1028.3 189.5L1027.5 186.9L1026.7 184.3L1026 181.7"/><path fill="url(#o122)" d="M1228.2 194.7L1026.7 184.2L1026 181.5L1025.3 178.9L1024.6 176.2"/><path fill="url(#o123)" d="M1228.2 194.7L1025.2 178.8L1024.5 176.1L1023.8 173.4L1023.2 170.7"/><path fill="url(#o124)" d="M1228.2 194.7L1023.8 173.2L1023.2 170.5L1022.5 167.8L1021.9 165.1"/><path fill="url(#o125)" d="M1228.2 194.7L1022.5 167.7L1021.9 164.9L1021.3 162.1L1020.8 159.3"/><path fill="url(#o126)" d="M1228.2 194.7L1021.3 162L1020.7 159.2L1020.2 156.3L1019.8 153.5"/><path fill="url(#o127)" d="M1228.2 194.7L1020.2 156.2L1019.7 153.3L1019.3 150.5L1019 147.6"/><path fill="url(#o128)" d="M1228.2 194.7L1019.3 150.3L1019 147.5L1018.6 144.6L1018.5 141.7"/><path fill="url(#o129)" d="M1228.2 194.7L1018.6 144.4L1018.5 141.5L1018.3 138.7L1018.3 135.8"/><path fill="url(#o130)" d="M1228.2 194.7L1018.3 138.5L1018.3 135.6L1018.3 132.7L1018.5 129.9"/><path fill="url(#o131)" d="M1228.2 194.7L1018.3 132.6L1018.5 129.7L1018.8 126.9L1019.3 124.1"/><path fill="url(#o132)" d="M1228.2 194.7L1018.9 126.7L1019.3 123.9L1020 121.2L1020.8 118.5"/><path fill="url(#o133)" d="M1228.2 194.7L1020 121L1020.9 118.3L1021.9 115.7L1023.1 113.2"/><path fill="url(#o134)" d="M1228.2 194.7L1021.9 115.6L1023.2 113L1024.7 110.6L1026.6 108.4"/><path fill="url(#o135)" d="M1228.2 194.7L1024.8 110.5L1026.7 108.3L1028.8 106.1L1031.2 104.2"/><path fill="url(#o136)" d="M1228.2 194.7L1028.9 106L1031.4 104.1L1034.2 102.4L1037.5 101"/><path fill="url(#o137)" d="M1228.2 194.7L1034.4 102.3L1037.7 100.9L1041.3 99.7L1045.3 98.8"/><path fill="url(#o138)" d="M1228.2 194.7L1041.5 99.6L1045.5 98.7L1049.9 98.1L1054.4 97.7"/><path fill="url(#o139)" d="M1228.2 194.7L1050.2 98.1L1054.7 97.6L1059.2 97.3L1063.8 97.2"/><path fill="url(#o140)" d="M1228.2 194.7L1059.4 97.3L1064.1 97.2L1068.6 97.1L1073 97.1"/><path fill="url(#o141)" d="M1228.2 194.7L1068.8 97.1L1073.3 97.1L1077.6 97.1L1081.8 97.2"/><path fill="url(#o142)" d="M1228.2 194.7L1077.8 97.1L1082.1 97.2L1086.2 97.3L1090.2 97.4"/><path fill="url(#o143)" d="M1228.2 194.7L1086.4 97.3L1090.4 97.5L1094.3 97.6L1098.1 97.8"/><path fill="url(#o144)" d="M1228.2 194.7L1094.5 97.6L1098.3 97.8L1102 98.1L1105.5 98.3"/><path fill="url(#o145)" d="M1228.2 194.7L1102.2 98.1L1105.8 98.3L1109.2 98.5L1112.6 98.8"/><path fill="url(#o146)" d="M1228.2 194.7L1109.4 98.6L1112.7 98.8L1116 99.1L1119.1 99.3"/><path fill="url(#o147)" d="M1228.2 194.7L1116.2 99.1L1119.3 99.3L1122.3 99.6L1125.3 99.8"/><path fill="url(#o148)" d="M1228.2 194.7L1122.5 99.6L1125.4 99.8L1128.3 100.1L1131.1 100.3"/><path fill="url(#o149)" d="M1228.2 194.7L1128.4 100.1L1131.2 100.4L1133.9 100.6L1136.5 100.9"/><path fill="url(#o150)" d="M1228.2 194.7L1134.1 100.6L1136.7 100.9L1139.2 101.2L1141.7 101.4"/><path fill="url(#o151)" d="M1228.2 194.7L1139.4 101.2L1141.8 101.4L1144.2 101.7L1146.6 101.9"/><path fill="url(#o152)" d="M1228.2 194.7L1144.4 101.7L1146.7 101.9L1149 102.1L1151.2 102.4"/><path fill="url(#o153)" d="M1228.2 194.7L1149.1 102.2L1151.3 102.4L1153.5 102.6L1155.5 102.8"/><path fill="url(#o154)" d="M1228.2 194.7L1153.6 102.6L1155.7 102.8L1157.7 103L1159.7 103.3"/><path fill="url(#o155)" d="M1228.2 194.7L1157.8 103.1L1159.8 103.3L1161.8 103.5L1163.7 103.7"/><path fill="url(#o156)" d="M1228.2 194.7L1161.9 103.5L1163.8 103.7L1165.6 103.9L1167.4 104.1"/><path fill="url(#o157)" d="M1228.2 194.7L1165.7 103.9L1167.5 104.1L1169.3 104.3L1171.1 104.5"/><path fill="url(#o158)" d="M1228.2 194.7L1169.4 104.3L1171.2 104.5L1172.9 104.7L1174.5 104.8"/><path fill="url(#o159)" d="M1228.2 194.7L1173 104.7L1174.6 104.8L1176.3 105L1177.9 105.2"/><path fill="url(#o160)" d="M1228.2 194.7L1176.4 105L1178 105.2L1179.6 105.4L1181.1 105.5"/><path fill="url(#o161)" d="M1228.2 194.7L1179.6 105.4L1181.2 105.6L1182.7 105.7L1184.2 105.9"/><path fill="url(#o162)" d="M1228.2 194.7L1182.8 105.7L1184.3 105.9L1185.8 106.1L1187.2 106.2"/><path fill="url(#o163)" d="M1228.2 194.7L1185.9 106.1L1187.3 106.2L1188.7 106.4L1190.2 106.5"/><path fill="url(#o164)" d="M1228.2 194.7L1188.8 106.4L1190.2 106.5L1191.6 106.7L1193 106.9"/><path fill="url(#o165)" d="M1228.2 194.7L1191.7 106.7L1193.1 106.9L1194.4 107L1195.7 107.2"/><path fill="url(#o166)" d="M1228.2 194.7L1194.5 107L1195.8 107.2L1197.1 107.3L1198.4 107.5"/><path fill="url(#o167)" d="M1228.2 194.7L1197.2 107.3L1198.5 107.5L1199.8 107.6L1201.1 107.8"/><path fill="url(#o168)" d="M1228.2 194.7L1199.9 107.6L1201.1 107.8L1202.4 107.9L1203.6 108"/><path fill="url(#o169)" d="M1228.2 194.7L1202.4 107.9L1203.7 108.1L1204.9 108.2L1206.1 108.3"/><path fill="url(#o170)" d="M1228.2 194.7L1205 108.2L1206.2 108.3L1207.4 108.5L1208.6 108.6"/><path fill="url(#o171)" d="M1228.2 194.7L1207.5 108.5L1208.6 108.6L1209.8 108.7L1211 108.9"/><path fill="url(#o172)" d="M1228.2 194.7L1209.9 108.8L1211.1 108.9L1212.2 109L1213.4 109.2"/><path fill="url(#o173)" d="M1228.2 194.7L1212.3 109L1213.4 109.2L1214.6 109.3L1215.7 109.4"/><path fill="url(#o174)" d="M1228.2 194.7L1214.6 109.3L1215.8 109.4L1216.9 109.6L1218 109.7"/><path fill="url(#o175)" d="M1228.2 194.7L1216.9 109.6L1218.1 109.7L1219.2 109.8L1220.3 109.9"/><path fill="url(#o176)" d="M1228.2 194.7L1219.2 109.8L1220.3 109.9L1221.4 110.1L1222.5 110.2"/><path fill="url(#o177)" d="M1228.2 194.7L1221.5 110.1L1222.6 110.2L1223.7 110.3L1224.8 110.4"/><path fill="url(#o178)" d="M1228.2 194.7L1223.7 110.3L1224.8 110.5L1225.9 110.6L1227 110.7"/><path fill="url(#o179)" d="M1228.2 194.7L1226 110.6L1227 110.7L1228.1 110.8L1229.2 111"/><path fill="url(#o180)" d="M1228.2 194.7L1228.2 110.8L1229.2 111L1230.3 111.1L1231.3 111.2"/><path fill="url(#o181)" d="M1228.2 194.7L1230.3 111.1L1231.4 111.2L1232.5 111.3L1233.5 111.4"/><path fill="url(#o182)" d="M1228.2 194.7L1232.5 111.3L1233.6 111.5L1234.6 111.6L1235.7 111.7"/><path fill="url(#o183)" d="M1228.2 194.7L1234.7 111.6L1235.8 111.7L1236.8 111.8L1237.9 111.9"/><path fill="url(#o184)" d="M1228.2 194.7L1236.9 111.8L1237.9 112L1239 112.1L1240 112.2"/><path fill="url(#o185)" d="M1228.2 194.7L1239 112.1L1240.1 112.2L1241.1 112.3L1242.2 112.4"/><path fill="url(#o186)" d="M1228.2 194.7L1241.2 112.3L1242.3 112.4L1243.3 112.6L1244.4 112.7"/><path fill="url(#o187)" d="M1228.2 194.7L1243.4 112.6L1244.4 112.7L1245.5 112.8L1246.6 112.9"/><path fill="url(#o188)" d="M1228.2 194.7L1245.6 112.8L1246.6 112.9L1247.7 113.1L1248.8 113.2"/><path fill="url(#o189)" d="M1228.2 194.7L1247.8 113.1L1248.8 113.2L1249.9 113.3L1251 113.4"/><path fill="url(#o190)" d="M1228.2 194.7L1250 113.3L1251 113.5L1252.1 113.6L1253.2 113.7"/><path fill="url(#o191)" d="M1228.2 194.7L1252.2 113.6L1253.3 113.7L1254.4 113.8L1255.5 114"/><path fill="url(#o192)" d="M1228.2 194.7L1254.4 113.8L1255.5 114L1256.6 114.1L1257.8 114.2"/><path fill="url(#o193)" d="M1228.2 194.7L1256.7 114.1L1257.8 114.2L1258.9 114.4L1260.1 114.5"/><path fill="url(#o194)" d="M1228.2 194.7L1259 114.4L1260.1 114.5L1261.3 114.6L1262.4 114.8"/><path fill="url(#o195)" d="M1228.2 194.7L1261.3 114.6L1262.5 114.8L1263.6 114.9L1264.8 115"/><path fill="url(#o196)" d="M1228.2 194.7L1263.7 114.9L1264.9 115L1266 115.2L1267.2 115.3"/><path fill="url(#o197)" d="M1228.2 194.7L1266.1 115.2L1267.3 115.3L1268.5 115.5L1269.7 115.6"/><path fill="url(#o198)" d="M1228.2 194.7L1268.5 115.5L1269.7 115.6L1271 115.8L1272.2 115.9"/><path fill="url(#o199)" d="M1228.2 194.7L1271 115.8L1272.3 115.9L1273.5 116L1274.8 116.2"/><path fill="url(#o200)" d="M1228.2 194.7L1273.6 116.1L1274.8 116.2L1276.1 116.3L1277.4 116.5"/><path fill="url(#o201)" d="M1228.2 194.7L1276.2 116.4L1277.5 116.5L1278.8 116.7L1280.1 116.8"/><path fill="url(#o202)" d="M1228.2 194.7L1278.9 116.7L1280.2 116.8L1281.5 117L1282.9 117.1"/><path fill="url(#o203)" d="M1228.2 194.7L1281.6 117L1282.9 117.1L1284.3 117.3L1285.7 117.5"/><path fill="url(#o204)" d="M1228.2 194.7L1284.4 117.3L1285.8 117.5L1287.2 117.6L1288.7 117.8"/><path fill="url(#o205)" d="M1228.2 194.7L1287.3 117.6L1288.8 117.8L1290.2 118L1291.7 118.1"/><path fill="url(#o206)" d="M1228.2 194.7L1290.3 118L1291.8 118.2L1293.3 118.3L1294.8 118.5"/><path fill="url(#o207)" d="M1228.2 194.7L1293.4 118.3L1294.9 118.5L1296.5 118.7L1298.1 118.9"/><path fill="url(#o208)" d="M1228.2 194.7L1296.6 118.7L1298.2 118.9L1299.8 119.1L1301.5 119.3"/><path fill="url(#o209)" d="M1228.2 194.7L1299.9 119.1L1301.6 119.3L1303.3 119.5L1305 119.7"/><path fill="url(#o210)" d="M1228.2 194.7L1303.4 119.5L1305.1 119.7L1306.9 119.9L1308.7 120.1"/><path fill="url(#o211)" d="M1228.2 194.7L1307 119.9L1308.8 120.1L1310.7 120.3L1312.6 120.5"/><path fill="url(#o212)" d="M1228.2 194.7L1310.8 120.3L1312.7 120.6L1314.6 120.8L1316.6 121"/><path fill="url(#o213)" d="M1228.2 194.7L1314.7 120.8L1316.7 121L1318.7 121.3L1320.8 121.5"/><path fill="url(#o214)" d="M1228.2 194.7L1318.9 121.3L1321 121.5L1323.1 121.8L1325.3 122"/><path fill="url(#o215)" d="M1228.2 194.7L1323.2 121.8L1325.4 122L1327.7 122.3L1330 122.6"/><path fill="url(#o216)" d="M1228.2 194.7L1327.8 122.3L1330.2 122.6L1332.6 122.9L1335 123.1"/><path fill="url(#o217)" d="M1228.2 194.7L1332.7 122.9L1335.2 123.2L1337.7 123.4L1340.4 123.8"/><path fill="url(#o218)" d="M1228.2 194.7L1337.9 123.5L1340.5 123.8L1343.3 124.1L1346.1 124.4"/><path fill="url(#o219)" d="M1228.2 194.7L1343.4 124.1L1346.2 124.4L1349.1 124.8L1352.2 125.1"/><path fill="url(#o220)" d="M1228.2 194.7L1349.3 124.8L1352.3 125.1L1355.5 125.5L1358.7 125.9"/><path fill="url(#o221)" d="M1228.2 194.7L1355.6 125.5L1358.9 125.9L1362.3 126.3L1365.8 126.7"/><path fill="url(#o222)" d="M1228.2 194.7L1362.5 126.3L1366 126.7L1369.6 127.1L1373.4 127.6"/><path fill="url(#o223)" d="M1228.2 194.7L1369.8 127.1L1373.7 127.6L1377.6 128L1381.8 128.5"/><path fill="url(#o224)" d="M1228.2 194.7L1377.9 128.1L1382 128.6L1386.4 129.1L1390.9 129.6"/><path fill="url(#o225)" d="M1228.2 194.7L1386.6 129.1L1391.2 129.6L1396 130.2L1401 130.7"/><path fill="url(#o226)" d="M1228.2 194.7L1396.3 130.2L1401.3 130.8L1406.6 131.4L1412.2 132"/><path fill="url(#o227)" d="M1228.2 194.7L1406.9 131.4L1412.5 132.1L1418.4 132.8L1424.6 133.5"/><path fill="url(#o228)" d="M1228.2 194.7L1418.8 132.8L1425 133.5L1431.6 134.3L1438.7 135.1"/><path fill="url(#o229)" d="M1228.2 194.7L1432 134.3L1439.1 135.1L1446.6 136L1454.7 136.9"/><path fill="url(#o230)" d="M1228.2 194.7L1447.1 136.1L1455.1 137L1463.7 138L1473 139"/><path fill="url(#o231)" d="M1228.2 194.7L1464.3 138L1473.5 139.1L1483.5 140.3L1494.3 141.5"/><path fill="url(#o232)" d="M1228.2 194.7L1484.1 140.3L1494.9 141.6L1506.6 142.9L1519.3 144.4"/><path fill="url(#o233)" d="M1228.2 194.7L1507.3 143L1520.1 144.5L1534 146.1L1549.2 147.8"/><path fill="url(#o234)" d="M1228.2 194.7L1534.8 146.2L1550.1 147.9L1566.9 149.9L1585.6 152"/><path fill="url(#o235)" d="M1228.2 194.7L1568 150L1586.7 152.2L1607.7 154.6L1631 157.3"/><path fill="url(#o236)" d="M1228.2 194.7L1608.9 154.7L1632.5 157.4L1659.2 160.5L1681.8 164.5"/><path fill="url(#o237)" d="M1228.2 194.7L1660.8 160.7L1681.5 164.8L1675.5 171L1669.8 176.9"/><path fill="url(#o238)" d="M1228.2 194.7L1675.2 171.3L1669.4 177.2L1663.8 183L1658.4 188.6"/><path fill="url(#o239)" d="M1228.2 194.7L1663.5 183.3L1659.8 187.2L1656.1 191L1652.5 194.7"/></g><g clip-path="url(#ct)" shape-rendering="crispEdges"><path fill="url(#i0)" d="M1228.2 194.7L1454.4 194.7L1449.8 199.5L1445.3 204L1441 208.4"/><path fill="url(#i1)" d="M1228.2 194.7L1443.4 206L1439.2 210.3L1435.1 214.5L1431.2 218.5"/><path fill="url(#i2)" d="M1228.2 194.7L1433.3 216.3L1429.5 220.3L1425.7 224.1L1422.1 227.8"/><path fill="url(#i3)" d="M1228.2 194.7L1424.1 225.8L1420.5 229.4L1417 233L1413.6 236.5"/><path fill="url(#i4)" d="M1228.2 194.7L1415.5 234.5L1412.1 238L1408.9 241.3L1405.7 244.6"/><path fill="url(#i5)" d="M1228.2 194.7L1407.5 242.8L1404.3 246L1401.2 249.2L1398.2 252.2"/><path fill="url(#i6)" d="M1228.2 194.7L1399.9 250.5L1396.9 253.6L1393.9 256.6L1391.1 259.5"/><path fill="url(#i7)" d="M1228.2 194.7L1392.7 257.9L1389.8 260.8L1387 263.7L1384.3 266.5"/><path fill="url(#i8)" d="M1228.2 194.7L1385.8 264.9L1383.1 267.7L1380.4 270.5L1377.7 273.2"/><path fill="url(#i9)" d="M1228.2 194.7L1379.2 271.7L1376.5 274.4L1373.9 277.1L1371.3 279.7"/><path fill="url(#i10)" d="M1228.2 194.7L1372.8 278.2L1370.2 280.9L1367.7 283.5L1365.1 286"/><path fill="url(#i11)" d="M1228.2 194.7L1366.5 284.6L1364 287.2L1361.5 289.7L1359.1 292.3"/><path fill="url(#i12)" d="M1228.2 194.7L1360.4 290.8L1358 293.4L1355.5 295.9L1353.1 298.4"/><path fill="url(#i13)" d="M1228.2 194.7L1354.4 297L1352 299.5L1349.6 302L1347.1 304.5"/><path fill="url(#i14)" d="M1228.2 194.7L1348.5 303.1L1346.1 305.5L1343.6 308L1341.2 310.5"/><path fill="url(#i15)" d="M1228.2 194.7L1342.6 309.1L1340.1 311.6L1337.7 314.1L1335.3 316.6"/><path fill="url(#i16)" d="M1228.2 194.7L1336.6 315.2L1334.2 317.7L1331.7 320.2L1329.3 322.7"/><path fill="url(#i17)" d="M1228.2 194.7L1330.7 321.3L1328.2 323.8L1325.7 326.4L1323.2 328.9"/><path fill="url(#i18)" d="M1228.2 194.7L1324.6 327.5L1322.1 330L1319.6 332.6L1317 335.2"/><path fill="url(#i19)" d="M1228.2 194.7L1318.5 333.8L1315.9 336.4L1313.3 339L1310.7 341.7"/><path fill="url(#i20)" d="M1228.2 194.7L1312.2 340.2L1309.5 342.9L1306.9 345.6L1304.1 348.4"/><path fill="url(#i21)" d="M1228.2 194.7L1305.7 346.8L1302.9 349.6L1300.2 352.5L1297.4 355.3"/><path fill="url(#i22)" d="M1228.2 194.7L1298.9 353.7L1296.1 356.6L1293.2 359.6L1290.3 362.6"/><path fill="url(#i23)" d="M1228.2 194.7L1291.9 360.9L1289 363.9L1285.9 367L1282.8 370.2"/><path fill="url(#i24)" d="M1228.2 194.7L1284.6 368.4L1281.5 371.6L1278.3 374.9L1275 378.2"/><path fill="url(#i25)" d="M1228.2 194.7L1276.8 376.3L1273.5 379.7L1270.1 383.2L1266.6 386.8"/><path fill="url(#i26)" d="M1228.2 194.7L1268.6 384.8L1265 388.4L1261.3 392.2L1257.6 396"/><path fill="url(#i27)" d="M1228.2 194.7L1259.7 393.9L1255.9 397.8L1251.9 401.8L1247.8 406"/><path fill="url(#i28)" d="M1228.2 194.7L1250.1 403.6L1246 407.9L1241.6 412.3L1237.1 416.9"/><path fill="url(#i29)" d="M1228.2 194.7L1239.7 414.3L1235.1 419L1230.3 423.9L1225.3 429"/><path fill="url(#i30)" d="M1228.2 194.7L1228.2 426.1L1223.1 431.3L1217.8 436.7L1212.2 442.4"/><path fill="url(#i31)" d="M1228.2 194.7L1215.3 439.2L1209.6 445L1203.9 448.6L1200.7 428.8"/><path fill="url(#i32)" d="M1228.2 194.7L1202.4 439.5L1199.4 421.1L1196.9 405.1L1194.6 391.2"/><path fill="url(#i33)" d="M1228.2 194.7L1195.8 398.7L1193.7 385.6L1191.8 373.9L1190.2 363.5"/><path fill="url(#i34)" d="M1228.2 194.7L1191.1 369.2L1189.5 359.3L1188 350.4L1186.7 342.3"/><path fill="url(#i35)" d="M1228.2 194.7L1187.4 346.7L1186.2 338.9L1185 331.8L1184 325.3"/><path fill="url(#i36)" d="M1228.2 194.7L1184.6 328.9L1183.5 322.6L1182.6 316.8L1181.7 311.4"/><path fill="url(#i37)" d="M1228.2 194.7L1182.2 314.4L1181.4 309.2L1180.6 304.3L1179.9 299.8"/><path fill="url(#i38)" d="M1228.2 194.7L1180.3 302.3L1179.6 297.9L1178.9 293.7L1178.3 289.8"/><path fill="url(#i39)" d="M1228.2 194.7L1178.6 292L1178 288.2L1177.4 284.6L1176.9 281.2"/><path fill="url(#i40)" d="M1228.2 194.7L1177.2 283.1L1176.6 279.7L1176.1 276.6L1175.6 273.5"/><path fill="url(#i41)" d="M1228.2 194.7L1175.9 275.2L1175.4 272.3L1175 269.4L1174.5 266.7"/><path fill="url(#i42)" d="M1228.2 194.7L1174.8 268.2L1174.3 265.6L1173.9 263L1173.5 260.6"/><path fill="url(#i43)" d="M1228.2 194.7L1173.7 261.9L1173.4 259.5L1173 257.2L1172.6 254.9"/><path fill="url(#i44)" d="M1228.2 194.7L1172.8 256.2L1172.5 254L1172.1 251.8L1171.8 249.8"/><path fill="url(#i45)" d="M1228.2 194.7L1172 250.9L1171.6 248.9L1171.3 246.9L1171 245"/><path fill="url(#i46)" d="M1228.2 194.7L1171.2 246L1170.9 244.1L1170.6 242.3L1170.3 240.5"/><path fill="url(#i47)" d="M1228.2 194.7L1170.4 241.5L1170.2 239.7L1169.9 237.9L1169.6 236.2"/><path fill="url(#i48)" d="M1228.2 194.7L1169.7 237.2L1169.5 235.5L1169.2 233.8L1168.9 232.2"/><path fill="url(#i49)" d="M1228.2 194.7L1169.1 233.1L1168.8 231.5L1168.6 229.9L1168.3 228.3"/><path fill="url(#i50)" d="M1228.2 194.7L1168.5 229.2L1168.2 227.6L1168 226.1L1167.7 224.6"/><path fill="url(#i51)" d="M1228.2 194.7L1167.9 225.5L1167.6 224L1167.4 222.5L1167.1 221"/><path fill="url(#i52)" d="M1228.2 194.7L1167.3 221.8L1167 220.4L1166.8 218.9L1166.6 217.5"/><path fill="url(#i53)" d="M1228.2 194.7L1166.7 218.3L1166.5 216.9L1166.2 215.5L1166 214.1"/><path fill="url(#i54)" d="M1228.2 194.7L1166.1 214.9L1165.9 213.5L1165.7 212.1L1165.5 210.7"/><path fill="url(#i55)" d="M1228.2 194.7L1165.6 211.5L1165.4 210.1L1165.2 208.7L1164.9 207.4"/><path fill="url(#i56)" d="M1228.2 194.7L1165.1 208.1L1164.8 206.8L1164.6 205.4L1164.4 204"/><path fill="url(#i57)" d="M1228.2 194.7L1164.5 204.8L1164.3 203.4L1164.1 202.1L1163.9 200.7"/><path fill="url(#i58)" d="M1228.2 194.7L1164 201.5L1163.8 200.1L1163.5 198.7L1163.3 197.3"/><path fill="url(#i59)" d="M1228.2 194.7L1163.4 198.1L1163.2 196.7L1163 195.3L1162.8 193.9"/><path fill="url(#i60)" d="M1228.2 194.7L1162.9 194.7L1162.7 193.3L1162.4 191.9L1162.2 190.5"/><path fill="url(#i61)" d="M1228.2 194.7L1162.3 191.3L1162.1 189.8L1161.9 188.4L1161.6 186.9"/><path fill="url(#i62)" d="M1228.2 194.7L1161.8 187.7L1161.5 186.3L1161.3 184.8L1161 183.3"/><path fill="url(#i63)" d="M1228.2 194.7L1161.2 184.1L1160.9 182.6L1160.7 181L1160.4 179.5"/><path fill="url(#i64)" d="M1228.2 194.7L1160.6 180.4L1160.3 178.8L1160.1 177.2L1159.8 175.5"/><path fill="url(#i65)" d="M1228.2 194.7L1159.9 176.4L1159.7 174.8L1159.4 173.1L1159.1 171.4"/><path fill="url(#i66)" d="M1228.2 194.7L1159.3 172.3L1159 170.6L1158.7 168.8L1158.4 167"/><path fill="url(#i67)" d="M1228.2 194.7L1158.6 168L1158.3 166.2L1158 164.3L1157.7 162.3"/><path fill="url(#i68)" d="M1228.2 194.7L1157.8 163.4L1157.5 161.4L1157.2 159.4L1156.9 157.3"/><path fill="url(#i69)" d="M1228.2 194.7L1157 158.5L1156.7 156.4L1156.3 154.2L1156 151.9"/><path fill="url(#i70)" d="M1228.2 194.7L1156.2 153.2L1155.8 150.9L1155.4 148.5L1155 146"/><path fill="url(#i71)" d="M1228.2 194.7L1155.2 147.4L1154.8 144.8L1154.4 142.2L1154 139.4"/><path fill="url(#i72)" d="M1228.2 194.7L1154.2 141L1153.8 138.2L1153.3 135.3L1152.8 132.2"/><path fill="url(#i73)" d="M1228.2 194.7L1153.1 133.9L1152.6 130.8L1152 127.5L1151.5 124"/><path fill="url(#i74)" d="M1228.2 194.7L1151.8 126L1151.2 122.4L1150.6 118.6L1152.6 117.3"/><path fill="url(#i75)" d="M1228.2 194.7L1150.5 117.1L1154.1 117.4L1157.5 117.8L1160.8 118.1"/><path fill="url(#i76)" d="M1228.2 194.7L1159 117.9L1162.2 118.2L1165.2 118.5L1168.1 118.7"/><path fill="url(#i77)" d="M1228.2 194.7L1166.5 118.6L1169.4 118.9L1172.1 119.1L1174.8 119.4"/><path fill="url(#i78)" d="M1228.2 194.7L1173.3 119.2L1175.9 119.5L1178.4 119.7L1180.9 119.9"/><path fill="url(#i79)" d="M1228.2 194.7L1179.5 119.8L1181.9 120L1184.2 120.3L1186.5 120.5"/><path fill="url(#i80)" d="M1228.2 194.7L1185.2 120.3L1187.4 120.6L1189.6 120.8L1191.7 121"/><path fill="url(#i81)" d="M1228.2 194.7L1190.5 120.8L1192.6 121L1194.6 121.2L1196.6 121.4"/><path fill="url(#i82)" d="M1228.2 194.7L1195.5 121.3L1197.4 121.5L1199.3 121.7L1201.2 121.8"/><path fill="url(#i83)" d="M1228.2 194.7L1200.1 121.7L1202 121.9L1203.8 122.1L1205.6 122.3"/><path fill="url(#i84)" d="M1228.2 194.7L1204.6 122.2L1206.3 122.3L1208.1 122.5L1209.8 122.6"/><path fill="url(#i85)" d="M1228.2 194.7L1208.8 122.6L1210.5 122.7L1212.2 122.9L1213.8 123"/><path fill="url(#i86)" d="M1228.2 194.7L1212.9 122.9L1214.5 123.1L1216.1 123.2L1217.7 123.4"/><path fill="url(#i87)" d="M1228.2 194.7L1216.8 123.3L1218.4 123.5L1220 123.6L1221.6 123.8"/><path fill="url(#i88)" d="M1228.2 194.7L1220.7 123.7L1222.2 123.8L1223.8 124L1225.3 124.1"/><path fill="url(#i89)" d="M1228.2 194.7L1224.5 124L1226 124.2L1227.5 124.3L1229 124.5"/><path fill="url(#i90)" d="M1228.2 194.7L1228.2 124.4L1229.7 124.5L1231.2 124.7L1232.7 124.8"/><path fill="url(#i91)" d="M1228.2 194.7L1231.8 124.7L1233.3 124.9L1234.8 125L1236.3 125.1"/><path fill="url(#i92)" d="M1228.2 194.7L1235.5 125.1L1237 125.2L1238.5 125.3L1240 125.5"/><path fill="url(#i93)" d="M1228.2 194.7L1239.1 125.4L1240.6 125.5L1242.2 125.7L1243.7 125.8"/><path fill="url(#i94)" d="M1228.2 194.7L1242.8 125.7L1244.3 125.9L1245.9 126L1247.4 126.2"/><path fill="url(#i95)" d="M1228.2 194.7L1246.5 126.1L1248.1 126.2L1249.6 126.4L1251.2 126.5"/><path fill="url(#i96)" d="M1228.2 194.7L1250.3 126.5L1251.9 126.6L1253.5 126.8L1255.1 126.9"/><path fill="url(#i97)" d="M1228.2 194.7L1254.2 126.8L1255.8 127L1257.5 127.1L1259.2 127.3"/><path fill="url(#i98)" d="M1228.2 194.7L1258.2 127.2L1259.9 127.4L1261.6 127.5L1263.3 127.7"/><path fill="url(#i99)" d="M1228.2 194.7L1262.4 127.6L1264.1 127.7L1265.9 127.9L1267.7 128.1"/><path fill="url(#i100)" d="M1228.2 194.7L1266.7 128L1268.5 128.2L1270.4 128.3L1272.3 128.5"/><path fill="url(#i101)" d="M1228.2 194.7L1271.2 128.4L1273.2 128.6L1275.1 128.8L1277.1 129"/><path fill="url(#i102)" d="M1228.2 194.7L1276 128.9L1278.1 129.1L1280.2 129.3L1282.3 129.5"/><path fill="url(#i103)" d="M1228.2 194.7L1281.1 129.3L1283.3 129.5L1285.6 129.8L1287.9 130"/><path fill="url(#i104)" d="M1228.2 194.7L1286.6 129.9L1288.9 130.1L1291.4 130.3L1293.9 130.5"/><path fill="url(#i105)" d="M1228.2 194.7L1292.5 130.4L1295 130.6L1297.7 130.9L1300.5 131.2"/><path fill="url(#i106)" d="M1228.2 194.7L1298.9 131L1301.7 131.3L1304.7 131.6L1307.8 131.8"/><path fill="url(#i107)" d="M1228.2 194.7L1306 131.7L1309.1 132L1312.4 132.3L1315.9 132.6"/><path fill="url(#i108)" d="M1228.2 194.7L1313.9 132.4L1317.4 132.7L1321.1 133.1L1325 133.5"/><path fill="url(#i109)" d="M1228.2 194.7L1322.8 133.3L1326.8 133.6L1331 134L1335.5 134.4"/><path fill="url(#i110)" d="M1228.2 194.7L1333 134.2L1337.6 134.6L1342.5 135.1L1347.7 135.6"/><path fill="url(#i111)" d="M1228.2 194.7L1344.8 135.3L1350.2 135.8L1356 136.4L1362.2 136.9"/><path fill="url(#i112)" d="M1228.2 194.7L1358.7 136.6L1365.2 137.2L1372.2 137.9L1379.8 138.6"/><path fill="url(#i113)" d="M1228.2 194.7L1375.4 138.2L1383.4 138.9L1392.1 139.7L1401.7 140.6"/><path fill="url(#i114)" d="M1228.2 194.7L1396.2 140.1L1406.2 141.1L1417.3 142.1L1429.8 143.3"/><path fill="url(#i115)" d="M1228.2 194.7L1422.6 142.6L1435.8 143.8L1450.6 145.2L1467.6 146.8"/><path fill="url(#i116)" d="M1228.2 194.7L1457.8 145.9L1475.9 147.6L1496.8 149.6L1492.2 156.2"/><path fill="url(#i117)" d="M1228.2 194.7L1495.9 152.3L1489.3 159.1L1483 165.5L1477.1 171.6"/><path fill="url(#i118)" d="M1228.2 194.7L1480.4 168.2L1474.5 174.2L1469 179.8L1463.7 185.2"/><path fill="url(#i119)" d="M1228.2 194.7L1466.7 182.2L1462.4 186.5L1458.4 190.7L1454.4 194.7"/></g></g><rect x="1142.8" y="110.8" width="13.4" height="13.4" fill="none" stroke="#fff" stroke-opacity=".92" stroke-width="1.7"/><rect x="1166.6" y="134.7" width="13.4" height="13.4" fill="none" stroke="#fff" stroke-opacity=".92" stroke-width="1.7"/><rect x="1206.8" y="126.7" width="13.4" height="13.4" fill="none" stroke="#fff" stroke-opacity=".92" stroke-width="1.7"/><rect x="1226.9" y="118.7" width="13.4" height="13.4" fill="none" stroke="#fff" stroke-opacity=".92" stroke-width="1.7"/><rect x="1253.6" y="122.8" width="13.4" height="13.4" fill="none" stroke="#fff" stroke-opacity=".92" stroke-width="1.7"/><rect x="1285.7" y="129.6" width="13.4" height="13.4" fill="none" stroke="#fff" stroke-opacity=".92" stroke-width="1.7"/><rect x="1328.3" y="133.9" width="13.4" height="13.4" fill="none" stroke="#fff" stroke-opacity=".92" stroke-width="1.7"/><rect x="1203.6" y="148.7" width="13.4" height="13.4" fill="none" stroke="#fff" stroke-opacity=".92" stroke-width="1.7"/><rect x="1268.7" y="162.7" width="13.4" height="13.4" fill="none" stroke="#fff" stroke-opacity=".92" stroke-width="1.7"/><rect x="1257.6" y="168.8" width="13.4" height="13.4" fill="none" stroke="#fff" stroke-opacity=".92" stroke-width="1.7"/><rect x="1173.7" y="179.7" width="13.4" height="13.4" fill="none" stroke="#fff" stroke-opacity=".92" stroke-width="1.7"/><rect x="1157.6" y="198.7" width="13.4" height="13.4" fill="none" stroke="#fff" stroke-opacity=".92" stroke-width="1.7"/><rect x="1162.9" y="230.7" width="13.4" height="13.4" fill="none" stroke="#fff" stroke-opacity=".92" stroke-width="1.7"/><rect x="1196.7" y="227.5" width="13.4" height="13.4" fill="none" stroke="#fff" stroke-opacity=".92" stroke-width="1.7"/><rect x="1217.1" y="232.8" width="13.4" height="13.4" fill="none" stroke="#fff" stroke-opacity=".92" stroke-width="1.7"/><rect x="1252.6" y="250.8" width="13.4" height="13.4" fill="none" stroke="#fff" stroke-opacity=".92" stroke-width="1.7"/><rect x="1315.3" y="221.7" width="13.4" height="13.4" fill="none" stroke="#fff" stroke-opacity=".92" stroke-width="1.7"/><rect x="1199.9" y="280.7" width="13.4" height="13.4" fill="none" stroke="#fff" stroke-opacity=".92" stroke-width="1.7"/><rect x="1199.9" y="330.8" width="13.4" height="13.4" fill="none" stroke="#fff" stroke-opacity=".92" stroke-width="1.7"/><rect x="1334.3" y="300.8" width="13.4" height="13.4" fill="none" stroke="#fff" stroke-opacity=".92" stroke-width="1.7"/><rect x="1348.3" y="176.3" width="13.4" height="13.4" fill="none" stroke="#fff" stroke-opacity=".92" stroke-width="1.7"/><rect x="1408.3" y="164.3" width="13.4" height="13.4" fill="none" stroke="#fff" stroke-opacity=".92" stroke-width="1.7"/><rect x="1489.3" y="143.3" width="13.4" height="13.4" fill="none" stroke="#fff" stroke-opacity=".92" stroke-width="1.7"/><rect x="1196.3" y="443.3" width="13.4" height="13.4" fill="none" stroke="#fff" stroke-opacity=".92" stroke-width="1.7"/><rect x="1220.2" y="188" width="12.6" height="12.6" fill="none" stroke="#000" stroke-width="2.5"/><circle cx="1129.9" cy="108" r="4.1" fill="#1aff1a" stroke="#000" stroke-width="1.2"/><circle cx="1158.5" cy="134.7" r="4.1" fill="#4c8c4c" stroke="#000" stroke-width="1.2"/><circle cx="1209" cy="125.2" r="4.1" fill="#9aac4a" stroke="#000" stroke-width="1.2"/><circle cx="1265.9" cy="123.1" r="4.1" fill="#e8b830" stroke="#000" stroke-width="1.2"/><circle cx="1303" cy="129.2" r="4.1" fill="#e0a040" stroke="#000" stroke-width="1.2"/><circle cx="1355" cy="136" r="4.1" fill="#e07830" stroke="#000" stroke-width="1.2"/><circle cx="1206.4" cy="149.8" r="4.1" fill="#586838" stroke="#000" stroke-width="1.2"/><circle cx="1271.2" cy="167.3" r="4.1" fill="#6a4c40" stroke="#000" stroke-width="1.2"/><circle cx="1260.9" cy="174.4" r="4.1" fill="#c09880" stroke="#000" stroke-width="1.2"/><circle cx="1169.3" cy="186.9" r="4.1" fill="#70a898" stroke="#000" stroke-width="1.2"/><circle cx="1222.5" cy="194" r="4.1" fill="#bbb" stroke="#000" stroke-width="1.2"/><circle cx="1223.8" cy="194.8" r="4.1" fill="#999" stroke="#000" stroke-width="1.2"/><circle cx="1225" cy="195.8" r="4.1" fill="#a0a0a0" stroke="#000" stroke-width="1.2"/><circle cx="1148.9" cy="207" r="4.1" fill="#10f0f0" stroke="#000" stroke-width="1.2"/><circle cx="1218.3" cy="227.4" r="4.1" fill="#000" stroke="#000" stroke-width="1.2"/><circle cx="1155.8" cy="240.9" r="4.1" fill="#087890" stroke="#000" stroke-width="1.2"/><circle cx="1195.5" cy="238.2" r="4.1" fill="#6080a8" stroke="#000" stroke-width="1.2"/><circle cx="1221.2" cy="242.4" r="4.1" fill="#8480a8" stroke="#000" stroke-width="1.2"/><circle cx="1261.9" cy="262.8" r="4.1" fill="#5c3c64" stroke="#000" stroke-width="1.2"/><circle cx="1331" cy="231.3" r="4.1" fill="#b05890" stroke="#000" stroke-width="1.2"/><circle cx="1197.9" cy="294.6" r="4.1" fill="#4c60a8" stroke="#000" stroke-width="1.2"/><circle cx="1198" cy="343" r="4.1" fill="#3040a0" stroke="#000" stroke-width="1.2"/><circle cx="1195.4" cy="434.6" r="3.7" fill="#0a0af4" stroke="#000a48" stroke-width="1.2"/><circle cx="1365.5" cy="182" r="4.1" fill="#c05060" stroke="#000" stroke-width="1.2"/><circle cx="1447" cy="169" r="4.1" fill="#b83838" stroke="#000" stroke-width="1.2"/><circle cx="1529" cy="148.5" r="3.8" fill="#f41010" stroke="#3a0000" stroke-width="1.2"/><circle cx="1342" cy="307.5" r="4.1" fill="#f010f0" stroke="#000" stroke-width="1.2"/><circle cx="1234.7" cy="118.8" r="4.1" fill="#f4e020" stroke="#000" stroke-width="1.2"/><rect x="1016.8" y="88.3" width="638.8" height="491.2" fill="none" stroke="#9c9c9c" stroke-width="1.4"/><path d="M1016.8 579.5V585.8" stroke="#ddd" stroke-width="1.2"/><path d="M1011.8 579.5H1016.8" stroke="#ddd" stroke-width="1.2"/><path d="M1070.02 579.5V585.8" stroke="#ddd" stroke-width="1.2"/><path d="M1011.8 538.6H1016.8" stroke="#ddd" stroke-width="1.2"/><path d="M1123.25 579.5V585.8" stroke="#ddd" stroke-width="1.2"/><path d="M1011.8 497.69H1016.8" stroke="#ddd" stroke-width="1.2"/><path d="M1176.47 579.5V585.8" stroke="#ddd" stroke-width="1.2"/><path d="M1011.8 456.78H1016.8" stroke="#ddd" stroke-width="1.2"/><path d="M1229.7 579.5V585.8" stroke="#ddd" stroke-width="1.2"/><path d="M1011.8 415.88H1016.8" stroke="#ddd" stroke-width="1.2"/><path d="M1282.92 579.5V585.8" stroke="#ddd" stroke-width="1.2"/><path d="M1011.8 374.98H1016.8" stroke="#ddd" stroke-width="1.2"/><path d="M1336.15 579.5V585.8" stroke="#ddd" stroke-width="1.2"/><path d="M1011.8 334.07H1016.8" stroke="#ddd" stroke-width="1.2"/><path d="M1389.38 579.5V585.8" stroke="#ddd" stroke-width="1.2"/><path d="M1011.8 293.16H1016.8" stroke="#ddd" stroke-width="1.2"/><path d="M1442.6 579.5V585.8" stroke="#ddd" stroke-width="1.2"/><path d="M1011.8 252.26H1016.8" stroke="#ddd" stroke-width="1.2"/><path d="M1495.83 579.5V585.8" stroke="#ddd" stroke-width="1.2"/><path d="M1011.8 211.35H1016.8" stroke="#ddd" stroke-width="1.2"/><path d="M1549.05 579.5V585.8" stroke="#ddd" stroke-width="1.2"/><path d="M1011.8 170.45H1016.8" stroke="#ddd" stroke-width="1.2"/><path d="M1602.28 579.5V585.8" stroke="#ddd" stroke-width="1.2"/><path d="M1011.8 129.54H1016.8" stroke="#ddd" stroke-width="1.2"/><defs><linearGradient id="in1" gradientUnits="userSpaceOnUse" x1="1446" y1="420" x2="1639.44" y2="562.08"><stop offset="0" stop-color="#a4ff00"/><stop offset=".477" stop-color="#ffff10"/><stop offset=".8" stop-color="#ffc400"/><stop offset="1" stop-color="#ffa000"/></linearGradient><linearGradient id="in2" gradientUnits="userSpaceOnUse" x1="1446" y1="420" x2="1639.44" y2="562.08"><stop offset="0" stop-color="#609800"/><stop offset=".477" stop-color="#969600"/><stop offset="1" stop-color="#965800"/></linearGradient><clipPath id="ci"><rect x="1452" y="407" width="198" height="130.5"/></clipPath></defs><rect x="1449" y="404" width="204" height="137" fill="#222"/><g clip-path="url(#ci)"><rect x="1452" y="407" width="198" height="131" fill="url(#in1)"/><path d="M1452 407H1650V523.4L1452 421.4Z" fill="url(#in2)"/><rect x="1543.6" y="464.7" width="13.4" height="13.4" fill="none" stroke="#fff" stroke-opacity=".9" stroke-width="1.6"/><rect x="1634.5" y="532.5" width="14" height="14" fill="none" stroke="#fff" stroke-opacity=".9" stroke-width="1.6"/><circle cx="1599.5" cy="417.6" r="4" fill="#ffee10" stroke="#000" stroke-width="1.2"/></g><rect x="1452" y="407" width="198" height="130.5" fill="none" stroke="#8c8c8c" stroke-width="1.3"/><rect x="1401.5" y="547.6" width="251.5" height="27.6" fill="#333"/></svg><span class="t" style="left:1401.5px;top:552.72px;font-size:18.4px;color:#f2f2f2;transform:scaleX(1.069);">RGB Triplet: 255, 255, 0</span><span class="t" style="left:1012.85px;top:589.58px;font-size:14.2px;color:#ddd;">0</span><span class="t" style="left:1002.41px;top:574.38px;font-size:14.2px;color:#ddd;">0</span><span class="t" style="left:1056.21px;top:589.58px;font-size:14.2px;color:#ddd;">0,05</span><span class="t" style="left:982.67px;top:531.67px;font-size:14.2px;color:#ddd;">0,05</span><span class="t" style="left:1113.38px;top:589.58px;font-size:14.2px;color:#ddd;">0,1</span><span class="t" style="left:990.57px;top:490.77px;font-size:14.2px;color:#ddd;">0,1</span><span class="t" style="left:1162.66px;top:589.58px;font-size:14.2px;color:#ddd;">0,15</span><span class="t" style="left:982.67px;top:449.86px;font-size:14.2px;color:#ddd;">0,15</span><span class="t" style="left:1219.83px;top:589.58px;font-size:14.2px;color:#ddd;">0,2</span><span class="t" style="left:990.57px;top:408.96px;font-size:14.2px;color:#ddd;">0,2</span><span class="t" style="left:1269.11px;top:589.58px;font-size:14.2px;color:#ddd;">0,25</span><span class="t" style="left:982.67px;top:368.05px;font-size:14.2px;color:#ddd;">0,25</span><span class="t" style="left:1326.28px;top:589.58px;font-size:14.2px;color:#ddd;">0,3</span><span class="t" style="left:990.57px;top:327.15px;font-size:14.2px;color:#ddd;">0,3</span><span class="t" style="left:1375.56px;top:589.58px;font-size:14.2px;color:#ddd;">0,35</span><span class="t" style="left:982.67px;top:286.24px;font-size:14.2px;color:#ddd;">0,35</span><span class="t" style="left:1432.73px;top:589.58px;font-size:14.2px;color:#ddd;">0,4</span><span class="t" style="left:990.57px;top:245.34px;font-size:14.2px;color:#ddd;">0,4</span><span class="t" style="left:1482.01px;top:589.58px;font-size:14.2px;color:#ddd;">0,45</span><span class="t" style="left:982.67px;top:204.43px;font-size:14.2px;color:#ddd;">0,45</span><span class="t" style="left:1539.18px;top:589.58px;font-size:14.2px;color:#ddd;">0,5</span><span class="t" style="left:990.57px;top:163.53px;font-size:14.2px;color:#ddd;">0,5</span><span class="t" style="left:1588.46px;top:589.58px;font-size:14.2px;color:#ddd;">0,55</span><span class="t" style="left:982.67px;top:122.62px;font-size:14.2px;color:#ddd;">0,55</span><div style="left:319.5px;top:628.6px;width:1350px;height:226.9px;background:#1a1a1a"></div><div style="left:321.5px;top:630.5px;width:1346px;height:27.5px;background:linear-gradient(#303030 0,#2e2e2e 50%,#191919 54%,#121212 100%)"></div><div style="left:321.5px;top:657.9px;width:1346px;height:25.85px;background:#424242"></div><div style="left:321.5px;top:683.75px;width:1346px;height:25.85px;background:#818181"></div><div style="left:321.5px;top:709.6px;width:1346px;height:25.85px;background:#424242"></div><div style="left:321.5px;top:735.45px;width:1346px;height:25.85px;background:#818181"></div><div style="left:321.5px;top:761.3px;width:1346px;height:25.85px;background:#424242"></div><div style="left:321.5px;top:787.15px;width:1346px;height:25.85px;background:#818181"></div><div style="left:321.5px;top:813px;width:1346px;height:25.85px;background:#424242"></div><span class="t" style="left:502.5px;top:638.14px;font-size:14.6px;color:#f0f0f0;transform:scaleX(1.254);">White</span><span class="t" style="left:583.2px;top:638.14px;font-size:14.6px;color:#f0f0f0;transform:scaleX(1.171);">Gray 80</span><span class="t" style="left:671.4px;top:638.14px;font-size:14.6px;color:#f0f0f0;transform:scaleX(1.163);">Gray 65</span><span class="t" style="left:759.45px;top:638.14px;font-size:14.6px;color:#f0f0f0;transform:scaleX(1.165);">Gray 50</span><span class="t" style="left:847.3px;top:638.14px;font-size:14.6px;color:#f0f0f0;transform:scaleX(1.163);">Gray 35</span><span class="t" style="left:935px;top:638.14px;font-size:14.6px;color:#f0f0f0;transform:scaleX(1.138);">Black</span><span class="t" style="left:994.4px;top:638.14px;font-size:14.6px;color:#f0f0f0;transform:scaleX(1.154);">Dark Skin</span><span class="t" style="left:1079.3px;top:638.14px;font-size:14.6px;color:#f0f0f0;transform:scaleX(1.170);">Light Skin</span><span class="t" style="left:1172px;top:638.14px;font-size:14.6px;color:#f0f0f0;transform:scaleX(1.146);">Blue Sky</span><span class="t" style="left:1259.75px;top:638.14px;font-size:14.6px;color:#f0f0f0;transform:scaleX(1.163);">Foliage</span><span class="t" style="left:1331.4px;top:638.14px;font-size:14.6px;color:#f0f0f0;transform:scaleX(1.209);">Blue Flower</span><span class="t" style="left:1434.75px;top:638.14px;font-size:14.6px;color:#f0f0f0;transform:scaleX(1.191);">Bluish Green</span><span class="t" style="left:1556.1px;top:638.14px;font-size:14.6px;color:#f0f0f0;transform:scaleX(1.179);">Orange</span><span class="t" style="left:1634px;top:638.14px;font-size:14.6px;color:#f0f0f0;transform:scaleX(1.221);">Purplish Blue</span><span class="t" style="left:335.8px;top:663.86px;font-size:15.4px;color:#f4f4f4;font-weight:700;transform:scaleX(1.177);">x: CIE31</span><span class="t" style="left:487.2px;top:663.95px;font-size:15.3px;color:#f4f4f4;transform:scaleX(1.201);">0,3088</span><span class="t" style="left:574.9px;top:663.95px;font-size:15.3px;color:#f4f4f4;transform:scaleX(1.201);">0,3085</span><span class="t" style="left:662.7px;top:663.95px;font-size:15.3px;color:#f4f4f4;transform:scaleX(1.201);">0,3090</span><span class="t" style="left:750.8px;top:663.95px;font-size:15.3px;color:#f4f4f4;transform:scaleX(1.201);">0,3088</span><span class="t" style="left:839px;top:663.95px;font-size:15.3px;color:#f4f4f4;transform:scaleX(1.201);">0,3091</span><span class="t" style="left:926.7px;top:663.95px;font-size:15.3px;color:#f4f4f4;transform:scaleX(1.201);">0,2715</span><span class="t" style="left:993.6px;top:663.95px;font-size:15.3px;color:#f4f4f4;transform:scaleX(1.201);">0,3992</span><span class="t" style="left:1078.5px;top:663.95px;font-size:15.3px;color:#f4f4f4;transform:scaleX(1.201);">0,3767</span><span class="t" style="left:1166.3px;top:663.95px;font-size:15.3px;color:#f4f4f4;transform:scaleX(1.201);">0,2382</span><span class="t" style="left:1253.8px;top:663.95px;font-size:15.3px;color:#f4f4f4;transform:scaleX(1.201);">0,3394</span><span class="t" style="left:1331.5px;top:663.95px;font-size:15.3px;color:#f4f4f4;transform:scaleX(1.201);">0,2624</span><span class="t" style="left:1435px;top:663.95px;font-size:15.3px;color:#f4f4f4;transform:scaleX(1.201);">0,2472</span><span class="t" style="left:1546px;top:663.95px;font-size:15.3px;color:#f4f4f4;transform:scaleX(1.201);">0,5413</span><span class="t" style="left:1634px;top:663.95px;font-size:15.3px;color:#f4f4f4;transform:scaleX(1.201);">0,2062</span><span class="t" style="left:335.8px;top:689.71px;font-size:15.4px;color:#f4f4f4;font-weight:700;transform:scaleX(1.177);">y: CIE31</span><span class="t" style="left:487.2px;top:689.8px;font-size:15.3px;color:#f4f4f4;transform:scaleX(1.201);">0,3286</span><span class="t" style="left:574.9px;top:689.8px;font-size:15.3px;color:#f4f4f4;transform:scaleX(1.201);">0,3279</span><span class="t" style="left:662.7px;top:689.8px;font-size:15.3px;color:#f4f4f4;transform:scaleX(1.201);">0,3280</span><span class="t" style="left:750.8px;top:689.8px;font-size:15.3px;color:#f4f4f4;transform:scaleX(1.201);">0,3280</span><span class="t" style="left:839px;top:689.8px;font-size:15.3px;color:#f4f4f4;transform:scaleX(1.201);">0,3279</span><span class="t" style="left:926.7px;top:689.8px;font-size:15.3px;color:#f4f4f4;transform:scaleX(1.201);">0,2719</span><span class="t" style="left:993.6px;top:689.8px;font-size:15.3px;color:#f4f4f4;transform:scaleX(1.201);">0,3712</span><span class="t" style="left:1078.5px;top:689.8px;font-size:15.3px;color:#f4f4f4;transform:scaleX(1.201);">0,3596</span><span class="t" style="left:1166.3px;top:689.8px;font-size:15.3px;color:#f4f4f4;transform:scaleX(1.201);">0,2613</span><span class="t" style="left:1253.8px;top:689.8px;font-size:15.3px;color:#f4f4f4;transform:scaleX(1.201);">0,4436</span><span class="t" style="left:1331.5px;top:689.8px;font-size:15.3px;color:#f4f4f4;transform:scaleX(1.201);">0,2493</span><span class="t" style="left:1435px;top:689.8px;font-size:15.3px;color:#f4f4f4;transform:scaleX(1.201);">0,3656</span><span class="t" style="left:1546px;top:689.8px;font-size:15.3px;color:#f4f4f4;transform:scaleX(1.201);">0,4097</span><span class="t" style="left:1634px;top:689.8px;font-size:15.3px;color:#f4f4f4;transform:scaleX(1.201);">0,1826</span><span class="t" style="left:335.8px;top:715.56px;font-size:15.4px;color:#f4f4f4;font-weight:700;transform:scaleX(1.218);">Y</span><span class="t" style="left:487.2px;top:715.65px;font-size:15.3px;color:#f4f4f4;transform:scaleX(1.210);">570,5245</span><span class="t" style="left:574.9px;top:715.65px;font-size:15.3px;color:#f4f4f4;transform:scaleX(1.210);">448,3045</span><span class="t" style="left:662.7px;top:715.65px;font-size:15.3px;color:#f4f4f4;transform:scaleX(1.210);">362,2133</span><span class="t" style="left:750.8px;top:715.65px;font-size:15.3px;color:#f4f4f4;transform:scaleX(1.210);">276,0224</span><span class="t" style="left:839px;top:715.65px;font-size:15.3px;color:#f4f4f4;transform:scaleX(1.210);">194,7364</span><span class="t" style="left:926.7px;top:715.65px;font-size:15.3px;color:#f4f4f4;transform:scaleX(1.201);">0,5760</span><span class="t" style="left:993.6px;top:715.65px;font-size:15.3px;color:#f4f4f4;transform:scaleX(1.212);">55,8988</span><span class="t" style="left:1078.5px;top:715.65px;font-size:15.3px;color:#f4f4f4;transform:scaleX(1.210);">197,9860</span><span class="t" style="left:1166.3px;top:715.65px;font-size:15.3px;color:#f4f4f4;transform:scaleX(1.210);">106,8723</span><span class="t" style="left:1253.8px;top:715.65px;font-size:15.3px;color:#f4f4f4;transform:scaleX(1.212);">71,7605</span><span class="t" style="left:1331.5px;top:715.65px;font-size:15.3px;color:#f4f4f4;transform:scaleX(1.210);">134,7469</span><span class="t" style="left:1435px;top:715.65px;font-size:15.3px;color:#f4f4f4;transform:scaleX(1.210);">231,6462</span><span class="t" style="left:1546px;top:715.65px;font-size:15.3px;color:#f4f4f4;transform:scaleX(1.210);">160,4556</span><span class="t" style="left:1634px;top:715.65px;font-size:15.3px;color:#f4f4f4;transform:scaleX(1.212);">67,5123</span><span class="t" style="left:335.8px;top:741.41px;font-size:15.4px;color:#f4f4f4;font-weight:700;transform:scaleX(1.214);">Target x:CIE31</span><span class="t" style="left:487.2px;top:741.5px;font-size:15.3px;color:#f4f4f4;transform:scaleX(1.201);">0,3127</span><span class="t" style="left:574.9px;top:741.5px;font-size:15.3px;color:#f4f4f4;transform:scaleX(1.201);">0,3127</span><span class="t" style="left:662.7px;top:741.5px;font-size:15.3px;color:#f4f4f4;transform:scaleX(1.201);">0,3127</span><span class="t" style="left:750.8px;top:741.5px;font-size:15.3px;color:#f4f4f4;transform:scaleX(1.201);">0,3127</span><span class="t" style="left:839px;top:741.5px;font-size:15.3px;color:#f4f4f4;transform:scaleX(1.201);">0,3127</span><span class="t" style="left:926.7px;top:741.5px;font-size:15.3px;color:#f4f4f4;transform:scaleX(1.201);">0,3127</span><span class="t" style="left:993.6px;top:741.5px;font-size:15.3px;color:#f4f4f4;transform:scaleX(1.201);">0,4003</span><span class="t" style="left:1078.5px;top:741.5px;font-size:15.3px;color:#f4f4f4;transform:scaleX(1.201);">0,3795</span><span class="t" style="left:1166.3px;top:741.5px;font-size:15.3px;color:#f4f4f4;transform:scaleX(1.201);">0,2496</span><span class="t" style="left:1253.8px;top:741.5px;font-size:15.3px;color:#f4f4f4;transform:scaleX(1.201);">0,3395</span><span class="t" style="left:1331.5px;top:741.5px;font-size:15.3px;color:#f4f4f4;transform:scaleX(1.201);">0,2681</span><span class="t" style="left:1435px;top:741.5px;font-size:15.3px;color:#f4f4f4;transform:scaleX(1.201);">0,2626</span><span class="t" style="left:1546px;top:741.5px;font-size:15.3px;color:#f4f4f4;transform:scaleX(1.201);">0,5122</span><span class="t" style="left:1634px;top:741.5px;font-size:15.3px;color:#f4f4f4;transform:scaleX(1.201);">0,2130</span><span class="t" style="left:335.8px;top:767.26px;font-size:15.4px;color:#f4f4f4;font-weight:700;transform:scaleX(1.214);">Target y:CIE31</span><span class="t" style="left:487.2px;top:767.35px;font-size:15.3px;color:#f4f4f4;transform:scaleX(1.201);">0,3290</span><span class="t" style="left:574.9px;top:767.35px;font-size:15.3px;color:#f4f4f4;transform:scaleX(1.201);">0,3290</span><span class="t" style="left:662.7px;top:767.35px;font-size:15.3px;color:#f4f4f4;transform:scaleX(1.201);">0,3290</span><span class="t" style="left:750.8px;top:767.35px;font-size:15.3px;color:#f4f4f4;transform:scaleX(1.201);">0,3290</span><span class="t" style="left:839px;top:767.35px;font-size:15.3px;color:#f4f4f4;transform:scaleX(1.201);">0,3290</span><span class="t" style="left:926.7px;top:767.35px;font-size:15.3px;color:#f4f4f4;transform:scaleX(1.201);">0,3290</span><span class="t" style="left:993.6px;top:767.35px;font-size:15.3px;color:#f4f4f4;transform:scaleX(1.201);">0,3642</span><span class="t" style="left:1078.5px;top:767.35px;font-size:15.3px;color:#f4f4f4;transform:scaleX(1.201);">0,3562</span><span class="t" style="left:1166.3px;top:767.35px;font-size:15.3px;color:#f4f4f4;transform:scaleX(1.201);">0,2656</span><span class="t" style="left:1253.8px;top:767.35px;font-size:15.3px;color:#f4f4f4;transform:scaleX(1.201);">0,4271</span><span class="t" style="left:1331.5px;top:767.35px;font-size:15.3px;color:#f4f4f4;transform:scaleX(1.201);">0,2525</span><span class="t" style="left:1435px;top:767.35px;font-size:15.3px;color:#f4f4f4;transform:scaleX(1.201);">0,3616</span><span class="t" style="left:1546px;top:767.35px;font-size:15.3px;color:#f4f4f4;transform:scaleX(1.201);">0,4063</span><span class="t" style="left:1634px;top:767.35px;font-size:15.3px;color:#f4f4f4;transform:scaleX(1.201);">0,1904</span><span class="t" style="left:335.8px;top:793.11px;font-size:15.4px;color:#f4f4f4;font-weight:700;transform:scaleX(1.246);">Target Y</span><span class="t" style="left:487.2px;top:793.2px;font-size:15.3px;color:#f4f4f4;transform:scaleX(1.210);">570,5245</span><span class="t" style="left:574.9px;top:793.2px;font-size:15.3px;color:#f4f4f4;transform:scaleX(1.210);">451,4549</span><span class="t" style="left:662.7px;top:793.2px;font-size:15.3px;color:#f4f4f4;transform:scaleX(1.210);">363,7646</span><span class="t" style="left:750.8px;top:793.2px;font-size:15.3px;color:#f4f4f4;transform:scaleX(1.210);">280,1394</span><span class="t" style="left:839px;top:793.2px;font-size:15.3px;color:#f4f4f4;transform:scaleX(1.210);">195,0706</span><span class="t" style="left:926.7px;top:793.2px;font-size:15.3px;color:#f4f4f4;transform:scaleX(1.201);">0,0000</span><span class="t" style="left:993.6px;top:793.2px;font-size:15.3px;color:#f4f4f4;transform:scaleX(1.212);">57,4707</span><span class="t" style="left:1078.5px;top:793.2px;font-size:15.3px;color:#f4f4f4;transform:scaleX(1.210);">199,0854</span><span class="t" style="left:1166.3px;top:793.2px;font-size:15.3px;color:#f4f4f4;transform:scaleX(1.210);">106,6789</span><span class="t" style="left:1253.8px;top:793.2px;font-size:15.3px;color:#f4f4f4;transform:scaleX(1.212);">74,3533</span><span class="t" style="left:1331.5px;top:793.2px;font-size:15.3px;color:#f4f4f4;transform:scaleX(1.210);">133,0377</span><span class="t" style="left:1435px;top:793.2px;font-size:15.3px;color:#f4f4f4;transform:scaleX(1.210);">238,8958</span><span class="t" style="left:1546px;top:793.2px;font-size:15.3px;color:#f4f4f4;transform:scaleX(1.210);">161,7313</span><span class="t" style="left:1634px;top:793.2px;font-size:15.3px;color:#f4f4f4;transform:scaleX(1.212);">67,0361</span><span class="t" style="left:335.8px;top:818.96px;font-size:15.4px;color:#f4f4f4;font-weight:700;transform:scaleX(1.245);">ΔE 2000</span><span class="t" style="left:487.2px;top:819.05px;font-size:15.3px;color:#f4f4f4;transform:scaleX(1.201);">2,7791</span><span class="t" style="left:574.9px;top:819.05px;font-size:15.3px;color:#f4f4f4;transform:scaleX(1.201);">2,4733</span><span class="t" style="left:662.7px;top:819.05px;font-size:15.3px;color:#f4f4f4;transform:scaleX(1.201);">2,0093</span><span class="t" style="left:750.8px;top:819.05px;font-size:15.3px;color:#f4f4f4;transform:scaleX(1.201);">1,9931</span><span class="t" style="left:839px;top:819.05px;font-size:15.3px;color:#f4f4f4;transform:scaleX(1.201);">1,5669</span><span class="t" style="left:926.7px;top:819.05px;font-size:15.3px;color:#f4f4f4;transform:scaleX(1.201);">1,0290</span><span class="t" style="left:993.6px;top:819.05px;font-size:15.3px;color:#f4f4f4;transform:scaleX(1.201);">2,1599</span><span class="t" style="left:1078.5px;top:819.05px;font-size:15.3px;color:#f4f4f4;transform:scaleX(1.201);">1,9436</span><span class="t" style="left:1166.3px;top:819.05px;font-size:15.3px;color:#f4f4f4;transform:scaleX(1.201);">3,1735</span><span class="t" style="left:1253.8px;top:819.05px;font-size:15.3px;color:#f4f4f4;transform:scaleX(1.201);">1,9352</span><span class="t" style="left:1331.5px;top:819.05px;font-size:15.3px;color:#f4f4f4;transform:scaleX(1.201);">1,6529</span><span class="t" style="left:1435px;top:819.05px;font-size:15.3px;color:#f4f4f4;transform:scaleX(1.262);">3,1117</span><span class="t" style="left:1546px;top:819.05px;font-size:15.3px;color:#f4f4f4;transform:scaleX(1.201);">3,1041</span><span class="t" style="left:1634px;top:819.05px;font-size:15.3px;color:#f4f4f4;transform:scaleX(1.201);">2,6318</span><div style="left:321.5px;top:838.9px;width:1346px;height:14.6px;background:#676767"></div><div style="left:342px;top:840.2px;width:583px;height:12px;background:#424242;border-radius:6px"></div><div style="left:322.5px;top:839.8px;width:13.5px;height:13px;background:#8a8a8a;border-radius:2px"></div><div style="left:1646.5px;top:839.8px;width:13.5px;height:13px;background:#8a8a8a;border-radius:2px"></div><svg style="left:325px;top:841px" width="9" height="11" viewBox="0 0 9 11"><path d="M8 0.5V10.5L1 5.5Z" fill="#333"/></svg><svg style="left:1649.5px;top:841px" width="9" height="11" viewBox="0 0 9 11"><path d="M1 0.5V10.5L8 5.5Z" fill="#333"/></svg><div style="left:1665px;top:628.6px;width:2px;height:226.9px;background:#161616"></div><div style="left:0px;top:929px;width:1264px;height:16px;background:#5e5e5e"></div><div style="left:-34.54px;top:867.8px;width:62.2px;height:60.4px;background:linear-gradient(#8e8e8e,#5c5c5c);border-radius:4px;box-shadow:0 0 0 1px #2b2b2b"></div><div style="left:-27.94px;top:874.4px;width:49.4px;height:14.6px;background:rgb(132,128,180);border-radius:4.5px;box-shadow:inset 0 1px 1.5px rgba(0,0,0,.45)"></div><span class="t" style="left:-23.94px;top:897.63px;font-size:12.6px;color:#2a2a2a;transform:scaleX(1.071);-webkit-text-stroke:0.7px #2a2a2a;">Blue</span><span class="t" style="left:-23.94px;top:912.83px;font-size:12.6px;color:#2a2a2a;transform:scaleX(1.085);-webkit-text-stroke:0.7px #2a2a2a;">Flower</span><div style="left:30.5px;top:867.8px;width:62.2px;height:60.4px;background:linear-gradient(#8e8e8e,#5c5c5c);border-radius:4px;box-shadow:0 0 0 1px #2b2b2b"></div><div style="left:37.1px;top:874.4px;width:49.4px;height:14.6px;background:rgb(100,192,172);border-radius:4.5px;box-shadow:inset 0 1px 1.5px rgba(0,0,0,.45)"></div><span class="t" style="left:43.1px;top:897.63px;font-size:12.6px;color:#2a2a2a;transform:scaleX(1.078);-webkit-text-stroke:0.7px #2a2a2a;">Bluish</span><span class="t" style="left:43.1px;top:912.83px;font-size:12.6px;color:#2a2a2a;transform:scaleX(1.057);-webkit-text-stroke:0.7px #2a2a2a;">Green</span><div style="left:95.54px;top:867.8px;width:62.2px;height:60.4px;background:linear-gradient(#8e8e8e,#5c5c5c);border-radius:4px;box-shadow:0 0 0 1px #2b2b2b"></div><div style="left:102.14px;top:874.4px;width:49.4px;height:29.6px;background:rgb(222,126,44);border-radius:4.5px;box-shadow:inset 0 1px 1.5px rgba(0,0,0,.45)"></div><span class="t" style="left:104.14px;top:912.83px;font-size:12.6px;color:#2a2a2a;transform:scaleX(1.071);-webkit-text-stroke:0.7px #2a2a2a;">Orange</span><div style="left:160.58px;top:867.8px;width:62.2px;height:60.4px;background:linear-gradient(#8e8e8e,#5c5c5c);border-radius:4px;box-shadow:0 0 0 1px #2b2b2b"></div><div style="left:167.18px;top:874.4px;width:49.4px;height:14.6px;background:rgb(72,92,170);border-radius:4.5px;box-shadow:inset 0 1px 1.5px rgba(0,0,0,.45)"></div><span class="t" style="left:166.18px;top:897.63px;font-size:12.6px;color:#2a2a2a;transform:scaleX(1.121);-webkit-text-stroke:0.7px #2a2a2a;">Purplish</span><span class="t" style="left:166.18px;top:912.83px;font-size:12.6px;color:#2a2a2a;transform:scaleX(1.071);-webkit-text-stroke:0.7px #2a2a2a;">Blue</span><div style="left:225.62px;top:867.8px;width:62.2px;height:60.4px;background:linear-gradient(#8e8e8e,#5c5c5c);border-radius:4px;box-shadow:0 0 0 1px #2b2b2b"></div><div style="left:232.22px;top:874.4px;width:49.4px;height:14.6px;background:rgb(198,84,98);border-radius:4.5px;box-shadow:inset 0 1px 1.5px rgba(0,0,0,.45)"></div><span class="t" style="left:226.72px;top:897.63px;font-size:12.6px;color:#2a2a2a;transform:scaleX(1.127);-webkit-text-stroke:0.7px #2a2a2a;">Moderate</span><span class="t" style="left:226.72px;top:912.83px;font-size:12.6px;color:#2a2a2a;transform:scaleX(0.995);-webkit-text-stroke:0.7px #2a2a2a;">Red</span><div style="left:290.66px;top:867.8px;width:62.2px;height:60.4px;background:linear-gradient(#8e8e8e,#5c5c5c);border-radius:4px;box-shadow:0 0 0 1px #2b2b2b"></div><div style="left:297.26px;top:874.4px;width:49.4px;height:29.6px;background:rgb(92,60,110);border-radius:4.5px;box-shadow:inset 0 1px 1.5px rgba(0,0,0,.45)"></div><span class="t" style="left:301.26px;top:912.83px;font-size:12.6px;color:#2a2a2a;transform:scaleX(1.126);-webkit-text-stroke:0.7px #2a2a2a;">Purple</span><div style="left:355.7px;top:867.8px;width:62.2px;height:60.4px;background:linear-gradient(#8e8e8e,#5c5c5c);border-radius:4px;box-shadow:0 0 0 1px #2b2b2b"></div><div style="left:362.3px;top:874.4px;width:49.4px;height:14.6px;background:rgb(160,190,62);border-radius:4.5px;box-shadow:inset 0 1px 1.5px rgba(0,0,0,.45)"></div><span class="t" style="left:366.8px;top:897.63px;font-size:12.6px;color:#2a2a2a;transform:scaleX(1.113);-webkit-text-stroke:0.7px #2a2a2a;">Yellow</span><span class="t" style="left:366.8px;top:912.83px;font-size:12.6px;color:#2a2a2a;transform:scaleX(1.057);-webkit-text-stroke:0.7px #2a2a2a;">Green</span><div style="left:420.74px;top:867.8px;width:62.2px;height:60.4px;background:linear-gradient(#8e8e8e,#5c5c5c);border-radius:4px;box-shadow:0 0 0 1px #2b2b2b"></div><div style="left:427.34px;top:874.4px;width:49.4px;height:14.6px;background:rgb(232,164,44);border-radius:4.5px;box-shadow:inset 0 1px 1.5px rgba(0,0,0,.45)"></div><span class="t" style="left:429.34px;top:897.63px;font-size:12.6px;color:#2a2a2a;transform:scaleX(1.071);-webkit-text-stroke:0.7px #2a2a2a;">Orange</span><span class="t" style="left:429.34px;top:912.83px;font-size:12.6px;color:#2a2a2a;transform:scaleX(1.113);-webkit-text-stroke:0.7px #2a2a2a;">Yellow</span><div style="left:485.78px;top:867.8px;width:62.2px;height:60.4px;background:linear-gradient(#8e8e8e,#5c5c5c);border-radius:4px;box-shadow:0 0 0 1px #2b2b2b"></div><div style="left:492.38px;top:874.4px;width:49.4px;height:29.6px;background:rgb(40,60,152);border-radius:4.5px;box-shadow:inset 0 1px 1.5px rgba(0,0,0,.45)"></div><span class="t" style="left:503.38px;top:912.83px;font-size:12.6px;color:#2a2a2a;transform:scaleX(1.071);-webkit-text-stroke:0.7px #2a2a2a;">Blue</span><div style="left:550.82px;top:867.8px;width:62.2px;height:60.4px;background:linear-gradient(#8e8e8e,#5c5c5c);border-radius:4px;box-shadow:0 0 0 1px #2b2b2b"></div><div style="left:557.42px;top:874.4px;width:49.4px;height:29.6px;background:rgb(70,150,72);border-radius:4.5px;box-shadow:inset 0 1px 1.5px rgba(0,0,0,.45)"></div><span class="t" style="left:563.42px;top:912.83px;font-size:12.6px;color:#2a2a2a;transform:scaleX(1.057);-webkit-text-stroke:0.7px #2a2a2a;">Green</span><div style="left:615.86px;top:867.8px;width:62.2px;height:60.4px;background:linear-gradient(#8e8e8e,#5c5c5c);border-radius:4px;box-shadow:0 0 0 1px #2b2b2b"></div><div style="left:622.46px;top:874.4px;width:49.4px;height:29.6px;background:rgb(180,48,58);border-radius:4.5px;box-shadow:inset 0 1px 1.5px rgba(0,0,0,.45)"></div><span class="t" style="left:635.46px;top:912.83px;font-size:12.6px;color:#2a2a2a;transform:scaleX(0.995);-webkit-text-stroke:0.7px #2a2a2a;">Red</span><div style="left:680.9px;top:867.8px;width:62.2px;height:60.4px;background:linear-gradient(#8e8e8e,#5c5c5c);border-radius:4px;box-shadow:0 0 0 1px #2b2b2b"></div><div style="left:687.5px;top:874.4px;width:49.4px;height:29.6px;background:rgb(238,200,30);border-radius:4.5px;box-shadow:inset 0 1px 1.5px rgba(0,0,0,.45)"></div><span class="t" style="left:692px;top:912.83px;font-size:12.6px;color:#2a2a2a;transform:scaleX(1.113);-webkit-text-stroke:0.7px #2a2a2a;">Yellow</span><div style="left:745.94px;top:867.8px;width:62.2px;height:60.4px;background:linear-gradient(#8e8e8e,#5c5c5c);border-radius:4px;box-shadow:0 0 0 1px #2b2b2b"></div><div style="left:752.54px;top:874.4px;width:49.4px;height:29.6px;background:rgb(190,84,150);border-radius:4.5px;box-shadow:inset 0 1px 1.5px rgba(0,0,0,.45)"></div><span class="t" style="left:749.04px;top:912.83px;font-size:12.6px;color:#2a2a2a;transform:scaleX(1.142);-webkit-text-stroke:0.7px #2a2a2a;">Magenta</span><div style="left:810.98px;top:867.8px;width:62.2px;height:60.4px;background:linear-gradient(#8e8e8e,#5c5c5c);border-radius:4px;box-shadow:0 0 0 1px #2b2b2b"></div><div style="left:817.58px;top:874.4px;width:49.4px;height:29.6px;background:rgb(0,136,168);border-radius:4.5px;box-shadow:inset 0 1px 1.5px rgba(0,0,0,.45)"></div><span class="t" style="left:827.08px;top:912.83px;font-size:12.6px;color:#2a2a2a;transform:scaleX(1.020);-webkit-text-stroke:0.7px #2a2a2a;">Cyan</span><div style="left:876.02px;top:867.8px;width:62.2px;height:60.4px;background:linear-gradient(#8e8e8e,#5c5c5c);border-radius:4px;box-shadow:0 0 0 1px #2b2b2b"></div><div style="left:882.62px;top:874.4px;width:49.4px;height:29.6px;background:rgb(255,0,0);border-radius:4.5px;box-shadow:inset 0 1px 1.5px rgba(0,0,0,.45)"></div><span class="t" style="left:877.37px;top:912.83px;font-size:12.6px;color:#2a2a2a;transform:scaleX(1.012);-webkit-text-stroke:0.7px #2a2a2a;">100% Red</span><div style="left:941.06px;top:867.8px;width:62.2px;height:60.4px;background:linear-gradient(#8e8e8e,#5c5c5c);border-radius:4px;box-shadow:0 0 0 1px #2b2b2b"></div><div style="left:947.66px;top:874.4px;width:49.4px;height:14.6px;background:rgb(0,255,0);border-radius:4.5px;box-shadow:inset 0 1px 1.5px rgba(0,0,0,.45)"></div><span class="t" style="left:953.66px;top:897.63px;font-size:12.6px;color:#2a2a2a;transform:scaleX(1.024);-webkit-text-stroke:0.7px #2a2a2a;">100%</span><span class="t" style="left:953.66px;top:912.83px;font-size:12.6px;color:#2a2a2a;transform:scaleX(1.057);-webkit-text-stroke:0.7px #2a2a2a;">Green</span><div style="left:1006.1px;top:867.8px;width:62.2px;height:60.4px;background:linear-gradient(#8e8e8e,#5c5c5c);border-radius:4px;box-shadow:0 0 0 1px #2b2b2b"></div><div style="left:1012.7px;top:874.4px;width:49.4px;height:14.6px;background:rgb(0,0,255);border-radius:4.5px;box-shadow:inset 0 1px 1.5px rgba(0,0,0,.45)"></div><span class="t" style="left:1020.7px;top:897.63px;font-size:12.6px;color:#2a2a2a;transform:scaleX(1.024);-webkit-text-stroke:0.7px #2a2a2a;">100%</span><span class="t" style="left:1020.7px;top:912.83px;font-size:12.6px;color:#2a2a2a;transform:scaleX(1.071);-webkit-text-stroke:0.7px #2a2a2a;">Blue</span><div style="left:1071.14px;top:867.8px;width:62.2px;height:60.4px;background:linear-gradient(#8e8e8e,#5c5c5c);border-radius:4px;box-shadow:0 0 0 1px #2b2b2b"></div><div style="left:1077.74px;top:874.4px;width:49.4px;height:14.6px;background:rgb(0,255,255);border-radius:4.5px;box-shadow:inset 0 1px 1.5px rgba(0,0,0,.45)"></div><span class="t" style="left:1085.74px;top:897.63px;font-size:12.6px;color:#2a2a2a;transform:scaleX(1.024);-webkit-text-stroke:0.7px #2a2a2a;">100%</span><span class="t" style="left:1085.74px;top:912.83px;font-size:12.6px;color:#2a2a2a;transform:scaleX(1.020);-webkit-text-stroke:0.7px #2a2a2a;">Cyan</span><div style="left:1136.18px;top:867.8px;width:62.2px;height:60.4px;background:linear-gradient(#8e8e8e,#5c5c5c);border-radius:4px;box-shadow:0 0 0 1px #2b2b2b"></div><div style="left:1142.78px;top:874.4px;width:49.4px;height:14.6px;background:rgb(255,0,255);border-radius:4.5px;box-shadow:inset 0 1px 1.5px rgba(0,0,0,.45)"></div><span class="t" style="left:1139.28px;top:897.63px;font-size:12.6px;color:#2a2a2a;transform:scaleX(1.024);-webkit-text-stroke:0.7px #2a2a2a;">100%</span><span class="t" style="left:1139.28px;top:912.83px;font-size:12.6px;color:#2a2a2a;transform:scaleX(1.142);-webkit-text-stroke:0.7px #2a2a2a;">Magenta</span><div style="left:1201.22px;top:867.8px;width:62.2px;height:60.4px;background:linear-gradient(#1a1a1a,#2e2e2e);border-radius:4px;box-shadow:0 0 0 1px #2b2b2b"></div><div style="left:1207.82px;top:874.4px;width:49.4px;height:14.6px;background:rgb(255,255,0);border-radius:4.5px;box-shadow:inset 0 1px 1.5px rgba(0,0,0,.45)"></div><span class="t" style="left:1212.32px;top:897.63px;font-size:12.6px;color:#fff;transform:scaleX(1.024);-webkit-text-stroke:0.7px #fff;">100%</span><span class="t" style="left:1212.32px;top:912.83px;font-size:12.6px;color:#fff;transform:scaleX(1.113);-webkit-text-stroke:0.7px #fff;">Yellow</span><div style="left:0.5px;top:930.5px;width:12px;height:13.5px;background:#8a8a8a;border-radius:2px"></div><svg style="left:2.5px;top:932px" width="8" height="11" viewBox="0 0 8 11"><path d="M7 0.5V10.5L1 5.5Z" fill="#333"/></svg><div style="left:449px;top:931px;width:796px;height:12.5px;background:#454545;border-radius:6px"></div><div style="left:1249.5px;top:930.5px;width:12px;height:13.5px;background:#8a8a8a;border-radius:2px"></div><svg style="left:1252px;top:932px" width="8" height="11" viewBox="0 0 8 11"><path d="M1 0.5V10.5L7 5.5Z" fill="#333"/></svg><div style="left:1264px;top:867.8px;width:60px;height:23px;background:linear-gradient(#8c8c8c,#6e6e6e);border-radius:4px 4px 0 0;border:1px solid #4a4a4a"></div><div style="left:1284.5px;top:871px;width:19px;height:16px;border-radius:50%;background:linear-gradient(#6a6a6a,#888)"></div><svg style="left:1288.5px;top:875px" width="11" height="7" viewBox="0 0 11 7"><path d="M0.5 6.5H10.5L5.5 0.5Z" fill="#2c2c2c"/></svg><div style="left:1264px;top:890.5px;width:60px;height:53.5px;background:linear-gradient(#7c7c7c,#5a5a5a);border:1px solid #4a4a4a;border-radius:0 0 4px 4px"></div><div style="left:1274.3px;top:898px;width:39.2px;height:38.4px;background:linear-gradient(#c8c8c8 0,#bdbdbd 48%,#8c8c8c 52%,#9a9a9a 100%);border:2.8px solid #262626;border-radius:7px"></div><div style="left:1285.8px;top:909.2px;width:17.2px;height:16.8px;background:linear-gradient(#202020 0,#181818 48%,#000 52%)"></div><div style="left:1325px;top:867px;width:57.9px;height:38.4px;background:linear-gradient(#949494,#5c5c5c);border-left:1px solid #4c4c4c"></div><div style="left:1341.7px;top:873.8px;width:25.4px;height:25.4px;border-radius:50%;background:linear-gradient(#6c6c6c,#a2a2a2)"></div><svg style="left:1342.4px;top:874.5px" width="24" height="24" viewBox="-12 -12 24 24"><rect x="-5" y="-5" width="10" height="10" fill="#363636"/></svg><div style="left:1382.9px;top:867px;width:56.4px;height:38.4px;background:linear-gradient(#949494,#5c5c5c);border-left:1px solid #4c4c4c"></div><div style="left:1398.1px;top:873.8px;width:25.4px;height:25.4px;border-radius:50%;background:linear-gradient(#6c6c6c,#a2a2a2)"></div><svg style="left:1398.8px;top:874.5px" width="24" height="24" viewBox="-12 -12 24 24"><path d="M-3.8 -5.8V5.8L6 0Z" fill="#333"/></svg><div style="left:1439.3px;top:867px;width:56.4px;height:38.4px;background:linear-gradient(#949494,#5c5c5c);border-left:1px solid #4c4c4c"></div><div style="left:1454.5px;top:873.8px;width:25.4px;height:25.4px;border-radius:50%;background:linear-gradient(#6c6c6c,#a2a2a2)"></div><svg style="left:1455.2px;top:874.5px" width="24" height="24" viewBox="-12 -12 24 24"><g fill="none" stroke="#333" stroke-width="2.2"><path d="M-3.4 -5.4H-6.2V5.4H-3.4M3.4 -5.4H6.2V5.4H3.4"/><path d="M-2.6 0H2.6" stroke-dasharray="1.8 1.6"/></g></svg><div style="left:1495.7px;top:867px;width:56.4px;height:38.4px;background:linear-gradient(#949494,#5c5c5c);border-left:1px solid #4c4c4c"></div><div style="left:1510.9px;top:873.8px;width:25.4px;height:25.4px;border-radius:50%;background:linear-gradient(#6c6c6c,#a2a2a2)"></div><svg style="left:1511.6px;top:874.5px" width="24" height="24" viewBox="-12 -12 24 24"><path d="M0 0C-2 -3.6 -7.6 -3.6 -7.6 0C-7.6 3.6 -2 3.6 0 0C2 -3.6 7.6 -3.6 7.6 0C7.6 3.6 2 3.6 0 0Z" fill="none" stroke="#363636" stroke-width="2.1"/></svg><div style="left:1552.1px;top:867px;width:56.4px;height:38.4px;background:linear-gradient(#3d3d3d,#2d2d2d);border-left:1px solid #3a3a3a"></div><div style="left:1567.3px;top:873.8px;width:25.4px;height:25.4px;border-radius:50%;background:linear-gradient(#2b2b2b,#3e3e3e)"></div><svg style="left:1568px;top:874.5px" width="24" height="24" viewBox="-12 -12 24 24"><g fill="none" stroke="#242424" stroke-width="2.6"><path d="M-5.6 -1.2A5.8 5.8 0 0 1 4.6 -3.6"/><path d="M5.6 1.2A5.8 5.8 0 0 1 -4.6 3.6"/></g><path d="M2.2 -6.4L6.6 -1.6L7 -7Z M-2.2 6.4L-6.6 1.6L-7 7Z" fill="#242424"/></svg><div style="left:1608.5px;top:867px;width:56.4px;height:38.4px;background:linear-gradient(#3d3d3d,#2d2d2d);border-left:1px solid #3a3a3a"></div><div style="left:1623.7px;top:873.8px;width:25.4px;height:25.4px;border-radius:50%;background:linear-gradient(#2b2b2b,#3e3e3e)"></div><svg style="left:1624.4px;top:874.5px" width="24" height="24" viewBox="-12 -12 24 24"></svg><div style="left:1325px;top:906px;width:170px;height:38px;background:linear-gradient(#a2a2a2 0,#8e8e8e 45%,#747474 55%,#6a6a6a 100%);border:1px solid #4a4a4a;border-radius:3px"></div><div style="left:1496.8px;top:906px;width:172px;height:38px;background:linear-gradient(#a2a2a2 0,#8e8e8e 45%,#747474 55%,#6a6a6a 100%);border:1px solid #4a4a4a;border-radius:3px"></div><div style="left:1351.3px;top:913.3px;width:24.4px;height:24.4px;border-radius:50%;background:linear-gradient(#7c7c7c,#a4a4a4)"></div><div style="left:1618.2px;top:912.6px;width:24.4px;height:24.4px;border-radius:50%;background:linear-gradient(#7c7c7c,#a4a4a4)"></div><svg style="left:1356.2px;top:919px" width="14" height="13" viewBox="0 0 14 13"><path d="M6 1.2L1.5 6.5L6 11.8M12 1.2L7.5 6.5L12 11.8" fill="none" stroke="#3a3a3a" stroke-width="1.9"/></svg><svg style="left:1623.7px;top:918.3px" width="14" height="13" viewBox="0 0 14 13"><path d="M2 1.2L6.5 6.5L2 11.8M8 1.2L12.5 6.5L8 11.8" fill="none" stroke="#3a3a3a" stroke-width="1.9"/></svg><span class="t" style="left:1396.6px;top:912.57px;font-size:26.5px;color:#353535;transform:scaleX(1.078);-webkit-text-stroke:0.5px #353535;">Back</span><span class="t" style="left:1530.5px;top:912.57px;font-size:26.5px;color:#353535;transform:scaleX(1.183);-webkit-text-stroke:0.5px #353535;">Next</span><div style="left:1664px;top:866px;width:3px;height:79px;background:linear-gradient(90deg,rgba(30,30,30,.2),#1e1e1e)"></div><div style="left:1264px;top:944px;width:403px;height:1px;background:#2c2c2c"></div></div></body></html>
